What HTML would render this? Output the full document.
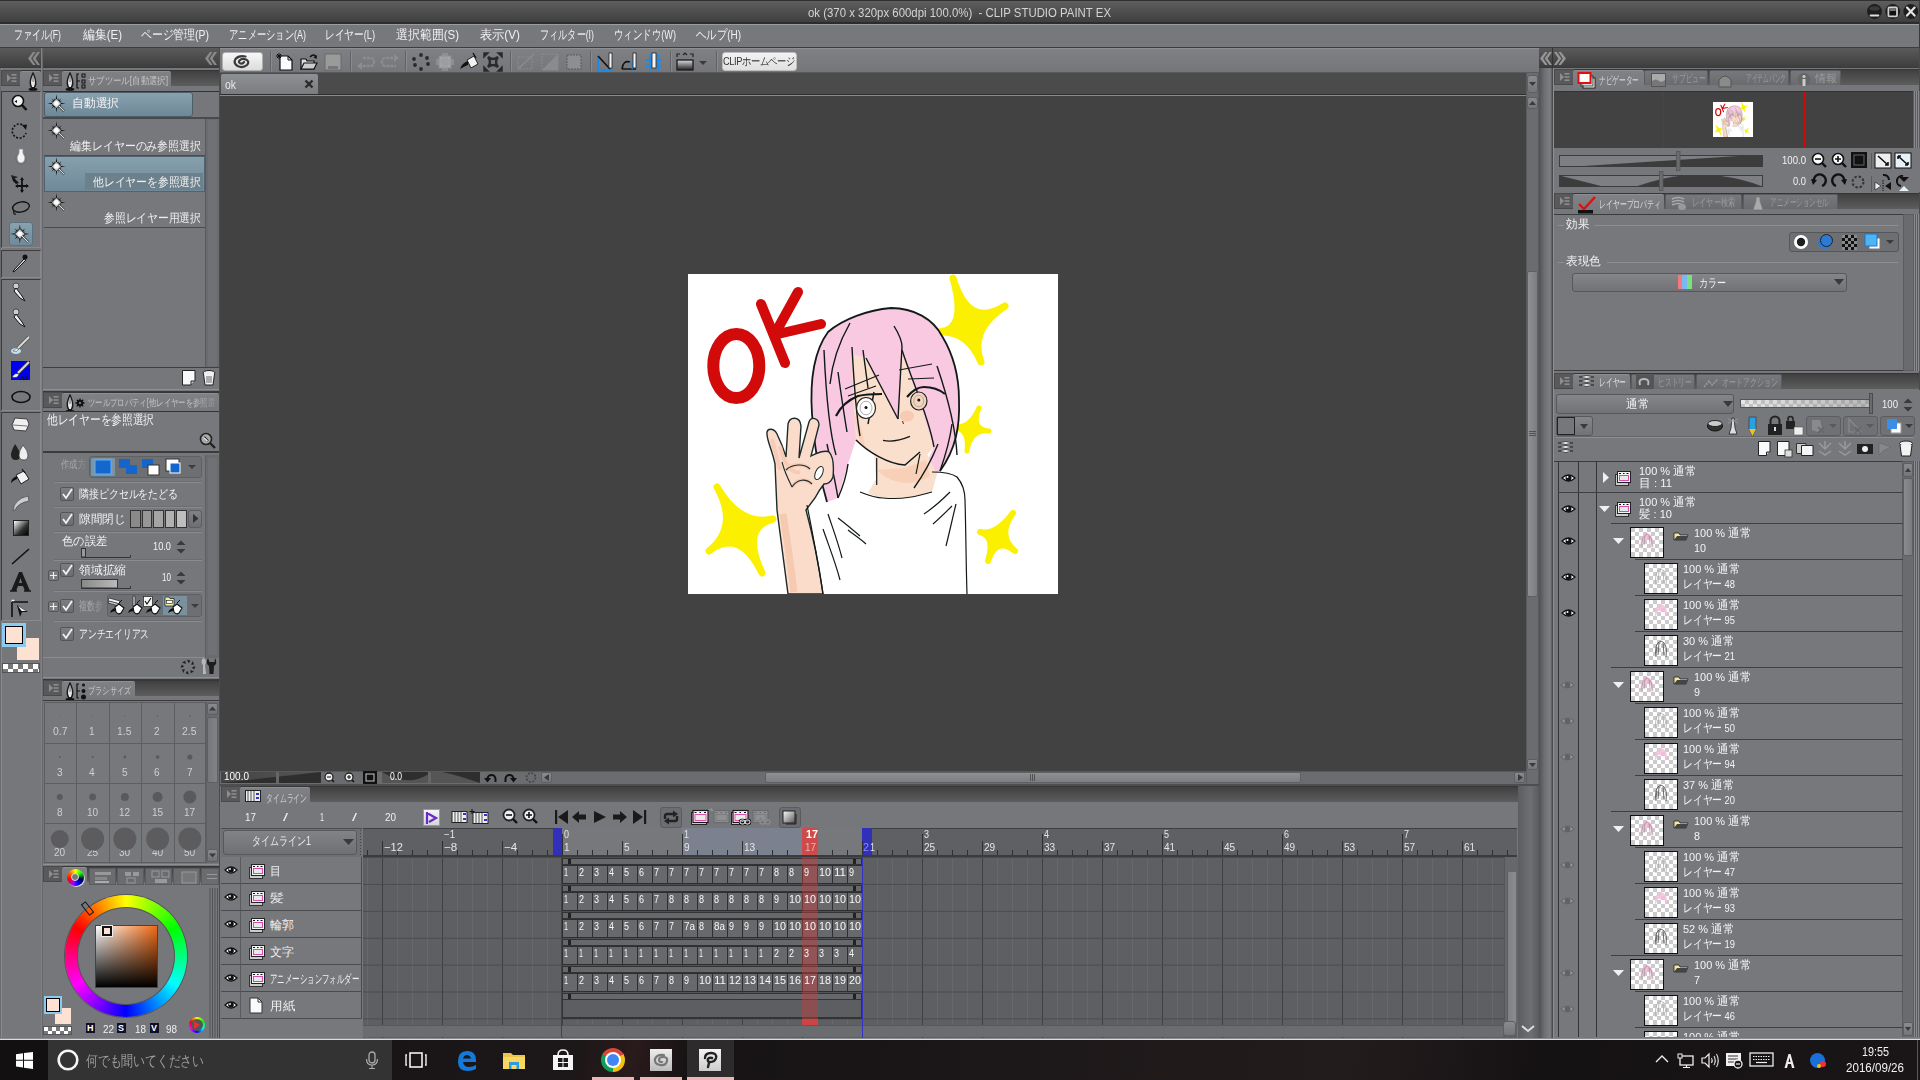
<!DOCTYPE html><html><head><meta charset="utf-8"><style>
html,body{margin:0;padding:0}
body{width:1920px;height:1080px;overflow:hidden;position:relative;background:#424242;font-family:"Liberation Sans",sans-serif}
.a{position:absolute;box-sizing:border-box}
.t{position:absolute;white-space:nowrap;line-height:1}
.f span{display:inline-block;transform-origin:0 0}
svg{position:absolute;overflow:visible}
</style></head><body>
<div class="a" style="left:0px;top:0px;width:1920px;height:24px;background:linear-gradient(#2f2f2f 0,#2f2f2f 1px,#5e5e5e 1px,#3f3f3f 22px,#2c2c2c 22px)"></div>
<div class="t f" style="left:808px;top:7px;width:303px;color:#d4d4d4;font-size:12px"><span>ok (370 x 320px 600dpi 100.0%)&nbsp; - CLIP STUDIO PAINT EX</span></div>
<svg style="left:1850px;top:0px;" width="70" height="24" viewBox="0 0 70 24"><circle cx="24.5" cy="11.5" r="7.4" fill="#1e1e1e"/><ellipse cx="24.5" cy="8.5" rx="5" ry="2.2" fill="#3a3a3a"/><rect x="19.7" y="14.6" width="9.6" height="1.8" rx="0.9" fill="#e0e0e0"/></svg>
<svg style="left:1850px;top:0px;" width="70" height="24" viewBox="0 0 70 24"><circle cx="42.700000000000045" cy="11.5" r="7.4" fill="#1e1e1e"/><rect x="38.40000000000005" y="7.5" width="8.6" height="8.8" rx="1" fill="#111" stroke="#cfcfcf" stroke-width="1.8"/><rect x="39.700000000000045" y="9" width="6" height="2" fill="#777"/></svg>
<svg style="left:1850px;top:0px;" width="70" height="24" viewBox="0 0 70 24"><circle cx="60.799999999999955" cy="11.5" r="7.4" fill="#1e1e1e"/><path d="M56.99999999999996 7.6 L64.59999999999995 15.6 M64.59999999999995 7.6 L56.99999999999996 15.6" stroke="#e4e4e4" stroke-width="2.2" stroke-linecap="round"/></svg>
<div class="a" style="left:1919px;top:0px;width:1px;height:47px;background:#3a3a3a"></div>
<div class="a" style="left:0px;top:24px;width:1919px;height:23px;background:linear-gradient(#9b9ca0 0,#9b9ca0 1px,#77787c 1px)"></div>
<div class="t f" style="left:14px;top:29px;width:47px;color:#f0f0f0;font-size:12.5px"><span>ファイル(F)</span></div>
<div class="t f" style="left:82.5px;top:29px;width:39px;color:#f0f0f0;font-size:12.5px"><span>編集(E)</span></div>
<div class="t f" style="left:141px;top:29px;width:68px;color:#f0f0f0;font-size:12.5px"><span>ページ管理(P)</span></div>
<div class="t f" style="left:229px;top:29px;width:77px;color:#f0f0f0;font-size:12.5px"><span>アニメーション(A)</span></div>
<div class="t f" style="left:325px;top:29px;width:50px;color:#f0f0f0;font-size:12.5px"><span>レイヤー(L)</span></div>
<div class="t f" style="left:396px;top:29px;width:63px;color:#f0f0f0;font-size:12.5px"><span>選択範囲(S)</span></div>
<div class="t f" style="left:480px;top:29px;width:40px;color:#f0f0f0;font-size:12.5px"><span>表示(V)</span></div>
<div class="t f" style="left:540px;top:29px;width:54px;color:#f0f0f0;font-size:12.5px"><span>フィルター(I)</span></div>
<div class="t f" style="left:614px;top:29px;width:62px;color:#f0f0f0;font-size:12.5px"><span>ウィンドウ(W)</span></div>
<div class="t f" style="left:696px;top:29px;width:45px;color:#f0f0f0;font-size:12.5px"><span>ヘルプ(H)</span></div>
<div class="a" style="left:0px;top:47px;width:1920px;height:1px;background:#3d3d3d"></div>
<div class="a" style="left:0px;top:48px;width:43px;height:992px;background:#76777b"></div>
<div class="a" style="left:0px;top:68px;width:1px;height:970px;background:#6a6b6f"></div>
<div class="a" style="left:1px;top:68px;width:1px;height:970px;background:#8a8b8f"></div>
<div class="a" style="left:0px;top:48px;width:41px;height:20px;background:linear-gradient(#5a5a5a,#3e3e3e);border-bottom:1px solid #3a3a3a"></div>
<svg style="left:28px;top:52px;" width="12" height="13" viewBox="0 0 12 13"><path d="M5 0 L0 6.5 L5 13 L7.6 13 L3.2 6.5 L7.6 0Z M9.4 0 L4.6 6.5 L9.4 13 L12 13 L7.6 6.5 L12 0Z" fill="#8a8a8a"/></svg>
<div class="a" style="left:41px;top:48px;width:2px;height:992px;background:linear-gradient(90deg,#8c8d90,#5b5c60)"></div>
<div class="a" style="left:1px;top:70px;width:40px;height:16px;background:linear-gradient(#404040,#5d5d5d);border-top:1px solid #363636"></div>
<div class="a" style="left:1px;top:86px;width:40px;height:5px;background:#76777b"></div>
<div class="a" style="left:1px;top:70px;width:20px;height:16px;background:#59595b;border:1px solid #4a4a4a"></div>
<svg style="left:1px;top:70px;" width="20" height="16" viewBox="0 0 20 16"><path d="M6 4 L10 8 L6 12Z" fill="#8d8d8d"/><rect x="10.5" y="4" width="5" height="1.6" fill="#8d8d8d"/><rect x="10.5" y="7.2" width="5" height="1.6" fill="#8d8d8d"/><rect x="10.5" y="10.4" width="5" height="1.6" fill="#8d8d8d"/></svg>
<div class="a" style="left:20px;top:71px;width:21px;height:20px;background:linear-gradient(#808185,#76777b);border-top:1px solid #8e8f93;border-radius:2px 2px 0 0"></div>
<svg style="left:28px;top:71px;" width="10" height="20" viewBox="0 0 10 20"><path d="M5 0.5 C7.2 5 8.8 9 8.4 13 C8.2 15 7.4 16.2 6.8 17 L3.2 17 C2.6 16.2 1.8 15 1.6 13 C1.2 9 2.8 5 5 0.5Z" fill="#1a1a1a"/><path d="M5 3.8 C6.4 7 7.2 10 6.9 12.8 C6.7 14.2 6.2 15.2 5.8 16 L4.2 16 C3.8 15.2 3.3 14.2 3.1 12.8 C2.8 10 3.6 7 5 3.8Z" fill="#e8e8e8"/><path d="M5 5 V11" stroke="#555" stroke-width=".9"/><ellipse cx="5" cy="18.3" rx="4.4" ry="1.5" fill="#111"/></svg>
<div class="a" style="left:1px;top:91px;width:40px;height:157px;border:1px solid #3d3d3d;border-right-color:#8a8a8e;border-bottom-color:#8a8a8e;background:#77787c"></div>
<div class="a" style="left:1px;top:250px;width:40px;height:28px;border:1px solid #3d3d3d;border-right-color:#8a8a8e;border-bottom-color:#8a8a8e;background:#77787c"></div>
<div class="a" style="left:1px;top:279px;width:40px;height:132px;border:1px solid #3d3d3d;border-right-color:#8a8a8e;border-bottom-color:#8a8a8e;background:#77787c"></div>
<div class="a" style="left:1px;top:412px;width:40px;height:209px;border:1px solid #3d3d3d;border-right-color:#8a8a8e;border-bottom-color:#8a8a8e;background:#77787c"></div>
<svg style="left:8px;top:93px;" width="26" height="20" viewBox="0 0 26 20"><circle cx="10" cy="8" r="5.5" fill="#f2f2f2" stroke="#111" stroke-width="1.6"/><path d="M6.5 8.5 L9 7 L9 10Z" fill="#111"/><path d="M14 12 L18.5 17" stroke="#111" stroke-width="2.6"/></svg>
<svg style="left:8px;top:121px;" width="26" height="20" viewBox="0 0 26 20"><path d="M17 6 A7 7 0 1 0 18 12" fill="none" stroke="#111" stroke-width="1.6" stroke-dasharray="2 1.6"/><path d="M14 4 L19 3.5 L18 9Z" fill="#111"/></svg>
<svg style="left:8px;top:147px;" width="26" height="20" viewBox="0 0 26 20"><circle cx="13" cy="12" r="6" fill="#6a6a6a" opacity=".5"/><path d="M11 2 H15 V6 L17 10 Q17 16 13 16 Q9 16 9 10 L11 6Z" fill="#f4f4f4" stroke="#888" stroke-width=".8"/></svg>
<svg style="left:8px;top:173px;" width="26" height="20" viewBox="0 0 26 20"><path d="M3 2 L11 10 L8 11 L5 8Z" fill="#111"/><path d="M3 2 L10 4 L6 6Z" fill="#222"/><path d="M14 6 V19 M8 13 H20" stroke="#111" stroke-width="1.8"/><path d="M14 4 L12 7 H16Z M14 20 L12 17 H16Z M21 13 L18 11 V15Z M7 13 L10 11 V15Z" fill="#111"/></svg>
<svg style="left:8px;top:198px;" width="26" height="20" viewBox="0 0 26 20"><ellipse cx="13" cy="9" rx="8.5" ry="5" transform="rotate(-12 13 9)" fill="none" stroke="#111" stroke-width="1.4"/><path d="M6 13 Q5 17 8 16" fill="none" stroke="#111" stroke-width="1.2"/></svg>
<div class="a" style="left:9px;top:222px;width:24px;height:24px;background:linear-gradient(#88a2b0,#6f8a99);border:1px solid #5c7280;border-radius:3px"></div>
<svg style="left:12px;top:226px;" width="18" height="18" viewBox="0 0 18 18"><g transform="scale(1.125)"><path d="M7.00 8.20 L15.60 7.00 L7.00 5.80Z M6.62 7.92 L11.99 9.07 L7.38 6.08Z M6.29 7.71 L11.67 11.67 L7.71 6.29Z M6.08 7.38 L9.07 11.99 L7.92 6.62Z M5.80 7.00 L7.00 15.60 L8.20 7.00Z M6.08 6.62 L4.93 11.99 L7.92 7.38Z M6.29 6.29 L2.33 11.67 L7.71 7.71Z M6.62 6.08 L2.01 9.07 L7.38 7.92Z M7.00 5.80 L-1.60 7.00 L7.00 8.20Z M7.38 6.08 L2.01 4.93 L6.62 7.92Z M7.71 6.29 L2.33 2.33 L6.29 7.71Z M7.92 6.62 L4.93 2.01 L6.08 7.38Z M8.20 7.00 L7.00 -1.60 L5.80 7.00Z M7.92 7.38 L9.07 2.01 L6.08 6.62Z M7.71 7.71 L11.67 2.33 L6.29 6.29Z M7.38 7.92 L11.99 4.93 L6.62 6.08Z " fill="#111"/><circle cx="7" cy="7" r="4.2" fill="#222" opacity=".5"/><path d="M7 2.8 L11.2 7 L7 11.2 L2.8 7Z" fill="#c8c8c8"/><circle cx="7" cy="7" r="2.2" fill="#fff"/><path d="M9 9 L14.5 14.5" stroke="#222" stroke-width="2"/><path d="M9 9 L14.5 14.5" stroke="#e8e8e8" stroke-width="1"/></g></svg>
<svg style="left:8px;top:253px;" width="26" height="20" viewBox="0 0 26 20"><circle cx="17" cy="4" r="2.5" fill="#111"/><path d="M16 6 L6 17 L5 19 L7 18 L18 7Z" fill="#ddd" stroke="#111" stroke-width="1"/></svg>
<svg style="left:8px;top:282px;" width="26" height="20" viewBox="0 0 26 20"><circle cx="8" cy="4" r="3" fill="#ccc" stroke="#333" stroke-width=".8"/><path d="M8 6 L14 14 L17 19 L12 16 L6 9Z" fill="#eee" stroke="#111" stroke-width="1"/></svg>
<svg style="left:8px;top:308px;" width="26" height="20" viewBox="0 0 26 20"><circle cx="8" cy="4" r="3" fill="#ccc" stroke="#333" stroke-width=".8"/><path d="M8 6 L14 14 L17 19 L12 16 L6 9Z" fill="#eee" stroke="#111" stroke-width="1"/></svg>
<svg style="left:8px;top:335px;" width="26" height="20" viewBox="0 0 26 20"><path d="M21 2 L10 13" stroke="#555" stroke-width="3.5"/><path d="M21 2 L10 13" stroke="#ddd" stroke-width="1.8"/><ellipse cx="8" cy="16" rx="5" ry="3" fill="#bfe0f4"/><path d="M5 16 Q8 12 11 14 Q9 18 5 16Z" fill="#eee" stroke="#555" stroke-width=".6"/></svg>
<div class="a" style="left:11px;top:361px;width:19px;height:19px;background:#0000ee"></div>
<svg style="left:8px;top:361px;" width="26" height="20" viewBox="0 0 26 20"><path d="M21 1 L10 12" stroke="#444" stroke-width="3.5"/><path d="M21 1 L10 12" stroke="#ddd" stroke-width="1.8"/><path d="M4 16 Q7 11 11 13 Q10 18 4 16Z" fill="#eee" stroke="#333" stroke-width=".7"/><path d="M12 17 q2 -3 4 0 q2 -3 4 0 M12 19 q2 -3 4 0 q2 -3 4 0" stroke="#111" fill="none" stroke-width="1"/></svg>
<svg style="left:8px;top:387px;" width="26" height="20" viewBox="0 0 26 20"><ellipse cx="13" cy="10" rx="9" ry="5.5" fill="none" stroke="#111" stroke-width="1.6"/></svg>
<svg style="left:8px;top:415px;" width="26" height="20" viewBox="0 0 26 20"><path d="M7 3 L19 4 L21 9 L18 16 L6 15 L4 10Z" fill="#f0f0f0" stroke="#333" stroke-width=".9"/><path d="M5 10 L19 11" stroke="#777" stroke-width="1"/></svg>
<svg style="left:8px;top:442px;" width="26" height="20" viewBox="0 0 26 20"><path d="M7 2 Q3 9 3 13 Q3 18 8 18 Q12 18 12 13 Q12 9 7 2Z" fill="#222"/><path d="M15 3 Q11 9 11 13 Q11 18 16 18 Q20 18 20 13 Q20 9 15 3Z" fill="#eee" stroke="#333" stroke-width=".7"/></svg>
<svg style="left:8px;top:467px;" width="26" height="20" viewBox="0 0 26 20"><path d="M8 8 L16 4 L21 12 L13 17Z" fill="#f2f2f2" stroke="#222" stroke-width="1"/><path d="M9 9 Q3 11 3 16 Q6 13 9 12" fill="#111"/><path d="M14 2 L17 6" stroke="#111" stroke-width="1.2"/></svg>
<svg style="left:8px;top:493px;" width="26" height="20" viewBox="0 0 26 20"><path d="M5 18 Q6 6 20 3 L21 8 Q10 10 7 17Z" fill="#ccc" stroke="#444" stroke-width=".7"/></svg>
<div class="a" style="left:13px;top:520px;width:16px;height:16px;background:linear-gradient(135deg,#fff,#333 60%,#000);border:1px solid #222"></div>
<svg style="left:8px;top:546px;" width="26" height="20" viewBox="0 0 26 20"><path d="M4 18 L21 3" stroke="#111" stroke-width="1.6"/></svg>
<svg style="left:9px;top:570px;" width="24" height="24" viewBox="0 0 24 24"><path d="M2 21 L10 2 H13 L21 21 H16 L14 16 H9 L7 21Z M10 13 H13 L11.5 8Z" fill="#1a1a1a"/><path d="M1 21 H8 M15 21 H22" stroke="#1a1a1a" stroke-width="1.5"/></svg>
<svg style="left:8px;top:598px;" width="26" height="20" viewBox="0 0 26 20"><circle cx="5" cy="3" r="1.5" fill="#fff"/><path d="M4 4 V19 M4 4 H20" stroke="#111" stroke-width="1.6"/><path d="M9 7 L20 14 L14 14 L12 19Z" fill="#111"/><path d="M10 8 L18 13 L13.5 13Z" fill="#eee"/></svg>
<div class="a" style="left:16px;top:637px;width:24px;height:24px;background:#fde1d2;border:1px solid #777"></div>
<div class="a" style="left:2px;top:623px;width:24px;height:24px;background:#fde1d2;border:3px solid #8ccbef;box-shadow:inset 0 0 0 1px #000"></div>
<div class="a" style="left:2px;top:663px;width:38px;height:10px;background-color:#fff;background-image:linear-gradient(45deg,#777 25%,transparent 25%,transparent 75%,#777 75%),linear-gradient(45deg,#777 25%,transparent 25%,transparent 75%,#777 75%);background-size:10px 10px;background-position:0 0,5px 5px;border:1px solid #555"></div>
<div class="a" style="left:43px;top:48px;width:177px;height:992px;background:#76777b"></div>
<div class="a" style="left:43px;top:48px;width:177px;height:20px;background:linear-gradient(#5a5a5a,#3e3e3e);border-bottom:1px solid #3a3a3a"></div>
<svg style="left:205px;top:52px;" width="12" height="13" viewBox="0 0 12 13"><path d="M5 0 L0 6.5 L5 13 L7.6 13 L3.2 6.5 L7.6 0Z M9.4 0 L4.6 6.5 L9.4 13 L12 13 L7.6 6.5 L12 0Z" fill="#8a8a8a"/></svg>
<div class="a" style="left:219px;top:48px;width:1px;height:992px;background:#4b4b4b"></div>
<div class="a" style="left:43px;top:70px;width:176px;height:16px;background:linear-gradient(#404040,#5d5d5d);border-top:1px solid #363636"></div>
<div class="a" style="left:43px;top:86px;width:176px;height:5px;background:#76777b"></div>
<div class="a" style="left:43px;top:70px;width:20px;height:16px;background:#59595b;border:1px solid #4a4a4a"></div>
<svg style="left:43px;top:70px;" width="20" height="16" viewBox="0 0 20 16"><path d="M6 4 L10 8 L6 12Z" fill="#8d8d8d"/><rect x="10.5" y="4" width="5" height="1.6" fill="#8d8d8d"/><rect x="10.5" y="7.2" width="5" height="1.6" fill="#8d8d8d"/><rect x="10.5" y="10.4" width="5" height="1.6" fill="#8d8d8d"/></svg>
<div class="a" style="left:62px;top:71px;width:109px;height:20px;background:linear-gradient(#808185,#76777b);border-top:1px solid #8e8f93;border-radius:2px 2px 0 0"></div>
<svg style="left:65px;top:71px;" width="10" height="20" viewBox="0 0 10 20"><path d="M5 0.5 C7.2 5 8.8 9 8.4 13 C8.2 15 7.4 16.2 6.8 17 L3.2 17 C2.6 16.2 1.8 15 1.6 13 C1.2 9 2.8 5 5 0.5Z" fill="#1a1a1a"/><path d="M5 3.8 C6.4 7 7.2 10 6.9 12.8 C6.7 14.2 6.2 15.2 5.8 16 L4.2 16 C3.8 15.2 3.3 14.2 3.1 12.8 C2.8 10 3.6 7 5 3.8Z" fill="#e8e8e8"/><path d="M5 5 V11" stroke="#555" stroke-width=".9"/><ellipse cx="5" cy="18.3" rx="4.4" ry="1.5" fill="#111"/></svg>
<svg style="left:75px;top:71px;" width="12" height="20" viewBox="0 0 12 20"><path d="M4 3 H2 V17 H4 M2 10 H5" stroke="#111" fill="none" stroke-width="1.2"/><rect x="7" y="3" width="3" height="3" fill="none" stroke="#111"/><rect x="7" y="9" width="3" height="3" fill="none" stroke="#111"/><rect x="7" y="14" width="3" height="3" fill="none" stroke="#111"/></svg>
<div class="t f" style="left:88px;top:76px;width:80px;color:#c6c6c6;font-size:10px"><span>サブツール[自動選択]</span></div>
<div class="a" style="left:43px;top:91px;width:176px;height:277px;border-top:1px solid #333;background:#76777b"></div>
<div class="a" style="left:44px;top:92px;width:149px;height:25px;background:linear-gradient(#88a1af,#6e8897);border:1px solid #4d5d68;border-radius:3px"></div>
<svg style="left:49px;top:96px;" width="17" height="17" viewBox="0 0 17 17"><g transform="scale(1.0625)"><path d="M7.00 8.20 L15.60 7.00 L7.00 5.80Z M6.62 7.92 L11.99 9.07 L7.38 6.08Z M6.29 7.71 L11.67 11.67 L7.71 6.29Z M6.08 7.38 L9.07 11.99 L7.92 6.62Z M5.80 7.00 L7.00 15.60 L8.20 7.00Z M6.08 6.62 L4.93 11.99 L7.92 7.38Z M6.29 6.29 L2.33 11.67 L7.71 7.71Z M6.62 6.08 L2.01 9.07 L7.38 7.92Z M7.00 5.80 L-1.60 7.00 L7.00 8.20Z M7.38 6.08 L2.01 4.93 L6.62 7.92Z M7.71 6.29 L2.33 2.33 L6.29 7.71Z M7.92 6.62 L4.93 2.01 L6.08 7.38Z M8.20 7.00 L7.00 -1.60 L5.80 7.00Z M7.92 7.38 L9.07 2.01 L6.08 6.62Z M7.71 7.71 L11.67 2.33 L6.29 6.29Z M7.38 7.92 L11.99 4.93 L6.62 6.08Z " fill="#111"/><circle cx="7" cy="7" r="4.2" fill="#222" opacity=".5"/><path d="M7 2.8 L11.2 7 L7 11.2 L2.8 7Z" fill="#c8c8c8"/><circle cx="7" cy="7" r="2.2" fill="#fff"/><path d="M9 9 L14.5 14.5" stroke="#222" stroke-width="2"/><path d="M9 9 L14.5 14.5" stroke="#e8e8e8" stroke-width="1"/></g></svg>
<div class="t f" style="left:72px;top:97px;width:47px;color:#f4f4f4;font-size:12px"><span>自動選択</span></div>
<div class="a" style="left:43px;top:117px;width:176px;height:2px;background:#4a4a4a"></div>
<div class="a" style="left:205px;top:119px;width:14px;height:249px;background:#6a6b6f;border-left:1px solid #58595c"></div>
<div class="a" style="left:208px;top:120px;width:9px;height:246px;background:#707175"></div>
<div class="a" style="left:44px;top:120px;width:161px;height:36px;background:#77787c;border-bottom:1px solid #4a4a4a"></div>
<svg style="left:49px;top:123px;" width="17" height="17" viewBox="0 0 17 17"><g transform="scale(1.0625)"><path d="M7.00 8.20 L15.60 7.00 L7.00 5.80Z M6.62 7.92 L11.99 9.07 L7.38 6.08Z M6.29 7.71 L11.67 11.67 L7.71 6.29Z M6.08 7.38 L9.07 11.99 L7.92 6.62Z M5.80 7.00 L7.00 15.60 L8.20 7.00Z M6.08 6.62 L4.93 11.99 L7.92 7.38Z M6.29 6.29 L2.33 11.67 L7.71 7.71Z M6.62 6.08 L2.01 9.07 L7.38 7.92Z M7.00 5.80 L-1.60 7.00 L7.00 8.20Z M7.38 6.08 L2.01 4.93 L6.62 7.92Z M7.71 6.29 L2.33 2.33 L6.29 7.71Z M7.92 6.62 L4.93 2.01 L6.08 7.38Z M8.20 7.00 L7.00 -1.60 L5.80 7.00Z M7.92 7.38 L9.07 2.01 L6.08 6.62Z M7.71 7.71 L11.67 2.33 L6.29 6.29Z M7.38 7.92 L11.99 4.93 L6.62 6.08Z " fill="#111"/><circle cx="7" cy="7" r="4.2" fill="#222" opacity=".5"/><path d="M7 2.8 L11.2 7 L7 11.2 L2.8 7Z" fill="#c8c8c8"/><circle cx="7" cy="7" r="2.2" fill="#fff"/><path d="M9 9 L14.5 14.5" stroke="#222" stroke-width="2"/><path d="M9 9 L14.5 14.5" stroke="#e8e8e8" stroke-width="1"/></g></svg>
<div class="t f" style="left:70px;top:140px;width:131px;color:#f0f0f0;font-size:12px"><span>編集レイヤーのみ参照選択</span></div>
<div class="a" style="left:44px;top:156px;width:161px;height:36px;background:linear-gradient(#86a0ae,#6f8998);border:1px solid #4f6370"></div>
<div class="a" style="left:85px;top:173px;width:118px;height:17px;background:#6d818d"></div>
<svg style="left:49px;top:159px;" width="17" height="17" viewBox="0 0 17 17"><g transform="scale(1.0625)"><path d="M7.00 8.20 L15.60 7.00 L7.00 5.80Z M6.62 7.92 L11.99 9.07 L7.38 6.08Z M6.29 7.71 L11.67 11.67 L7.71 6.29Z M6.08 7.38 L9.07 11.99 L7.92 6.62Z M5.80 7.00 L7.00 15.60 L8.20 7.00Z M6.08 6.62 L4.93 11.99 L7.92 7.38Z M6.29 6.29 L2.33 11.67 L7.71 7.71Z M6.62 6.08 L2.01 9.07 L7.38 7.92Z M7.00 5.80 L-1.60 7.00 L7.00 8.20Z M7.38 6.08 L2.01 4.93 L6.62 7.92Z M7.71 6.29 L2.33 2.33 L6.29 7.71Z M7.92 6.62 L4.93 2.01 L6.08 7.38Z M8.20 7.00 L7.00 -1.60 L5.80 7.00Z M7.92 7.38 L9.07 2.01 L6.08 6.62Z M7.71 7.71 L11.67 2.33 L6.29 6.29Z M7.38 7.92 L11.99 4.93 L6.62 6.08Z " fill="#111"/><circle cx="7" cy="7" r="4.2" fill="#222" opacity=".5"/><path d="M7 2.8 L11.2 7 L7 11.2 L2.8 7Z" fill="#c8c8c8"/><circle cx="7" cy="7" r="2.2" fill="#fff"/><path d="M9 9 L14.5 14.5" stroke="#222" stroke-width="2"/><path d="M9 9 L14.5 14.5" stroke="#e8e8e8" stroke-width="1"/></g></svg>
<div class="t f" style="left:93px;top:176px;width:108px;color:#f0f0f0;font-size:12px"><span>他レイヤーを参照選択</span></div>
<div class="a" style="left:44px;top:192px;width:161px;height:36px;background:#77787c;border-bottom:1px solid #4a4a4a"></div>
<svg style="left:49px;top:195px;" width="17" height="17" viewBox="0 0 17 17"><g transform="scale(1.0625)"><path d="M7.00 8.20 L15.60 7.00 L7.00 5.80Z M6.62 7.92 L11.99 9.07 L7.38 6.08Z M6.29 7.71 L11.67 11.67 L7.71 6.29Z M6.08 7.38 L9.07 11.99 L7.92 6.62Z M5.80 7.00 L7.00 15.60 L8.20 7.00Z M6.08 6.62 L4.93 11.99 L7.92 7.38Z M6.29 6.29 L2.33 11.67 L7.71 7.71Z M6.62 6.08 L2.01 9.07 L7.38 7.92Z M7.00 5.80 L-1.60 7.00 L7.00 8.20Z M7.38 6.08 L2.01 4.93 L6.62 7.92Z M7.71 6.29 L2.33 2.33 L6.29 7.71Z M7.92 6.62 L4.93 2.01 L6.08 7.38Z M8.20 7.00 L7.00 -1.60 L5.80 7.00Z M7.92 7.38 L9.07 2.01 L6.08 6.62Z M7.71 7.71 L11.67 2.33 L6.29 6.29Z M7.38 7.92 L11.99 4.93 L6.62 6.08Z " fill="#111"/><circle cx="7" cy="7" r="4.2" fill="#222" opacity=".5"/><path d="M7 2.8 L11.2 7 L7 11.2 L2.8 7Z" fill="#c8c8c8"/><circle cx="7" cy="7" r="2.2" fill="#fff"/><path d="M9 9 L14.5 14.5" stroke="#222" stroke-width="2"/><path d="M9 9 L14.5 14.5" stroke="#e8e8e8" stroke-width="1"/></g></svg>
<div class="t f" style="left:104px;top:212px;width:97px;color:#f0f0f0;font-size:12px"><span>参照レイヤー用選択</span></div>
<div class="a" style="left:43px;top:367px;width:176px;height:1px;background:#3f3f3f"></div>
<svg style="left:181px;top:369px;" width="16" height="18" viewBox="0 0 16 18"><path d="M1.5 1.5 H14 V12 L10 16 H1.5Z" fill="#f6f8fa" stroke="#222" stroke-width="1"/><path d="M14 12 H10 V16" fill="#ccc" stroke="#222" stroke-width="1"/></svg>
<svg style="left:201px;top:369px;" width="16" height="18" viewBox="0 0 16 18"><ellipse cx="8" cy="4" rx="6" ry="2.5" fill="#eee" stroke="#222"/><path d="M2.5 5 L4 16 H12 L13.5 5" fill="#f2f2f2" stroke="#222"/><path d="M6 7 V14 M8 7 V14 M10 7 V14" stroke="#666"/></svg>
<div class="a" style="left:43px;top:389px;width:176px;height:1px;background:#8e8f93"></div>
<div class="a" style="left:43px;top:391px;width:176px;height:1px;background:#3a3a3a"></div>
<div class="a" style="left:43px;top:392px;width:176px;height:16px;background:linear-gradient(#404040,#5d5d5d);border-top:1px solid #363636"></div>
<div class="a" style="left:43px;top:408px;width:176px;height:4px;background:#76777b"></div>
<div class="a" style="left:43px;top:392px;width:20px;height:16px;background:#59595b;border:1px solid #4a4a4a"></div>
<svg style="left:43px;top:392px;" width="20" height="16" viewBox="0 0 20 16"><path d="M6 4 L10 8 L6 12Z" fill="#8d8d8d"/><rect x="10.5" y="4" width="5" height="1.6" fill="#8d8d8d"/><rect x="10.5" y="7.2" width="5" height="1.6" fill="#8d8d8d"/><rect x="10.5" y="10.4" width="5" height="1.6" fill="#8d8d8d"/></svg>
<div class="a" style="left:62px;top:393px;width:157px;height:19px;background:linear-gradient(#808185,#76777b);border-top:1px solid #8e8f93;border-radius:2px 2px 0 0"></div>
<svg style="left:65px;top:393px;" width="10" height="20" viewBox="0 0 10 20"><path d="M5 0.5 C7.2 5 8.8 9 8.4 13 C8.2 15 7.4 16.2 6.8 17 L3.2 17 C2.6 16.2 1.8 15 1.6 13 C1.2 9 2.8 5 5 0.5Z" fill="#1a1a1a"/><path d="M5 3.8 C6.4 7 7.2 10 6.9 12.8 C6.7 14.2 6.2 15.2 5.8 16 L4.2 16 C3.8 15.2 3.3 14.2 3.1 12.8 C2.8 10 3.6 7 5 3.8Z" fill="#e8e8e8"/><path d="M5 5 V11" stroke="#555" stroke-width=".9"/><ellipse cx="5" cy="18.3" rx="4.4" ry="1.5" fill="#111"/></svg>
<svg style="left:75px;top:398px;" width="10" height="10" viewBox="0 0 10 10"><circle cx="5" cy="5" r="3.2" fill="#111"/><path d="M5 0.5 V9.5 M0.5 5 H9.5 M1.8 1.8 L8.2 8.2 M8.2 1.8 L1.8 8.2" stroke="#111" stroke-width="1.3"/><circle cx="5" cy="5" r="1.2" fill="#777"/></svg>
<div class="t f" style="left:88px;top:398px;width:127px;color:#c4c4c4;font-size:10px;-webkit-mask-image:linear-gradient(90deg,#000 80%,rgba(0,0,0,.3))"><span>ツールプロパティ[他レイヤーを参照選</span></div>
<div class="a" style="left:43px;top:411px;width:176px;height:42px;border-top:1px solid #333;border-bottom:2px solid #3b3b3b;background:#77787c"></div>
<div class="t f" style="left:47px;top:414px;width:107px;color:#f2f2f2;font-size:12.5px"><span>他レイヤーを参照選択</span></div>
<svg style="left:199px;top:432px;" width="18" height="17" viewBox="0 0 18 17"><circle cx="7" cy="7" r="5.5" fill="#aaa" stroke="#222" stroke-width="1.6"/><path d="M5 5 L9 9 M11 11 L16 16" stroke="#222" stroke-width="2.4"/><path d="M4.5 5.5 L8.5 9" stroke="#eee" stroke-width="1.4"/></svg>
<div class="a" style="left:43px;top:453px;width:176px;height:205px;background:#76777b;border-bottom:1px solid #8c8d91"></div>
<div class="a" style="left:205px;top:455px;width:14px;height:203px;background:#6a6b6f;border-left:1px solid #5e5f63"></div>
<div class="a" style="left:208px;top:458px;width:9px;height:197px;background:#707175"></div>
<div class="t f" style="left:61px;top:459px;width:25px;color:#a8a8a8;font-size:11px;-webkit-mask-image:linear-gradient(90deg,#000 60%,rgba(0,0,0,.3))"><span>作成方</span></div>
<div class="a" style="left:89px;top:456px;width:113px;height:22px;background:#6e6f73;border:1px solid #5f6064;border-radius:3px"></div>
<div class="a" style="left:90px;top:457px;width:26px;height:20px;background:#7e94a0;border:1px solid #5d7583;border-radius:2px"></div>
<svg style="left:90px;top:456px;" width="113" height="22" viewBox="0 0 113 22"><rect x="5" y="4" width="16" height="14" fill="#1566cf" stroke="#59b3ff" stroke-width="1"/><rect x="29" y="3" width="11" height="9" fill="#1466cc"/><rect x="36" y="9" width="11" height="9" fill="#1466cc"/><rect x="52" y="3" width="11" height="9" fill="#1466cc"/><rect x="58" y="9" width="11" height="10" fill="#fff" stroke="#333"/><rect x="76" y="3" width="13" height="12" fill="#fff" stroke="#333"/><rect x="80" y="7" width="10" height="10" fill="#1466cc" stroke="#fff"/><path d="M98 9 L106 9 L102 13Z" fill="#3d3d3d"/></svg>
<div class="a" style="left:54px;top:482px;width:148px;height:1px;background:#8a8b8f"></div>
<div class="a" style="left:54px;top:481px;width:148px;height:1px;background:#6c6d71"></div>
<div class="a" style="left:54px;top:507px;width:148px;height:1px;background:#8a8b8f"></div>
<div class="a" style="left:54px;top:506px;width:148px;height:1px;background:#6c6d71"></div>
<div class="a" style="left:54px;top:532px;width:148px;height:1px;background:#8a8b8f"></div>
<div class="a" style="left:54px;top:531px;width:148px;height:1px;background:#6c6d71"></div>
<div class="a" style="left:54px;top:560px;width:148px;height:1px;background:#8a8b8f"></div>
<div class="a" style="left:54px;top:559px;width:148px;height:1px;background:#6c6d71"></div>
<div class="a" style="left:54px;top:591px;width:148px;height:1px;background:#8a8b8f"></div>
<div class="a" style="left:54px;top:590px;width:148px;height:1px;background:#6c6d71"></div>
<div class="a" style="left:54px;top:621px;width:148px;height:1px;background:#8a8b8f"></div>
<div class="a" style="left:54px;top:620px;width:148px;height:1px;background:#6c6d71"></div>
<div class="a" style="left:60px;top:487px;width:14px;height:14px;background:linear-gradient(#7d7e82,#6a6b6f);border:1px solid #555;border-radius:2px"></div>
<svg style="left:60px;top:487px;" width="14" height="14" viewBox="0 0 14 14"><path d="M3 7 L6 11 L12 2" fill="none" stroke="#f2f2f2" stroke-width="1.8"/></svg>
<div class="t f" style="left:79px;top:488px;width:99px;color:#f2f2f2;font-size:12px"><span>隣接ピクセルをたどる</span></div>
<div class="a" style="left:60px;top:512px;width:14px;height:14px;background:linear-gradient(#7d7e82,#6a6b6f);border:1px solid #555;border-radius:2px"></div>
<svg style="left:60px;top:512px;" width="14" height="14" viewBox="0 0 14 14"><path d="M3 7 L6 11 L12 2" fill="none" stroke="#f2f2f2" stroke-width="1.8"/></svg>
<div class="t f" style="left:79px;top:513px;width:46px;color:#f2f2f2;font-size:12px"><span>隙間閉じ</span></div>
<div class="a" style="left:130.0px;top:510px;width:10.5px;height:18px;background:#8a8a8a;border:1px solid #333"></div>
<div class="a" style="left:141.6px;top:510px;width:10.5px;height:18px;background:#979797;border:1px solid #333"></div>
<div class="a" style="left:153.2px;top:510px;width:10.5px;height:18px;background:#a4a4a4;border:1px solid #333"></div>
<div class="a" style="left:164.8px;top:510px;width:10.5px;height:18px;background:#b1b1b1;border:1px solid #333"></div>
<div class="a" style="left:176.4px;top:510px;width:10.5px;height:18px;background:#bebebe;border:1px solid #333"></div>
<div class="a" style="left:188px;top:510px;width:14px;height:18px;background:linear-gradient(#818286,#6d6e72);border:1px solid #5c5d61;border-radius:3px"></div>
<svg style="left:193px;top:514px;" width="6" height="9" viewBox="0 0 6 9"><path d="M0 0 L5.5 4.5 L0 9Z" fill="#333"/></svg>
<div class="t f" style="left:62px;top:535px;width:45px;color:#f2f2f2;font-size:12px"><span>色の誤差</span></div>
<div class="t f" style="left:153px;top:541px;width:18px;color:#f4f4f4;font-size:10.5px"><span>10.0</span></div>
<svg style="left:176px;top:540px;" width="10" height="14" viewBox="0 0 10 14"><path d="M5 0.5 L9.5 5 L0.5 5Z M5 13.5 L9.5 9 L0.5 9Z" fill="#3a3a3a"/></svg>
<svg style="left:81px;top:548px;" width="50" height="10" viewBox="0 0 50 10"><path d="M0.5 9.5 H49.5 V7" fill="none" stroke="#333" stroke-width="1"/><rect x="0.5" y="0.5" width="4" height="8.5" fill="#999" stroke="#333"/></svg>
<div class="a" style="left:48px;top:570px;width:11px;height:11px;border:1px solid #555;border-radius:2px;background:#7a7b7f"></div>
<svg style="left:48px;top:570px;" width="11" height="11" viewBox="0 0 11 11"><path d="M5.5 2 V9 M2 5.5 H9" stroke="#eee" stroke-width="1.2"/></svg>
<div class="a" style="left:60px;top:563px;width:14px;height:14px;background:linear-gradient(#7d7e82,#6a6b6f);border:1px solid #555;border-radius:2px"></div>
<svg style="left:60px;top:563px;" width="14" height="14" viewBox="0 0 14 14"><path d="M3 7 L6 11 L12 2" fill="none" stroke="#f2f2f2" stroke-width="1.8"/></svg>
<div class="t f" style="left:79px;top:564px;width:47px;color:#f2f2f2;font-size:12px"><span>領域拡縮</span></div>
<div class="t f" style="left:162px;top:572px;width:9px;color:#f4f4f4;font-size:10.5px"><span>10</span></div>
<svg style="left:176px;top:571px;" width="10" height="14" viewBox="0 0 10 14"><path d="M5 0.5 L9.5 5 L0.5 5Z M5 13.5 L9.5 9 L0.5 9Z" fill="#3a3a3a"/></svg>
<svg style="left:81px;top:579px;" width="50" height="10" viewBox="0 0 50 10"><path d="M0.5 9.5 H49.5 V7" fill="none" stroke="#333" stroke-width="1"/><rect x="0.5" y="0.5" width="36" height="8.5" fill="url(#gsl)" stroke="#333"/><defs><linearGradient id="gsl"><stop offset="0" stop-color="#888"/><stop offset="1" stop-color="#bbb"/></linearGradient></defs></svg>
<div class="a" style="left:48px;top:601px;width:11px;height:11px;border:1px solid #555;border-radius:2px;background:#7a7b7f"></div>
<svg style="left:48px;top:601px;" width="11" height="11" viewBox="0 0 11 11"><path d="M5.5 2 V9 M2 5.5 H9" stroke="#eee" stroke-width="1.2"/></svg>
<div class="a" style="left:60px;top:599px;width:14px;height:14px;background:linear-gradient(#7d7e82,#6a6b6f);border:1px solid #555;border-radius:2px"></div>
<svg style="left:60px;top:599px;" width="14" height="14" viewBox="0 0 14 14"><path d="M3 7 L6 11 L12 2" fill="none" stroke="#f2f2f2" stroke-width="1.8"/></svg>
<div class="t f" style="left:79px;top:600px;width:24px;color:#a8a8a8;font-size:12px;-webkit-mask-image:linear-gradient(90deg,#000 50%,rgba(0,0,0,.3))"><span>複数参</span></div>
<div class="a" style="left:107px;top:594px;width:95px;height:23px;background:#6e6f73;border:1px solid #5f6064;border-radius:3px"></div>
<div class="a" style="left:162px;top:595px;width:26px;height:21px;background:#7b909c;border:1px solid #5d7583"></div>
<svg style="left:107px;top:594px;" width="95" height="23" viewBox="0 0 95 23"><g stroke="#222" stroke-width=".7"><path d="M2 4 L13 7 L12 10 L1 7Z" fill="#eee"/><path d="M2 7 L13 10 L12 12 L1 9Z" fill="#ccc"/><path d="M22 3 L32 11 M32 3 L22 11" stroke="#777"/><path d="M26 2 h2 v10 h-2z" fill="#ddd"/><rect x="36.5" y="2.5" width="9" height="10" fill="#f6f6f6"/><path d="M38 7 L40 10 L44 4" fill="none" stroke="#111" stroke-width="1.2"/><path d="M58 3 H62 L63 4.5 H67 V12 H58Z" fill="#f4eca0" stroke="#111"/><rect x="59.5" y="6.5" width="6" height="3" fill="#fff" stroke="#111" stroke-width=".6"/></g><g transform="translate(0,0)"><path d="M8 13 L12 10 L17 14 L14 19 Q11 21 9 18Z" fill="#fff" stroke="#111" stroke-width="1.1"/><path d="M8 14 Q4 15 3 19 Q6 17 9 17Z" fill="#111"/><path d="M12 9 L15 6" stroke="#111" stroke-width="1"/></g><g transform="translate(18,0)"><path d="M8 13 L12 10 L17 14 L14 19 Q11 21 9 18Z" fill="#fff" stroke="#111" stroke-width="1.1"/><path d="M8 14 Q4 15 3 19 Q6 17 9 17Z" fill="#111"/><path d="M12 9 L15 6" stroke="#111" stroke-width="1"/></g><g transform="translate(36,0)"><path d="M8 13 L12 10 L17 14 L14 19 Q11 21 9 18Z" fill="#fff" stroke="#111" stroke-width="1.1"/><path d="M8 14 Q4 15 3 19 Q6 17 9 17Z" fill="#111"/><path d="M12 9 L15 6" stroke="#111" stroke-width="1"/></g><g transform="translate(58,0)"><path d="M8 13 L12 10 L17 14 L14 19 Q11 21 9 18Z" fill="#fff" stroke="#111" stroke-width="1.1"/><path d="M8 14 Q4 15 3 19 Q6 17 9 17Z" fill="#111"/><path d="M12 9 L15 6" stroke="#111" stroke-width="1"/></g><path d="M84 10 L92 10 L88 14Z" fill="#3d3d3d"/></svg>
<div class="a" style="left:60px;top:627px;width:14px;height:14px;background:linear-gradient(#7d7e82,#6a6b6f);border:1px solid #555;border-radius:2px"></div>
<svg style="left:60px;top:627px;" width="14" height="14" viewBox="0 0 14 14"><path d="M3 7 L6 11 L12 2" fill="none" stroke="#f2f2f2" stroke-width="1.8"/></svg>
<div class="t f" style="left:79px;top:628px;width:70px;color:#f2f2f2;font-size:12px"><span>アンチエイリアス</span></div>
<svg style="left:179px;top:659px;" width="18" height="16" viewBox="0 0 18 16"><g fill="#222"><path d="M8 0.5 L11.5 1.8 L9.6 4.2Z" transform="rotate(0 9 8)"/><path d="M8 0.5 L11.5 1.8 L9.6 4.2Z" transform="rotate(45 9 8)"/><path d="M8 0.5 L11.5 1.8 L9.6 4.2Z" transform="rotate(90 9 8)"/><path d="M8 0.5 L11.5 1.8 L9.6 4.2Z" transform="rotate(135 9 8)"/><path d="M8 0.5 L11.5 1.8 L9.6 4.2Z" transform="rotate(180 9 8)"/><path d="M8 0.5 L11.5 1.8 L9.6 4.2Z" transform="rotate(225 9 8)"/><path d="M8 0.5 L11.5 1.8 L9.6 4.2Z" transform="rotate(270 9 8)"/><path d="M8 0.5 L11.5 1.8 L9.6 4.2Z" transform="rotate(315 9 8)"/></g></svg>
<svg style="left:200px;top:657px;" width="18" height="18" viewBox="0 0 18 18"><path d="M3 1 Q0 5 3 8 L3 17 H6 L5 8 Q7 5 5 2Z" fill="#b8b8b8"/><path d="M8 1 Q5 6 9 9 L9.5 17 H13.5 L14 9 Q18 6 15 1 L14.5 5 H9.5Z" fill="#1e1e1e"/></svg>
<div class="a" style="left:43px;top:677px;width:176px;height:1px;background:#8e8f93"></div>
<div class="a" style="left:43px;top:679px;width:176px;height:1px;background:#3a3a3a"></div>
<div class="a" style="left:43px;top:680px;width:176px;height:16px;background:linear-gradient(#404040,#5d5d5d);border-top:1px solid #363636"></div>
<div class="a" style="left:43px;top:696px;width:176px;height:4px;background:#76777b"></div>
<div class="a" style="left:43px;top:680px;width:20px;height:16px;background:#59595b;border:1px solid #4a4a4a"></div>
<svg style="left:43px;top:680px;" width="20" height="16" viewBox="0 0 20 16"><path d="M6 4 L10 8 L6 12Z" fill="#8d8d8d"/><rect x="10.5" y="4" width="5" height="1.6" fill="#8d8d8d"/><rect x="10.5" y="7.2" width="5" height="1.6" fill="#8d8d8d"/><rect x="10.5" y="10.4" width="5" height="1.6" fill="#8d8d8d"/></svg>
<div class="a" style="left:62px;top:681px;width:73px;height:19px;background:linear-gradient(#808185,#76777b);border-top:1px solid #8e8f93;border-radius:2px 2px 0 0"></div>
<svg style="left:65px;top:681px;" width="10" height="20" viewBox="0 0 10 20"><path d="M5 0.5 C7.2 5 8.8 9 8.4 13 C8.2 15 7.4 16.2 6.8 17 L3.2 17 C2.6 16.2 1.8 15 1.6 13 C1.2 9 2.8 5 5 0.5Z" fill="#1a1a1a"/><path d="M5 3.8 C6.4 7 7.2 10 6.9 12.8 C6.7 14.2 6.2 15.2 5.8 16 L4.2 16 C3.8 15.2 3.3 14.2 3.1 12.8 C2.8 10 3.6 7 5 3.8Z" fill="#e8e8e8"/><path d="M5 5 V11" stroke="#555" stroke-width=".9"/><ellipse cx="5" cy="18.3" rx="4.4" ry="1.5" fill="#111"/></svg>
<svg style="left:75px;top:681px;" width="12" height="20" viewBox="0 0 12 20"><path d="M4 3 H2 V17 H4 M2 10 H5" stroke="#111" fill="none" stroke-width="1.2"/><circle cx="8.5" cy="4" r="1.5" fill="#111"/><circle cx="8.5" cy="10" r="2" fill="#111"/><circle cx="8.5" cy="16" r="2.5" fill="#111"/></svg>
<div class="t f" style="left:88px;top:686px;width:43px;color:#c8c8c8;font-size:10px"><span>ブラシサイズ</span></div>
<div class="a" style="left:43px;top:700px;width:176px;height:1px;background:#3a3a3a"></div>
<div class="a" style="left:44px;top:702px;width:162px;height:161px;background:#77787c;border:1px solid #5d5e62"></div>
<div class="a" style="left:75.5px;top:702px;width:1px;height:161px;background:#5d5e62"></div>
<div class="a" style="left:108.8px;top:702px;width:1px;height:161px;background:#5d5e62"></div>
<div class="a" style="left:140.5px;top:702px;width:1px;height:161px;background:#5d5e62"></div>
<div class="a" style="left:173.7px;top:702px;width:1px;height:161px;background:#5d5e62"></div>
<div class="a" style="left:44px;top:742.5px;width:162px;height:1px;background:#5d5e62"></div>
<div class="a" style="left:44px;top:782.5px;width:162px;height:1px;background:#5d5e62"></div>
<div class="a" style="left:44px;top:822.5px;width:162px;height:1px;background:#5d5e62"></div>
<div class="t f" style="left:52.55px;top:726px;width:14.399999999999999px;color:#cfcfcf;font-size:11px"><span>0.7</span></div>
<svg style="left:44px;top:702px;" width="33" height="40" viewBox="0 0 33 40"><circle cx="15.75" cy="14" r="0.4" fill="#5a5a5c"/></svg>
<div class="t f" style="left:89.35000000000001px;top:726px;width:5.6px;color:#cfcfcf;font-size:11px"><span>1</span></div>
<svg style="left:75.5px;top:702px;" width="33" height="40" viewBox="0 0 33 40"><circle cx="16.650000000000006" cy="14" r="0.5" fill="#5a5a5c"/></svg>
<div class="t f" style="left:117.45px;top:726px;width:14.399999999999999px;color:#cfcfcf;font-size:11px"><span>1.5</span></div>
<svg style="left:108.8px;top:702px;" width="33" height="40" viewBox="0 0 33 40"><circle cx="15.850000000000009" cy="14" r="0.6" fill="#5a5a5c"/></svg>
<div class="t f" style="left:154.29999999999998px;top:726px;width:5.6px;color:#cfcfcf;font-size:11px"><span>2</span></div>
<svg style="left:140.5px;top:702px;" width="33" height="40" viewBox="0 0 33 40"><circle cx="16.599999999999994" cy="14" r="0.7" fill="#5a5a5c"/></svg>
<div class="t f" style="left:182.3px;top:726px;width:14.399999999999999px;color:#cfcfcf;font-size:11px"><span>2.5</span></div>
<svg style="left:173.7px;top:702px;" width="33" height="40" viewBox="0 0 33 40"><circle cx="15.800000000000011" cy="14" r="0.8" fill="#5a5a5c"/></svg>
<div class="t f" style="left:56.95px;top:766.5px;width:5.6px;color:#cfcfcf;font-size:11px"><span>3</span></div>
<svg style="left:44px;top:742.5px;" width="33" height="40" viewBox="0 0 33 40"><circle cx="15.75" cy="14.0" r="0.9" fill="#5a5a5c"/></svg>
<div class="t f" style="left:89.35000000000001px;top:766.5px;width:5.6px;color:#cfcfcf;font-size:11px"><span>4</span></div>
<svg style="left:75.5px;top:742.5px;" width="33" height="40" viewBox="0 0 33 40"><circle cx="16.650000000000006" cy="14.0" r="1.1" fill="#5a5a5c"/></svg>
<div class="t f" style="left:121.85000000000001px;top:766.5px;width:5.6px;color:#cfcfcf;font-size:11px"><span>5</span></div>
<svg style="left:108.8px;top:742.5px;" width="33" height="40" viewBox="0 0 33 40"><circle cx="15.850000000000009" cy="14.0" r="1.4" fill="#5a5a5c"/></svg>
<div class="t f" style="left:154.29999999999998px;top:766.5px;width:5.6px;color:#cfcfcf;font-size:11px"><span>6</span></div>
<svg style="left:140.5px;top:742.5px;" width="33" height="40" viewBox="0 0 33 40"><circle cx="16.599999999999994" cy="14.0" r="1.8" fill="#5a5a5c"/></svg>
<div class="t f" style="left:186.7px;top:766.5px;width:5.6px;color:#cfcfcf;font-size:11px"><span>7</span></div>
<svg style="left:173.7px;top:742.5px;" width="33" height="40" viewBox="0 0 33 40"><circle cx="15.800000000000011" cy="14.0" r="2.6" fill="#5a5a5c"/></svg>
<div class="t f" style="left:56.95px;top:806.5px;width:5.6px;color:#cfcfcf;font-size:11px"><span>8</span></div>
<svg style="left:44px;top:782.5px;" width="33" height="40" viewBox="0 0 33 40"><circle cx="15.75" cy="14.0" r="3" fill="#5a5a5c"/></svg>
<div class="t f" style="left:86.55000000000001px;top:806.5px;width:11.2px;color:#cfcfcf;font-size:11px"><span>10</span></div>
<svg style="left:75.5px;top:782.5px;" width="33" height="40" viewBox="0 0 33 40"><circle cx="16.650000000000006" cy="14.0" r="3.4" fill="#5a5a5c"/></svg>
<div class="t f" style="left:119.05000000000001px;top:806.5px;width:11.2px;color:#cfcfcf;font-size:11px"><span>12</span></div>
<svg style="left:108.8px;top:782.5px;" width="33" height="40" viewBox="0 0 33 40"><circle cx="15.850000000000009" cy="14.0" r="4" fill="#5a5a5c"/></svg>
<div class="t f" style="left:151.5px;top:806.5px;width:11.2px;color:#cfcfcf;font-size:11px"><span>15</span></div>
<svg style="left:140.5px;top:782.5px;" width="33" height="40" viewBox="0 0 33 40"><circle cx="16.599999999999994" cy="14.0" r="5" fill="#5a5a5c"/></svg>
<div class="t f" style="left:183.9px;top:806.5px;width:11.2px;color:#cfcfcf;font-size:11px"><span>17</span></div>
<svg style="left:173.7px;top:782.5px;" width="33" height="40" viewBox="0 0 33 40"><circle cx="15.800000000000011" cy="14.0" r="6.5" fill="#5a5a5c"/></svg>
<div class="t f" style="left:54.15px;top:846.5px;width:11.2px;color:#cfcfcf;font-size:11px"><span>20</span></div>
<svg style="left:44px;top:822.5px;" width="33" height="40" viewBox="0 0 33 40"><circle cx="15.75" cy="16.0" r="9" fill="#5c5c5e"/></svg>
<div class="t f" style="left:86.55000000000001px;top:846.5px;width:11.2px;color:#cfcfcf;font-size:11px"><span>25</span></div>
<svg style="left:75.5px;top:822.5px;" width="33" height="40" viewBox="0 0 33 40"><circle cx="16.650000000000006" cy="16.0" r="11.5" fill="#5c5c5e"/></svg>
<div class="t f" style="left:119.05000000000001px;top:846.5px;width:11.2px;color:#cfcfcf;font-size:11px"><span>30</span></div>
<svg style="left:108.8px;top:822.5px;" width="33" height="40" viewBox="0 0 33 40"><circle cx="15.850000000000009" cy="16.0" r="11.5" fill="#5c5c5e"/></svg>
<div class="t f" style="left:151.5px;top:846.5px;width:11.2px;color:#cfcfcf;font-size:11px"><span>40</span></div>
<svg style="left:140.5px;top:822.5px;" width="33" height="40" viewBox="0 0 33 40"><circle cx="16.599999999999994" cy="16.0" r="11.5" fill="#5c5c5e"/></svg>
<div class="t f" style="left:183.9px;top:846.5px;width:11.2px;color:#cfcfcf;font-size:11px"><span>50</span></div>
<svg style="left:173.7px;top:822.5px;" width="33" height="40" viewBox="0 0 33 40"><circle cx="15.800000000000011" cy="16.0" r="11.5" fill="#5c5c5e"/></svg>
<div class="a" style="left:206px;top:702px;width:13px;height:161px;background:#6a6b6f;border-left:1px solid #5e5f63"></div>
<div class="a" style="left:207px;top:703px;width:11px;height:12px;background:linear-gradient(#8a8b8f,#707175);border:1px solid #5e5f63;border-radius:2px"></div>
<svg style="left:209px;top:706px;" width="7" height="5" viewBox="0 0 7 5"><path d="M0 4.5 L3.5 0.5 L7 4.5Z" fill="#3a3a3a"/></svg>
<div class="a" style="left:207px;top:717px;width:11px;height:66px;background:linear-gradient(90deg,#76777b,#828387);border:1px solid #5e5f63;border-radius:2px"></div>
<div class="a" style="left:207px;top:849px;width:11px;height:13px;background:linear-gradient(#8a8b8f,#707175);border:1px solid #5e5f63;border-radius:2px"></div>
<svg style="left:209px;top:853px;" width="7" height="5" viewBox="0 0 7 5"><path d="M0 0.5 L3.5 4.5 L7 0.5Z" fill="#3a3a3a"/></svg>
<div class="a" style="left:43px;top:864px;width:176px;height:1px;background:#8e8f93"></div>
<div class="a" style="left:43px;top:866px;width:176px;height:1px;background:#3a3a3a"></div>
<div class="a" style="left:43px;top:866px;width:176px;height:16px;background:linear-gradient(#404040,#5d5d5d);border-top:1px solid #363636"></div>
<div class="a" style="left:43px;top:882px;width:176px;height:3px;background:#76777b"></div>
<div class="a" style="left:43px;top:866px;width:20px;height:16px;background:#59595b;border:1px solid #4a4a4a"></div>
<svg style="left:43px;top:866px;" width="20" height="16" viewBox="0 0 20 16"><path d="M6 4 L10 8 L6 12Z" fill="#8d8d8d"/><rect x="10.5" y="4" width="5" height="1.6" fill="#8d8d8d"/><rect x="10.5" y="7.2" width="5" height="1.6" fill="#8d8d8d"/><rect x="10.5" y="10.4" width="5" height="1.6" fill="#8d8d8d"/></svg>
<div class="a" style="left:62px;top:867px;width:25px;height:18px;background:linear-gradient(#808185,#76777b);border-top:1px solid #8e8f93;border-radius:2px 2px 0 0"></div>
<div class="a" style="left:67px;top:869px;width:17px;height:17px;border-radius:50%;background:conic-gradient(#ff0,#0f0,#004,#00f,#a0f,#f00,#f60,#ff0);box-shadow:1px 1px 0 #ddd"></div>
<div class="a" style="left:71px;top:873px;width:8px;height:8px;border-radius:50%;background:#777;border:1px solid #ddd"></div>
<div class="a" style="left:89px;top:868px;width:27px;height:17px;background:#6b6c70;border:1px solid #5a5b5f"></div>
<div class="a" style="left:117px;top:868px;width:27px;height:17px;background:#6b6c70;border:1px solid #5a5b5f"></div>
<div class="a" style="left:145px;top:868px;width:27px;height:17px;background:#6b6c70;border:1px solid #5a5b5f"></div>
<div class="a" style="left:173px;top:868px;width:27px;height:17px;background:#6b6c70;border:1px solid #5a5b5f"></div>
<div class="a" style="left:201px;top:868px;width:18px;height:17px;background:#6b6c70;border:1px solid #5a5b5f"></div>
<svg style="left:89px;top:868px;" width="130" height="17" viewBox="0 0 130 17"><g fill="#999"><rect x="6" y="4" width="16" height="3"/><rect x="6" y="9" width="12" height="3" fill="#888"/><rect x="6" y="13" width="14" height="2" fill="#aaa"/><rect x="36" y="4" width="6" height="4"/><rect x="44" y="4" width="6" height="4"/><rect x="38" y="10" width="8" height="5" fill="none" stroke="#999"/><rect x="63" y="3" width="7" height="6" fill="none" stroke="#999"/><rect x="73" y="3" width="7" height="6" fill="none" stroke="#999"/><rect x="66" y="11" width="12" height="4"/><rect x="93" y="4" width="14" height="11" fill="#777" stroke="#999"/><rect x="118" y="6" width="10" height="1" /><rect x="118" y="10" width="10" height="1"/></g></svg>
<div class="a" style="left:65px;top:895px;width:122px;height:122px;border-radius:50%;background:conic-gradient(#ff0 0deg,#0f0 60deg,#0ff 120deg,#00f 180deg,#f0f 240deg,#f00 300deg,#ff0 360deg);box-shadow:0 0 0 1px #555"></div>
<div class="a" style="left:78px;top:908px;width:96px;height:96px;border-radius:50%;background:#76777b;box-shadow:0 0 0 1px #555"></div>
<div class="a" style="left:95px;top:925px;width:63px;height:63px;background:linear-gradient(transparent,#000),linear-gradient(90deg,#fff,#f06a14);border:1px solid #444"></div>
<div class="a" style="left:102px;top:926px;width:10px;height:10px;border:2px solid #111;background:#fde1d2;box-shadow:0 0 0 1px #eee"></div>
<svg style="left:80px;top:900px;" width="20" height="20" viewBox="0 0 20 20"><rect x="5" y="2" width="5" height="13" transform="rotate(-38 7.5 8.5)" fill="none" stroke="#111" stroke-width="1"/></svg>
<svg style="left:209px;top:888px;" width="10" height="152" viewBox="0 0 10 152"><path d="M1 0 V150 M3.5 0 V150 M6 0 V150 M8.5 0 V150" stroke="#555" stroke-width="1"/></svg>
<div class="a" style="left:54px;top:1007px;width:18px;height:18px;background:#fde1d2;border:1px solid #777"></div>
<div class="a" style="left:44px;top:996px;width:18px;height:18px;background:#fde1d2;border:2px solid #8ccbef;box-shadow:inset 0 0 0 1px #000"></div>
<div class="a" style="left:43px;top:1026px;width:29px;height:9px;background-color:#fff;background-image:linear-gradient(45deg,#777 25%,transparent 25%,transparent 75%,#777 75%),linear-gradient(45deg,#777 25%,transparent 25%,transparent 75%,#777 75%);background-size:8px 8px;background-position:0 0,4px 4px;border:1px solid #555"></div>
<div class="a" style="left:86px;top:1023px;width:9px;height:10px;background:#0f0f2a"></div>
<div class="t" style="left:87px;top:1023.5px;color:#fff;font-size:9px;font-weight:bold">H</div>
<div class="a" style="left:117px;top:1023px;width:9px;height:10px;background:#0f0f2a"></div>
<div class="t" style="left:118px;top:1023.5px;color:#fff;font-size:9px;font-weight:bold">S</div>
<div class="a" style="left:150px;top:1023px;width:9px;height:10px;background:#0f0f2a"></div>
<div class="t" style="left:151px;top:1023.5px;color:#fff;font-size:9px;font-weight:bold">V</div>
<div class="t f" style="left:103px;top:1024px;width:11px;color:#f0f0f0;font-size:11px"><span>22</span></div>
<div class="t f" style="left:135px;top:1024px;width:11px;color:#f0f0f0;font-size:11px"><span>18</span></div>
<div class="t f" style="left:166px;top:1024px;width:11px;color:#f0f0f0;font-size:11px"><span>98</span></div>
<div class="a" style="left:189px;top:1017px;width:16px;height:16px;border-radius:50%;background:conic-gradient(#ff0,#0f0,#0ff,#00f,#f0f,#f00,#ff0)"></div>
<div class="a" style="left:191px;top:1019px;width:12px;height:12px;border-radius:50%;background:#555"></div>
<svg style="left:193px;top:1021px;" width="8" height="8" viewBox="0 0 8 8"><path d="M1 0 L7 4 L1 8Z" fill="#d33"/></svg>
<div class="a" style="left:0px;top:1038px;width:220px;height:2px;background:#6b6c70"></div>
<div class="a" style="left:220px;top:48px;width:1319px;height:25px;background:linear-gradient(#7f8084,#75767a);border-top:1px solid #8e8f93;border-bottom:1px solid #5a5b5f"></div>
<div class="a" style="left:222px;top:52px;width:41px;height:19px;background:linear-gradient(#f7f7f7,#dcdcdc);border:1px solid #b0b0b0;border-radius:3px"></div>
<svg style="left:230px;top:53px;" width="24" height="17" viewBox="0 0 24 17"><path d="M15.5 3.5 Q9 2 5.5 6 Q3 10 7.5 13 Q13 15.5 17 12 Q20 8.5 16 6.5 Q12 5 9.5 7.5 Q8 9.5 10.5 10.5 Q13 11 14 9" fill="none" stroke="#3a3a3a" stroke-width="2.2" stroke-linecap="round"/></svg>
<div class="a" style="left:270px;top:51px;width:1px;height:20px;background:#616266;box-shadow:1px 0 0 #8a8b8f"></div>
<div class="a" style="left:350px;top:51px;width:1px;height:20px;background:#616266;box-shadow:1px 0 0 #8a8b8f"></div>
<div class="a" style="left:405px;top:51px;width:1px;height:20px;background:#616266;box-shadow:1px 0 0 #8a8b8f"></div>
<div class="a" style="left:510px;top:51px;width:1px;height:20px;background:#616266;box-shadow:1px 0 0 #8a8b8f"></div>
<div class="a" style="left:590px;top:51px;width:1px;height:20px;background:#616266;box-shadow:1px 0 0 #8a8b8f"></div>
<div class="a" style="left:670px;top:51px;width:1px;height:20px;background:#616266;box-shadow:1px 0 0 #8a8b8f"></div>
<div class="a" style="left:716px;top:51px;width:1px;height:20px;background:#616266;box-shadow:1px 0 0 #8a8b8f"></div>
<svg style="left:276px;top:52px;" width="20" height="20" viewBox="0 0 20 20"><path d="M4 4 H12 L16 8 V18 H4Z" fill="#fafcfe" stroke="#111" stroke-width="1.2"/><path d="M12 4 V8 H16" fill="none" stroke="#111"/><path d="M3 1 V7 M0 4 H6 M1 2 L5 6 M5 2 L1 6" stroke="#111" stroke-width="1"/></svg>
<svg style="left:299px;top:52px;" width="20" height="20" viewBox="0 0 20 20"><path d="M2 7 H7 L8 9 H15 V17 H2Z" fill="#ddd" stroke="#111" stroke-width="1.2"/><path d="M2 17 L5 11 H18 L15 17Z" fill="#ccc" stroke="#111" stroke-width="1.2"/><path d="M11 5 Q15 1 17 5" fill="none" stroke="#111" stroke-width="1.6"/><path d="M18 3 L17.5 7 L14.5 5.5Z" fill="#111"/></svg>
<svg style="left:323px;top:52px;" width="20" height="20" viewBox="0 0 20 20"><rect x="2" y="2" width="16" height="16" fill="#9a9a9a" stroke="#6a6a6a"/><rect x="5" y="14" width="10" height="3" fill="#777"/></svg>
<svg style="left:355px;top:52px;" width="22" height="20" viewBox="0 0 22 20"><path d="M8 6 H15 Q19 6 19 10 Q19 14 15 14 H5" fill="none" stroke="#8c8d91" stroke-width="2.4" stroke-dasharray="3 1"/><path d="M2 14 L7 10 V18Z" fill="#8c8d91"/></svg>
<svg style="left:379px;top:52px;" width="22" height="20" viewBox="0 0 22 20"><path d="M14 6 H7 Q3 6 3 10 Q3 14 7 14 H17" fill="none" stroke="#8c8d91" stroke-width="2.4" stroke-dasharray="3 1"/><path d="M20 6 L15 2 V10Z" fill="#8c8d91"/></svg>
<svg style="left:411px;top:52px;" width="20" height="20" viewBox="0 0 20 20"><g fill="#2a2a2a"><circle cx="10" cy="3" r="1.9"/><circle cx="16" cy="6" r="1.9"/><circle cx="17" cy="12" r="1.9"/><circle cx="10" cy="17" r="1.9"/><circle cx="4" cy="13" r="1.9"/><circle cx="3" cy="7" r="1.9"/></g></svg>
<svg style="left:435px;top:52px;" width="20" height="20" viewBox="0 0 20 20"><rect x="4" y="4" width="12" height="12" fill="#a6a7ab" stroke="#8a8b8f"/><rect x="7" y="1" width="6" height="18" fill="#9a9b9f" opacity=".6"/><rect x="1" y="7" width="18" height="6" fill="#9a9b9f" opacity=".6"/></svg>
<svg style="left:459px;top:52px;" width="20" height="20" viewBox="0 0 20 20"><path d="M8 8 L15 4 L19 12 L12 16Z" fill="#f2f2f2" stroke="#222" stroke-width="1"/><path d="M9 9 Q3 11 1 17 Q6 14 9 13" fill="#111"/><path d="M14 1 L17 6" stroke="#111" stroke-width="1.4"/></svg>
<svg style="left:483px;top:52px;" width="20" height="20" viewBox="0 0 20 20"><path d="M5 5 Q10 9 15 5 Q11 10 15 15 Q10 11 5 15 Q9 10 5 5Z" fill="none" stroke="#2a2a2a" stroke-width="2.4"/><path d="M1 1 L5 1 L1 5Z M19 1 L15 1 L19 5Z M1 19 L5 19 L1 15Z M19 19 L15 19 L19 15Z" fill="#2a2a2a" stroke="#2a2a2a" stroke-width="1.5"/></svg>
<svg style="left:516px;top:52px;" width="20" height="20" viewBox="0 0 20 20"><rect x="2" y="5" width="14" height="12" fill="none" stroke="#8a8b8f" stroke-dasharray="2 1"/><path d="M2 17 L18 2" stroke="#8a8b8f" stroke-width="1.5"/></svg>
<svg style="left:540px;top:52px;" width="20" height="20" viewBox="0 0 20 20"><path d="M2 18 L18 2 V18Z" fill="#8a8b8f"/><rect x="2" y="2" width="16" height="16" fill="none" stroke="#8a8b8f" stroke-dasharray="2 1"/></svg>
<svg style="left:564px;top:52px;" width="20" height="20" viewBox="0 0 20 20"><rect x="3" y="3" width="14" height="14" fill="#8d8e92" stroke="#5a5b5f" stroke-dasharray="2 1"/></svg>
<svg style="left:596px;top:52px;" width="20" height="20" viewBox="0 0 20 20"><path d="M2 4 L2 18 L16 18" fill="none" stroke="#1e8ae6" stroke-width="1.8"/><path d="M2 4 L14 17" stroke="#111" stroke-width="1.6"/><rect x="13" y="1" width="3" height="15" fill="#f4f4f4" stroke="#222" stroke-width=".8"/></svg>
<svg style="left:620px;top:52px;" width="20" height="20" viewBox="0 0 20 20"><path d="M2 17 Q3 8 10 10" fill="none" stroke="#111" stroke-width="1.6"/><path d="M2 17 H16" stroke="#111" stroke-width="1.4"/><path d="M10 10 Q14 13 12 17" stroke="#1e8ae6" stroke-width="2" fill="none"/><rect x="13" y="1" width="3" height="15" fill="#f4f4f4" stroke="#222" stroke-width=".8"/></svg>
<svg style="left:644px;top:52px;" width="20" height="20" viewBox="0 0 20 20"><path d="M2 8 H18 M2 14 H18 M6 2 V19 M14 2 V19" stroke="#1e8ae6" stroke-width="1.8"/><rect x="8" y="1" width="4" height="15" fill="#f4f4f4" stroke="#222" stroke-width=".8"/></svg>
<svg style="left:675px;top:52px;" width="36" height="20" viewBox="0 0 36 20"><path d="M2 5 V2 H5 M15 2 H18 V5 M8 3 L10 1 L12 3" fill="none" stroke="#222" stroke-width="1.2"/><rect x="2" y="8" width="16" height="10" fill="url(#scrg)" stroke="#222" stroke-width="1.4"/><defs><linearGradient id="scrg" x1="0" y1="0" x2="0" y2="1"><stop offset="0" stop-color="#ddd"/><stop offset="1" stop-color="#222"/></linearGradient></defs><path d="M24 9 L32 9 L28 13Z" fill="#3a3a3a"/></svg>
<div class="a" style="left:722px;top:52px;width:75px;height:19px;background:linear-gradient(#f2f2f2,#e0e0e0);border:1px solid #bdbdbd;border-radius:3px"></div>
<div class="t f" style="left:723px;top:56px;width:72px;color:#333;font-size:11px;letter-spacing:-0.5px"><span>CLIPホームページ</span></div>
<div class="a" style="left:220px;top:73px;width:1306px;height:22px;background:#4b4b4b"></div>
<div class="a" style="left:221px;top:74px;width:97px;height:21px;background:linear-gradient(#8f9094,#7a7b7f);border-radius:2px 2px 0 0"></div>
<div class="t f" style="left:225px;top:79px;width:11px;color:#e8e8e8;font-size:12px"><span>ok</span></div>
<svg style="left:304px;top:79px;" width="10" height="10" viewBox="0 0 10 10"><path d="M1.5 1.5 L8.5 8.5 M8.5 1.5 L1.5 8.5" stroke="#2a2a2a" stroke-width="2.4"/></svg>
<div class="a" style="left:220px;top:94px;width:1306px;height:2px;background:linear-gradient(#2e2e2e 50%,#8a8a8a 50%)"></div>
<div class="a" style="left:220px;top:96px;width:1306px;height:675px;background:#424242"></div>
<div class="a" style="left:1526px;top:73px;width:13px;height:711px;background:#6b6c70;border-left:1px solid #5a5b5f;border-right:1px solid #5a5b5f"></div>
<div class="a" style="left:1527px;top:75px;width:11px;height:18px;background:linear-gradient(#8a8b8f,#747579);border:1px solid #5e5f63;border-radius:3px"></div>
<svg style="left:1529px;top:82px;" width="7" height="4" viewBox="0 0 7 4"><path d="M0 0 L7 0 L3.5 4Z" fill="#3a3a3a"/></svg>
<div class="a" style="left:1527px;top:97px;width:11px;height:12px;background:linear-gradient(#8a8b8f,#747579);border:1px solid #5e5f63;border-radius:3px"></div>
<svg style="left:1529px;top:101px;" width="7" height="4" viewBox="0 0 7 4"><path d="M0 4 L3.5 0 L7 4Z" fill="#3a3a3a"/></svg>
<div class="a" style="left:1527px;top:271px;width:11px;height:326px;background:linear-gradient(90deg,#8f9094,#7c7d81);border:1px solid #5f6064;border-radius:2px"></div>
<svg style="left:1529px;top:431px;" width="7" height="6" viewBox="0 0 7 6"><path d="M0 .5 H7 M0 2.5 H7 M0 4.5 H7" stroke="#444" stroke-width=".8"/></svg>
<div class="a" style="left:1527px;top:759px;width:11px;height:11px;background:linear-gradient(#8a8b8f,#747579);border:1px solid #5e5f63;border-radius:2px"></div>
<svg style="left:1529px;top:763px;" width="7" height="4" viewBox="0 0 7 4"><path d="M0 0 L7 0 L3.5 4Z" fill="#3a3a3a"/></svg>
<div class="a" style="left:220px;top:771px;width:1306px;height:13px;background:#6b6c70;border-top:1px solid #58595d"></div>
<div class="a" style="left:221px;top:772px;width:100px;height:11px;background:linear-gradient(90deg,#444,#555);"></div>
<svg style="left:221px;top:772px;" width="100" height="11" viewBox="0 0 100 11"><path d="M0 11 L100 0 V11Z" fill="#2e2e2e"/><rect x="55" y="0" width="3" height="11" fill="#666"/></svg>
<div class="t f" style="left:224px;top:772px;width:25px;color:#fff;font-size:10px"><span>100.0</span></div>
<svg style="left:322px;top:771px;" width="58" height="13" viewBox="0 0 58 13"><circle cx="7" cy="6" r="4" fill="#eee" stroke="#222" stroke-width="1.3"/><path d="M5 6 H9" stroke="#111"/><path d="M10 9 L12 11" stroke="#111" stroke-width="1.6"/><circle cx="27" cy="6" r="4" fill="#eee" stroke="#222" stroke-width="1.3"/><path d="M25 6 H29 M27 4 V8" stroke="#111"/><path d="M30 9 L32 11" stroke="#111" stroke-width="1.6"/><rect x="41" y="0" width="14" height="13" fill="#111"/><rect x="44" y="3" width="8" height="7" fill="none" stroke="#ccc"/></svg>
<div class="a" style="left:382px;top:772px;width:98px;height:11px;background:#555"></div>
<svg style="left:382px;top:772px;" width="98" height="11" viewBox="0 0 98 11"><path d="M0 0 Q25 15 45 3 L50 0 L60 0 Q75 3 98 11 V0Z" fill="#2e2e2e"/><rect x="46" y="0" width="3" height="11" fill="#666"/></svg>
<div class="t f" style="left:390px;top:772px;width:12px;color:#fff;font-size:10px"><span>0.0</span></div>
<svg style="left:484px;top:771px;" width="56" height="13" viewBox="0 0 56 13"><path d="M3.5 8 C3.5 2.5 11.5 2.5 11.5 8 V11" fill="none" stroke="#111" stroke-width="2"/><path d="M0 7 L7 7 L3.5 11.5Z" fill="#111"/><path d="M29.5 8 C29.5 2.5 21.5 2.5 21.5 8 V11" fill="none" stroke="#111" stroke-width="2"/><path d="M33 7 L26 7 L29.5 11.5Z" fill="#111"/><circle cx="47" cy="6.5" r="4.5" fill="none" stroke="#444" stroke-width="1.6" stroke-dasharray="2 1.5"/></svg>
<div class="a" style="left:541px;top:772px;width:985px;height:11px;background:#6b6c70"></div>
<div class="a" style="left:541px;top:772px;width:11px;height:11px;background:linear-gradient(#8a8b8f,#747579);border:1px solid #5e5f63;border-radius:2px"></div>
<svg style="left:544px;top:774px;" width="5" height="7" viewBox="0 0 5 7"><path d="M5 0 L0 3.5 L5 7Z" fill="#3a3a3a"/></svg>
<div class="a" style="left:765px;top:772px;width:536px;height:11px;background:linear-gradient(#8f9094,#7c7d81);border:1px solid #5f6064;border-radius:2px"></div>
<svg style="left:1030px;top:774px;" width="6" height="7" viewBox="0 0 6 7"><path d="M.5 0 V7 M2.5 0 V7 M4.5 0 V7" stroke="#444" stroke-width=".8"/></svg>
<div class="a" style="left:1514px;top:772px;width:11px;height:11px;background:linear-gradient(#8a8b8f,#747579);border:1px solid #5e5f63;border-radius:2px"></div>
<svg style="left:1518px;top:774px;" width="5" height="7" viewBox="0 0 5 7"><path d="M0 0 L5 3.5 L0 7Z" fill="#3a3a3a"/></svg>
<div class="a" style="left:220px;top:784px;width:1320px;height:2px;background:#4d4e52"></div>
<svg style="left:688px;top:274px;overflow:hidden" width="370" height="320" viewBox="0 0 370 320"><rect width="370" height="320" fill="#fff"/><path d="M265,4 Q280.2,55.2 317,32 Q280.5,56.1 293,88 Q279.9,56.3 252,58 Q279.6,55.5 265,4 Z" fill="#faf000" stroke="#faf000" stroke-width="7" stroke-linejoin="round"/><circle cx="279" cy="55" r="11" fill="#faf000"/><path d="M291,134 Q282.3,154.8 301,157 Q282.2,155.2 279,177 Q281.8,155.2 266,153 Q281.9,154.8 291,134 Z" fill="#faf000" stroke="#faf000" stroke-width="5" stroke-linejoin="round"/><circle cx="282" cy="155" r="6" fill="#faf000"/><path d="M29,213 Q52.1,252.5 85,245 Q52.5,253.4 74,299 Q51.9,253.7 21,277 Q51.5,252.8 29,213 Z" fill="#faf000" stroke="#faf000" stroke-width="7" stroke-linejoin="round"/><circle cx="52" cy="254" r="11" fill="#faf000"/><path d="M325,239 Q308.4,261.9 327,277 Q308.1,262.4 300,287 Q307.8,262.2 292,258 Q308.0,261.7 325,239 Z" fill="#faf000" stroke="#faf000" stroke-width="6" stroke-linejoin="round"/><circle cx="309" cy="263" r="7" fill="#faf000"/><ellipse cx="48.3" cy="92" rx="23" ry="32" fill="none" stroke="#d30a0a" stroke-width="12"/><path d="M73,30 L97,89 M110,18 L89,56 M90,60 L133,50" fill="none" stroke="#d30a0a" stroke-width="10" stroke-linecap="round" stroke-linejoin="round"/><path d="M140,58 C155,45 180,36 203,34 C226,34 245,45 254,62 C265,80 271,102 271,126 C272,152 268,175 252,197 L226,214 L246,173 L217,191 L168,166 L160,190 L150,224 L139,228 C132,205 126,170 124,140 C122,110 124,80 140,58 Z" fill="#f8c9e0"/><path d="M186,178 L217,191 L238,178 L249,200 L244,218 C230,222 212,226 195,224 C190,223 186,222 180,219 L188,205 Z" fill="#fbdfcd"/><path d="M189,196 C205,212 226,212 242,202 L238,186 L217,194 Z" fill="#f7ccb2" opacity=".8"/><path d="M164,80 L178,84 L210,145 L214,76 L246,173 C236,185 226,191 217,191 C200,188 182,178 168,166 C166,140 164,110 164,80 Z" fill="#fbdfcd"/><ellipse cx="219" cy="142" rx="7" ry="5.5" fill="#f4c0a8" opacity=".7"/><path d="M166,140 C168,160 172,170 178,176 L172,150Z" fill="#f6c8b0" opacity=".6"/><path d="M139,228 C132,205 126,170 124,140 C122,110 124,80 140,58 C155,45 180,36 203,34 C226,34 245,45 254,62 C265,80 271,102 271,126 C272,152 268,175 252,197" fill="none" stroke="#121a19" stroke-width="1.8"/><path d="M164,73 C166,110 168,140 172,162" fill="none" stroke="#121a19" stroke-width="1.4"/><path d="M175,76 L180,114" fill="none" stroke="#121a19" stroke-width="1.4"/><path d="M178,84 L210,145" fill="none" stroke="#121a19" stroke-width="1.4"/><path d="M206,52 C211,60 214,68 214,73 L210,145" fill="none" stroke="#121a19" stroke-width="1.4"/><path d="M214,76 C225,110 240,140 246,173" fill="none" stroke="#121a19" stroke-width="1.4"/><path d="M249,92 C262,130 268,160 269,181" fill="none" stroke="#121a19" stroke-width="1.4"/><path d="M150,98 C153,120 156,140 159,158" fill="none" stroke="#121a19" stroke-width="1.4"/><path d="M162,49 C150,70 144,90 142,110" fill="none" stroke="#121a19" stroke-width="1.4"/><path d="M136,76 C138,120 142,160 148,181" fill="none" stroke="#121a19" stroke-width="1.4"/><path d="M150,224 C146,200 142,185 139,170" fill="none" stroke="#121a19" stroke-width="1.4"/><path d="M226,214 C236,200 244,185 250,170" fill="none" stroke="#121a19" stroke-width="1.4"/><path d="M252,197 C258,180 262,165 264,150" fill="none" stroke="#121a19" stroke-width="1.4"/><path d="M160,190 C158,205 154,215 150,224" fill="none" stroke="#121a19" stroke-width="1.4"/><path d="M186,118 L180,150" fill="none" stroke="#121a19" stroke-width="1.4"/><path d="M87,190 C84,175 78,165 79,158 C80,154 86,154 89,160 C93,168 96,176 98,183 L100,150 C102,142 112,142 113,152 L111,184 L121,148 C123,142 131,144 131,151 L123,182 C130,178 138,176 141,178 C145,182 146,192 145,203 C143,208 140,210 136,210 C132,215 129,220 127,224 L118,236 C125,262 131,292 135,320 L100,320 C96,290 92,260 89,236 Z" fill="#fbdccb" stroke="#1b2b29" stroke-width="1.4"/><path d="M95,240 C99,265 103,292 106,318" stroke="#f5c4aa" stroke-width="7" fill="none" opacity=".8"/><path d="M92,172 C96,190 104,200 112,198 M98,196 C104,190 116,189 122,195 M104,213 C109,205 118,204 124,210 M84,165 C86,175 90,185 92,196" fill="none" stroke="#f3c2a8" stroke-width="4" opacity=".6"/><ellipse cx="131" cy="199" rx="3.5" ry="7" transform="rotate(25 131 199)" fill="#fff" stroke="#1b2b29" stroke-width="1"/><path d="M98,196 C104,190 116,189 122,195 M104,213 C109,205 118,204 124,210 M94,188 C96,196 100,205 104,213" fill="none" stroke="#1b2b29" stroke-width="1.1"/><path d="M157,115 L191,101 M211,96 L244,90 M160,122 L188,112 M220,105 L246,104" stroke="#121a19" stroke-width="1.2" fill="none"/><path d="M148,142 C152,134 160,126 170,122 C178,120 188,120 194,120" stroke="#121a19" stroke-width="2.2" fill="none"/><path d="M219,123 C224,117 230,113 236,113 C245,113 252,116 257,120" stroke="#121a19" stroke-width="2.2" fill="none"/><ellipse cx="178" cy="134" rx="9.5" ry="10.5" fill="#fff" stroke="#222" stroke-width="1.2"/><ellipse cx="178" cy="134" rx="6" ry="6.8" fill="none" stroke="#999" stroke-width=".8"/><circle cx="178" cy="133.5" r="1.5" fill="#111"/><ellipse cx="230.8" cy="127" rx="8.2" ry="9" fill="#f2d5bf" stroke="#222" stroke-width="1.2"/><ellipse cx="230.8" cy="127" rx="5" ry="5.8" fill="none" stroke="#b89a88" stroke-width=".8"/><circle cx="230.8" cy="126" r="1.5" fill="#111"/><path d="M195,166.3 Q206,169 222,162.4" stroke="#121a19" stroke-width="1.2" fill="none"/><path d="M214.5,147 L215.5,150" stroke="#333" stroke-width="1"/><path d="M168,166 C180,178 200,190 217,191 L232,178" stroke="#121a19" stroke-width="1.5" fill="none"/><path d="M244,198 C255,198 265,200 269,203 C275,210 277,218 277,226 C278,260 278,290 279,320" fill="none" stroke="#121a19" stroke-width="1.2"/><path d="M172,218 C182,222 190,224 195,224 C215,226 230,222 244,218" fill="none" stroke="#121a19" stroke-width="1.2"/><path d="M119,231 C125,262 131,292 135,320" fill="none" stroke="#121a19" stroke-width="1.2"/><path d="M188.7,184 L188.7,211" fill="none" stroke="#121a19" stroke-width="1.2"/><path d="M232,180 L228,200" fill="none" stroke="#121a19" stroke-width="1.2"/><path d="M140,240 C145,255 150,268 154,284" fill="none" stroke="#121a19" stroke-width="1.2"/><path d="M150,244 C158,250 165,256 172,262" fill="none" stroke="#121a19" stroke-width="1.2"/><path d="M236,240 C248,232 255,225 262,218" fill="none" stroke="#121a19" stroke-width="1.2"/><path d="M245,250 C252,244 258,238 264,232" fill="none" stroke="#121a19" stroke-width="1.2"/><path d="M258,272 C262,256 265,242 268,230" fill="none" stroke="#121a19" stroke-width="1.2"/><path d="M135,255 C142,275 148,290 152,306" fill="none" stroke="#121a19" stroke-width="1.2"/><path d="M160,256 C168,262 174,266 178,270" fill="none" stroke="#121a19" stroke-width="1.2"/></svg>
<div class="a" style="left:220px;top:786px;width:1319px;height:254px;background:#76777b"></div>
<div class="a" style="left:221px;top:786px;width:1297px;height:16px;background:linear-gradient(#404040,#5d5d5d);border-top:1px solid #363636"></div>
<div class="a" style="left:221px;top:786px;width:20px;height:16px;background:#59595b;border:1px solid #4a4a4a"></div>
<svg style="left:221px;top:786px;" width="20" height="16" viewBox="0 0 20 16"><path d="M6 4 L10 8 L6 12Z" fill="#8d8d8d"/><rect x="10.5" y="4" width="5" height="1.6" fill="#8d8d8d"/><rect x="10.5" y="7.2" width="5" height="1.6" fill="#8d8d8d"/><rect x="10.5" y="10.4" width="5" height="1.6" fill="#8d8d8d"/></svg>
<div class="a" style="left:240px;top:787px;width:70px;height:18px;background:linear-gradient(#808185,#76777b);border-top:1px solid #8e8f93;border-radius:2px 2px 0 0"></div>
<svg style="left:245px;top:790px;" width="17" height="13" viewBox="0 0 17 13"><rect x="0.5" y="0.5" width="15" height="11" fill="#eee" stroke="#222"/><path d="M3 1 V11 M6 1 V11 M9 1 V11" stroke="#555"/><rect x="11" y="3" width="3" height="2" fill="#33c"/><rect x="11" y="7" width="3" height="2" fill="#33c"/></svg>
<div class="t f" style="left:266px;top:793px;width:41px;color:#cfcfcf;font-size:10.5px"><span>タイムライン</span></div>
<div class="a" style="left:1518px;top:786px;width:21px;height:254px;background:linear-gradient(90deg,#5c5d61,#6e6f73 60%,#5a5b5f)"></div>
<svg style="left:1521px;top:1024px;" width="14" height="10" viewBox="0 0 14 10"><path d="M1 2 L7 7 L13 2" fill="none" stroke="#ddd" stroke-width="2"/></svg>
<div class="t f" style="left:245px;top:812px;width:11px;color:#f0f0f0;font-size:11px"><span>17</span></div>
<div class="t f" style="left:283px;top:812px;width:5px;color:#f0f0f0;font-size:11px"><span>/</span></div>
<div class="t f" style="left:320px;top:812px;width:4px;color:#f0f0f0;font-size:11px"><span>1</span></div>
<div class="t f" style="left:352px;top:812px;width:5px;color:#f0f0f0;font-size:11px"><span>/</span></div>
<div class="t f" style="left:385px;top:812px;width:11px;color:#f0f0f0;font-size:11px"><span>20</span></div>
<div class="a" style="left:423px;top:809px;width:17px;height:17px;background:linear-gradient(#f4f4f4,#d8d8d8);border:1px solid #999"></div>
<svg style="left:423px;top:809px;" width="17" height="17" viewBox="0 0 17 17"><path d="M4 3 V15 M4 4 L13 9 L6 13" fill="none" stroke="#6a2ac8" stroke-width="2.2"/></svg>
<svg style="left:451px;top:809px;" width="40" height="17" viewBox="0 0 40 17"><rect x="1" y="2.5" width="15" height="11" fill="#eee" stroke="#222"/><path d="M4 3 V13 M7 3 V13 M10 3 V13" stroke="#555"/><rect x="12" y="4" width="3" height="2" fill="#33c"/><rect x="12" y="9" width="3" height="2" fill="#33c"/><rect x="22" y="3.5" width="15" height="11" fill="#eee" stroke="#222"/><path d="M25 4 V14 M28 4 V14 M31 4 V14" stroke="#555"/><rect x="33" y="5" width="3" height="2" fill="#33c"/><rect x="33" y="10" width="3" height="2" fill="#33c"/><path d="M21 0 V5 M18.5 2.5 H23.5" stroke="#111"/></svg>
<svg style="left:502px;top:808px;" width="40" height="19" viewBox="0 0 40 19"><circle cx="7" cy="7" r="5.5" fill="#f0f0f0" stroke="#222" stroke-width="1.8"/><path d="M4 7 H10" stroke="#111" stroke-width="1.6"/><path d="M11 11 L15 15" stroke="#111" stroke-width="2.4"/><circle cx="27" cy="7" r="5.5" fill="#f0f0f0" stroke="#222" stroke-width="1.8"/><path d="M24 7 H30 M27 4 V10" stroke="#111" stroke-width="1.6"/><path d="M31 11 L35 15" stroke="#111" stroke-width="2.4"/></svg>
<svg style="left:554px;top:808px;" width="95" height="19" viewBox="0 0 95 19"><g fill="#1a1a1a"><rect x="1" y="2" width="2.2" height="14"/><path d="M14 2 L4 9 L14 16Z"/><path d="M18 9 L25 3 V6.5 H32 V11.5 H25 V15Z"/><path d="M40 3 L52 9 L40 15Z"/><path d="M73 9 L66 3 V6.5 H59 V11.5 H66 V15Z"/><path d="M79 2 L89 9 L79 16Z"/><rect x="90" y="2" width="2.2" height="14"/></g></svg>
<div class="a" style="left:660px;top:807px;width:22px;height:21px;background:#6c6d71;border:1px solid #5a5b5f;border-radius:3px"></div>
<svg style="left:662px;top:809px;" width="18" height="17" viewBox="0 0 18 17"><path d="M3 10 V7 Q3 5 5 5 H12" fill="none" stroke="#222" stroke-width="2.4"/><path d="M11 1.5 L16 5 L11 8.5Z" fill="#222"/><path d="M15 7 V10 Q15 12 13 12 H6" fill="none" stroke="#222" stroke-width="2.4"/><path d="M7 8.5 L2 12 L7 15.5Z" fill="#222"/></svg>
<svg style="left:690px;top:808px;" width="82" height="19" viewBox="0 0 82 19"><rect x="1.5" y="4.5" width="15" height="12" fill="#ddd" stroke="#222"/><rect x="3" y="2.5" width="15" height="12" fill="#f4f4f4" stroke="#1a1a1a" stroke-width="1.2"/><path d="M4.5 4.5 h2 M9.5 4.5 h1.5 M14 4.5 h2" stroke="#111" stroke-width="1.2"/><rect x="5" y="6.5" width="11" height="6" fill="#e8ece8" stroke="#e050b0" stroke-width="1"/><rect x="24" y="2.5" width="15" height="12" fill="#8f9094" stroke="#6a6b6f" stroke-width="1.2"/><path d="M25.5 4.5 h2 M30.5 4.5 h1.5 M35 4.5 h2" stroke="#666" stroke-width="1.2"/><rect x="26" y="6.5" width="11" height="6" fill="#8f9094" stroke="#7a7b7f" stroke-width="1"/><path d="M21 0 L22 3 M18.5 1.5 L24 2.5" stroke="#999" stroke-width=".8"/><rect x="41.5" y="4.5" width="15" height="12" fill="#ddd" stroke="#222"/><rect x="43" y="2.5" width="15" height="12" fill="#f4f4f4" stroke="#1a1a1a" stroke-width="1.2"/><path d="M44.5 4.5 h2 M49.5 4.5 h1.5 M54 4.5 h2" stroke="#111" stroke-width="1.2"/><rect x="45" y="6.5" width="11" height="6" fill="#e8ece8" stroke="#e050b0" stroke-width="1"/><rect x="50" y="12" width="5" height="4" rx="2" fill="none" stroke="#111" stroke-width="2.4"/><rect x="55" y="12" width="5" height="4" rx="2" fill="none" stroke="#111" stroke-width="2.4"/><rect x="50" y="12" width="5" height="4" rx="2" fill="none" stroke="#fff" stroke-width="1"/><rect x="55" y="12" width="5" height="4" rx="2" fill="none" stroke="#fff" stroke-width="1"/><rect x="63" y="2.5" width="15" height="12" fill="#8f9094" stroke="#6a6b6f" stroke-width="1.2"/><path d="M64.5 4.5 h2 M69.5 4.5 h1.5 M74 4.5 h2" stroke="#666" stroke-width="1.2"/><rect x="65" y="6.5" width="11" height="6" fill="#8f9094" stroke="#7a7b7f" stroke-width="1"/><path d="M70 10 L76 18" stroke="#777" stroke-width="1.4"/><rect x="70" y="12" width="5" height="4" rx="2" fill="none" stroke="#8a8b8f" stroke-width="1.4"/><rect x="75" y="12" width="5" height="4" rx="2" fill="none" stroke="#8a8b8f" stroke-width="1.4"/></svg>
<div class="a" style="left:779px;top:807px;width:22px;height:21px;background:#6c6d71;border:1px solid #5a5b5f;border-radius:3px"></div>
<svg style="left:781px;top:809px;" width="18" height="17" viewBox="0 0 18 17"><rect x="2" y="2" width="12" height="12" fill="url(#gbx)" stroke="#222"/><defs><linearGradient id="gbx" x1="0" y1="0" x2="1" y2="1"><stop offset="0" stop-color="#fff"/><stop offset="1" stop-color="#555"/></linearGradient></defs><path d="M15 5 V15 H5" fill="none" stroke="#222"/></svg>
<div class="a" style="left:221px;top:828px;width:141px;height:29px;background:#6f7074;border-top:1px solid #4b4c50"></div>
<div class="a" style="left:223px;top:830px;width:134px;height:25px;background:linear-gradient(#828387,#6f7074);border:1px solid #58595d;border-radius:3px"></div>
<div class="t f" style="left:252px;top:835px;width:59px;color:#eaeaea;font-size:12px"><span>タイムライン1</span></div>
<svg style="left:343px;top:839px;" width="11" height="6" viewBox="0 0 11 6"><path d="M0 0 L11 0 L5.5 6Z" fill="#3a3a3a"/></svg>
<svg style="left:359px;top:830px;" width="3" height="27" viewBox="0 0 3 27"><path d="M1.5 0 V27" stroke="#444" stroke-dasharray="1 2"/></svg>
<div class="a" style="left:363px;top:828px;width:1154px;height:28px;background:#5f6064;border-top:1px solid #3e3f43"></div>
<div class="a" style="left:562px;top:828px;width:300px;height:28px;background:#77787c"></div>
<div class="a" style="left:682px;top:828px;width:120px;height:28px;background:#7b818e"></div>
<div class="a" style="left:553px;top:828px;width:9px;height:28px;background:#3030b8"></div>
<div class="a" style="left:862px;top:828px;width:10px;height:28px;background:#3030b8"></div>
<svg style="left:363px;top:828px;" width="1154" height="28" viewBox="0 0 1154 28"><rect x="4" y="22" width="1" height="5" fill="#2e2e2e"/><rect x="19" y="13" width="1" height="14" fill="#2e2e2e"/><rect x="34" y="22" width="1" height="5" fill="#2e2e2e"/><rect x="49" y="22" width="1" height="5" fill="#2e2e2e"/><rect x="64" y="22" width="1" height="5" fill="#2e2e2e"/><rect x="79" y="13" width="1" height="14" fill="#2e2e2e"/><rect x="94" y="22" width="1" height="5" fill="#2e2e2e"/><rect x="109" y="22" width="1" height="5" fill="#2e2e2e"/><rect x="124" y="22" width="1" height="5" fill="#2e2e2e"/><rect x="139" y="13" width="1" height="14" fill="#2e2e2e"/><rect x="154" y="22" width="1" height="5" fill="#2e2e2e"/><rect x="169" y="22" width="1" height="5" fill="#2e2e2e"/><rect x="184" y="22" width="1" height="5" fill="#2e2e2e"/><rect x="199" y="6" width="1" height="21" fill="#2e2e2e"/><rect x="214" y="22" width="1" height="5" fill="#2e2e2e"/><rect x="229" y="22" width="1" height="5" fill="#2e2e2e"/><rect x="244" y="22" width="1" height="5" fill="#2e2e2e"/><rect x="259" y="13" width="1" height="14" fill="#2e2e2e"/><rect x="274" y="22" width="1" height="5" fill="#2e2e2e"/><rect x="289" y="22" width="1" height="5" fill="#2e2e2e"/><rect x="304" y="22" width="1" height="5" fill="#2e2e2e"/><rect x="319" y="6" width="1" height="21" fill="#2e2e2e"/><rect x="334" y="22" width="1" height="5" fill="#2e2e2e"/><rect x="349" y="22" width="1" height="5" fill="#2e2e2e"/><rect x="364" y="22" width="1" height="5" fill="#2e2e2e"/><rect x="379" y="13" width="1" height="14" fill="#2e2e2e"/><rect x="394" y="22" width="1" height="5" fill="#2e2e2e"/><rect x="409" y="22" width="1" height="5" fill="#2e2e2e"/><rect x="424" y="22" width="1" height="5" fill="#2e2e2e"/><rect x="439" y="6" width="1" height="21" fill="#2e2e2e"/><rect x="454" y="22" width="1" height="5" fill="#2e2e2e"/><rect x="469" y="22" width="1" height="5" fill="#2e2e2e"/><rect x="484" y="22" width="1" height="5" fill="#2e2e2e"/><rect x="499" y="13" width="1" height="14" fill="#2e2e2e"/><rect x="514" y="22" width="1" height="5" fill="#2e2e2e"/><rect x="529" y="22" width="1" height="5" fill="#2e2e2e"/><rect x="544" y="22" width="1" height="5" fill="#2e2e2e"/><rect x="559" y="6" width="1" height="21" fill="#2e2e2e"/><rect x="574" y="22" width="1" height="5" fill="#2e2e2e"/><rect x="589" y="22" width="1" height="5" fill="#2e2e2e"/><rect x="604" y="22" width="1" height="5" fill="#2e2e2e"/><rect x="619" y="13" width="1" height="14" fill="#2e2e2e"/><rect x="634" y="22" width="1" height="5" fill="#2e2e2e"/><rect x="649" y="22" width="1" height="5" fill="#2e2e2e"/><rect x="664" y="22" width="1" height="5" fill="#2e2e2e"/><rect x="679" y="6" width="1" height="21" fill="#2e2e2e"/><rect x="694" y="22" width="1" height="5" fill="#2e2e2e"/><rect x="709" y="22" width="1" height="5" fill="#2e2e2e"/><rect x="724" y="22" width="1" height="5" fill="#2e2e2e"/><rect x="739" y="13" width="1" height="14" fill="#2e2e2e"/><rect x="754" y="22" width="1" height="5" fill="#2e2e2e"/><rect x="769" y="22" width="1" height="5" fill="#2e2e2e"/><rect x="784" y="22" width="1" height="5" fill="#2e2e2e"/><rect x="799" y="6" width="1" height="21" fill="#2e2e2e"/><rect x="814" y="22" width="1" height="5" fill="#2e2e2e"/><rect x="829" y="22" width="1" height="5" fill="#2e2e2e"/><rect x="844" y="22" width="1" height="5" fill="#2e2e2e"/><rect x="859" y="13" width="1" height="14" fill="#2e2e2e"/><rect x="874" y="22" width="1" height="5" fill="#2e2e2e"/><rect x="889" y="22" width="1" height="5" fill="#2e2e2e"/><rect x="904" y="22" width="1" height="5" fill="#2e2e2e"/><rect x="919" y="6" width="1" height="21" fill="#2e2e2e"/><rect x="934" y="22" width="1" height="5" fill="#2e2e2e"/><rect x="949" y="22" width="1" height="5" fill="#2e2e2e"/><rect x="964" y="22" width="1" height="5" fill="#2e2e2e"/><rect x="979" y="13" width="1" height="14" fill="#2e2e2e"/><rect x="994" y="22" width="1" height="5" fill="#2e2e2e"/><rect x="1009" y="22" width="1" height="5" fill="#2e2e2e"/><rect x="1024" y="22" width="1" height="5" fill="#2e2e2e"/><rect x="1039" y="6" width="1" height="21" fill="#2e2e2e"/><rect x="1054" y="22" width="1" height="5" fill="#2e2e2e"/><rect x="1069" y="22" width="1" height="5" fill="#2e2e2e"/><rect x="1084" y="22" width="1" height="5" fill="#2e2e2e"/><rect x="1099" y="13" width="1" height="14" fill="#2e2e2e"/><rect x="1114" y="22" width="1" height="5" fill="#2e2e2e"/><rect x="1129" y="22" width="1" height="5" fill="#2e2e2e"/><rect x="1144" y="22" width="1" height="5" fill="#2e2e2e"/></svg>
<div class="t f" style="left:384px;top:842px;width:18.799999999999997px;color:#e6e6e6;font-size:11px"><span>&minus;12</span></div>
<div class="t f" style="left:444px;top:842px;width:13.2px;color:#e6e6e6;font-size:11px"><span>&minus;8</span></div>
<div class="t f" style="left:504px;top:842px;width:13.2px;color:#e6e6e6;font-size:11px"><span>&minus;4</span></div>
<div class="t f" style="left:564px;top:842px;width:5.6px;color:#e6e6e6;font-size:11px"><span>1</span></div>
<div class="t f" style="left:624px;top:842px;width:5.6px;color:#e6e6e6;font-size:11px"><span>5</span></div>
<div class="t f" style="left:684px;top:842px;width:5.6px;color:#e6e6e6;font-size:11px"><span>9</span></div>
<div class="t f" style="left:744px;top:842px;width:11.2px;color:#e6e6e6;font-size:11px"><span>13</span></div>
<div class="t f" style="left:863px;top:842px;width:6px;color:#8b8bf0;font-size:11px"><span>2</span></div>
<div class="t f" style="left:870px;top:842px;width:5px;color:#e0e0e0;font-size:11px"><span>1</span></div>
<div class="t f" style="left:924px;top:842px;width:11.2px;color:#e6e6e6;font-size:11px"><span>25</span></div>
<div class="t f" style="left:984px;top:842px;width:11.2px;color:#e6e6e6;font-size:11px"><span>29</span></div>
<div class="t f" style="left:1044px;top:842px;width:11.2px;color:#e6e6e6;font-size:11px"><span>33</span></div>
<div class="t f" style="left:1104px;top:842px;width:11.2px;color:#e6e6e6;font-size:11px"><span>37</span></div>
<div class="t f" style="left:1164px;top:842px;width:11.2px;color:#e6e6e6;font-size:11px"><span>41</span></div>
<div class="t f" style="left:1224px;top:842px;width:11.2px;color:#e6e6e6;font-size:11px"><span>45</span></div>
<div class="t f" style="left:1284px;top:842px;width:11.2px;color:#e6e6e6;font-size:11px"><span>49</span></div>
<div class="t f" style="left:1344px;top:842px;width:11.2px;color:#e6e6e6;font-size:11px"><span>53</span></div>
<div class="t f" style="left:1404px;top:842px;width:11.2px;color:#e6e6e6;font-size:11px"><span>57</span></div>
<div class="t f" style="left:1464px;top:842px;width:11.2px;color:#e6e6e6;font-size:11px"><span>61</span></div>
<div class="t f" style="left:444px;top:830px;width:11px;color:#e6e6e6;font-size:10px"><span>&minus;1</span></div>
<div class="t f" style="left:564px;top:830px;width:5px;color:#e6e6e6;font-size:10px"><span>0</span></div>
<div class="t f" style="left:684px;top:830px;width:5px;color:#e6e6e6;font-size:10px"><span>1</span></div>
<div class="t f" style="left:924px;top:830px;width:5px;color:#e6e6e6;font-size:10px"><span>3</span></div>
<div class="t f" style="left:1044px;top:830px;width:5px;color:#e6e6e6;font-size:10px"><span>4</span></div>
<div class="t f" style="left:1164px;top:830px;width:5px;color:#e6e6e6;font-size:10px"><span>5</span></div>
<div class="t f" style="left:1284px;top:830px;width:5px;color:#e6e6e6;font-size:10px"><span>6</span></div>
<div class="t f" style="left:1404px;top:830px;width:5px;color:#e6e6e6;font-size:10px"><span>7</span></div>
<div class="a" style="left:802px;top:828px;width:16px;height:28px;background:#cf4a4a"></div>
<div class="t f" style="left:806px;top:829px;width:12px;color:#fff;font-size:11px;font-weight:bold"><span>17</span></div>
<div class="t f" style="left:805px;top:842px;width:11px;color:#f3b0b0;font-size:11px"><span>17</span></div>
<div class="a" style="left:363px;top:855px;width:1154px;height:2px;background:#3a3b3f"></div>
<div class="a" style="left:363px;top:857px;width:1154px;height:182px;background:#5e5f63"></div>
<svg style="left:363px;top:857px;" width="1154" height="182" viewBox="0 0 1154 182"><rect x="4" y="0" width="1" height="182" fill="#67686c"/><rect x="19" y="0" width="1" height="182" fill="#3f4044"/><rect x="34" y="0" width="1" height="182" fill="#67686c"/><rect x="49" y="0" width="1" height="182" fill="#67686c"/><rect x="64" y="0" width="1" height="182" fill="#67686c"/><rect x="79" y="0" width="1" height="182" fill="#3f4044"/><rect x="94" y="0" width="1" height="182" fill="#67686c"/><rect x="109" y="0" width="1" height="182" fill="#67686c"/><rect x="124" y="0" width="1" height="182" fill="#67686c"/><rect x="139" y="0" width="1" height="182" fill="#3f4044"/><rect x="154" y="0" width="1" height="182" fill="#67686c"/><rect x="169" y="0" width="1" height="182" fill="#67686c"/><rect x="184" y="0" width="1" height="182" fill="#67686c"/><rect x="199" y="0" width="1" height="182" fill="#3f4044"/><rect x="214" y="0" width="1" height="182" fill="#67686c"/><rect x="229" y="0" width="1" height="182" fill="#67686c"/><rect x="244" y="0" width="1" height="182" fill="#67686c"/><rect x="259" y="0" width="1" height="182" fill="#3f4044"/><rect x="274" y="0" width="1" height="182" fill="#67686c"/><rect x="289" y="0" width="1" height="182" fill="#67686c"/><rect x="304" y="0" width="1" height="182" fill="#67686c"/><rect x="319" y="0" width="1" height="182" fill="#3f4044"/><rect x="334" y="0" width="1" height="182" fill="#67686c"/><rect x="349" y="0" width="1" height="182" fill="#67686c"/><rect x="364" y="0" width="1" height="182" fill="#67686c"/><rect x="379" y="0" width="1" height="182" fill="#3f4044"/><rect x="394" y="0" width="1" height="182" fill="#67686c"/><rect x="409" y="0" width="1" height="182" fill="#67686c"/><rect x="424" y="0" width="1" height="182" fill="#67686c"/><rect x="439" y="0" width="1" height="182" fill="#3f4044"/><rect x="454" y="0" width="1" height="182" fill="#67686c"/><rect x="469" y="0" width="1" height="182" fill="#67686c"/><rect x="484" y="0" width="1" height="182" fill="#67686c"/><rect x="499" y="0" width="1" height="182" fill="#3f4044"/><rect x="514" y="0" width="1" height="182" fill="#67686c"/><rect x="529" y="0" width="1" height="182" fill="#67686c"/><rect x="544" y="0" width="1" height="182" fill="#67686c"/><rect x="559" y="0" width="1" height="182" fill="#3f4044"/><rect x="574" y="0" width="1" height="182" fill="#67686c"/><rect x="589" y="0" width="1" height="182" fill="#67686c"/><rect x="604" y="0" width="1" height="182" fill="#67686c"/><rect x="619" y="0" width="1" height="182" fill="#3f4044"/><rect x="634" y="0" width="1" height="182" fill="#67686c"/><rect x="649" y="0" width="1" height="182" fill="#67686c"/><rect x="664" y="0" width="1" height="182" fill="#67686c"/><rect x="679" y="0" width="1" height="182" fill="#3f4044"/><rect x="694" y="0" width="1" height="182" fill="#67686c"/><rect x="709" y="0" width="1" height="182" fill="#67686c"/><rect x="724" y="0" width="1" height="182" fill="#67686c"/><rect x="739" y="0" width="1" height="182" fill="#3f4044"/><rect x="754" y="0" width="1" height="182" fill="#67686c"/><rect x="769" y="0" width="1" height="182" fill="#67686c"/><rect x="784" y="0" width="1" height="182" fill="#67686c"/><rect x="799" y="0" width="1" height="182" fill="#3f4044"/><rect x="814" y="0" width="1" height="182" fill="#67686c"/><rect x="829" y="0" width="1" height="182" fill="#67686c"/><rect x="844" y="0" width="1" height="182" fill="#67686c"/><rect x="859" y="0" width="1" height="182" fill="#3f4044"/><rect x="874" y="0" width="1" height="182" fill="#67686c"/><rect x="889" y="0" width="1" height="182" fill="#67686c"/><rect x="904" y="0" width="1" height="182" fill="#67686c"/><rect x="919" y="0" width="1" height="182" fill="#3f4044"/><rect x="934" y="0" width="1" height="182" fill="#67686c"/><rect x="949" y="0" width="1" height="182" fill="#67686c"/><rect x="964" y="0" width="1" height="182" fill="#67686c"/><rect x="979" y="0" width="1" height="182" fill="#3f4044"/><rect x="994" y="0" width="1" height="182" fill="#67686c"/><rect x="1009" y="0" width="1" height="182" fill="#67686c"/><rect x="1024" y="0" width="1" height="182" fill="#67686c"/><rect x="1039" y="0" width="1" height="182" fill="#3f4044"/><rect x="1054" y="0" width="1" height="182" fill="#67686c"/><rect x="1069" y="0" width="1" height="182" fill="#67686c"/><rect x="1084" y="0" width="1" height="182" fill="#67686c"/><rect x="1099" y="0" width="1" height="182" fill="#3f4044"/><rect x="1114" y="0" width="1" height="182" fill="#67686c"/><rect x="1129" y="0" width="1" height="182" fill="#67686c"/><rect x="1144" y="0" width="1" height="182" fill="#67686c"/><rect x="0" y="0.0" width="1154" height="1" fill="#4b4c50"/><rect x="0" y="26.9" width="1154" height="1" fill="#4b4c50"/><rect x="0" y="53.8" width="1154" height="1" fill="#4b4c50"/><rect x="0" y="80.7" width="1154" height="1" fill="#4b4c50"/><rect x="0" y="107.6" width="1154" height="1" fill="#4b4c50"/><rect x="0" y="134.5" width="1154" height="1" fill="#4b4c50"/><rect x="0" y="161.4" width="1154" height="1" fill="#4b4c50"/></svg>
<div class="a" style="left:1504px;top:857px;width:14px;height:168px;background:#66676b;border-left:1px solid #55565a"></div>
<div class="a" style="left:1507px;top:872px;width:9px;height:152px;background:linear-gradient(90deg,#808185,#8b8c90);border-left:1px solid #5e5f63"></div>
<div class="a" style="left:1503px;top:1021px;width:13px;height:15px;background:linear-gradient(#8a8b8f,#747579);border:1px solid #5e5f63;border-radius:3px"></div>
<div class="a" style="left:363px;top:1025px;width:1140px;height:12px;background:#6b6c70;border-top:1px solid #58595d"></div>
<div class="a" style="left:221px;top:857px;width:20px;height:27px;background:#77787c;border-right:1px solid #5a5b5f;border-bottom:1px solid #4a4b4f"></div>
<svg style="left:224px;top:865px;" width="14" height="10" viewBox="0 0 14 10"><path d="M1 5 Q7 -1 13 5 Q7 11 1 5Z" fill="#fff" stroke="#111" stroke-width="1.2"/><circle cx="7" cy="5" r="2.8" fill="#111"/><circle cx="6" cy="4" r="0.9" fill="#fff"/></svg>
<div class="a" style="left:241px;top:857px;width:121px;height:27px;background:#77787c;border-bottom:1px solid #4a4b4f;border-right:1px solid #4a4b4f"></div>
<svg style="left:248px;top:863px;" width="18" height="16" viewBox="0 0 18 16"><rect x="1.5" y="4.5" width="13" height="11" fill="#ccc" stroke="#333"/><rect x="3.5" y="1.5" width="13" height="11" fill="#f4f4f4" stroke="#222"/><path d="M5 3.5 h2 M9 3.5 h1.5 M12.5 3.5 h2" stroke="#111"/><rect x="5.5" y="5.5" width="9" height="5" fill="#e6eae6" stroke="#d94ab0"/></svg>
<div class="t f" style="left:270px;top:865px;width:11px;color:#f0f0f0;font-size:12px"><span>目</span></div>
<div class="a" style="left:562px;top:858px;width:300px;height:7px;background:#67686c;border:1px solid #333"></div>
<div class="a" style="left:568px;top:859px;width:3px;height:5px;background:#222"></div>
<div class="a" style="left:853px;top:859px;width:3px;height:5px;background:#222"></div>
<div class="a" style="left:562px;top:865px;width:300px;height:19px;background:#5d5e62;border-left:1px solid #333;border-right:1px solid #333;border-bottom:2px solid #333"></div>
<div class="a" style="left:562px;top:865px;width:15px;height:19px;background:#68696d;border-left:1px solid #2e2e2e;border-top:1px solid #2e2e2e;border-bottom:1px solid #2e2e2e"></div>
<div class="a" style="left:577px;top:865px;width:15px;height:19px;background:#68696d;border-left:1px solid #2e2e2e;border-top:1px solid #2e2e2e;border-bottom:1px solid #2e2e2e"></div>
<div class="a" style="left:592px;top:865px;width:15px;height:19px;background:#68696d;border-left:1px solid #2e2e2e;border-top:1px solid #2e2e2e;border-bottom:1px solid #2e2e2e"></div>
<div class="a" style="left:607px;top:865px;width:15px;height:19px;background:#68696d;border-left:1px solid #2e2e2e;border-top:1px solid #2e2e2e;border-bottom:1px solid #2e2e2e"></div>
<div class="a" style="left:622px;top:865px;width:15px;height:19px;background:#68696d;border-left:1px solid #2e2e2e;border-top:1px solid #2e2e2e;border-bottom:1px solid #2e2e2e"></div>
<div class="a" style="left:637px;top:865px;width:15px;height:19px;background:#68696d;border-left:1px solid #2e2e2e;border-top:1px solid #2e2e2e;border-bottom:1px solid #2e2e2e"></div>
<div class="a" style="left:652px;top:865px;width:15px;height:19px;background:#68696d;border-left:1px solid #2e2e2e;border-top:1px solid #2e2e2e;border-bottom:1px solid #2e2e2e"></div>
<div class="a" style="left:667px;top:865px;width:15px;height:19px;background:#68696d;border-left:1px solid #2e2e2e;border-top:1px solid #2e2e2e;border-bottom:1px solid #2e2e2e"></div>
<div class="a" style="left:682px;top:865px;width:15px;height:19px;background:#68696d;border-left:1px solid #2e2e2e;border-top:1px solid #2e2e2e;border-bottom:1px solid #2e2e2e"></div>
<div class="a" style="left:697px;top:865px;width:15px;height:19px;background:#68696d;border-left:1px solid #2e2e2e;border-top:1px solid #2e2e2e;border-bottom:1px solid #2e2e2e"></div>
<div class="a" style="left:712px;top:865px;width:15px;height:19px;background:#68696d;border-left:1px solid #2e2e2e;border-top:1px solid #2e2e2e;border-bottom:1px solid #2e2e2e"></div>
<div class="a" style="left:727px;top:865px;width:15px;height:19px;background:#68696d;border-left:1px solid #2e2e2e;border-top:1px solid #2e2e2e;border-bottom:1px solid #2e2e2e"></div>
<div class="a" style="left:742px;top:865px;width:15px;height:19px;background:#68696d;border-left:1px solid #2e2e2e;border-top:1px solid #2e2e2e;border-bottom:1px solid #2e2e2e"></div>
<div class="a" style="left:757px;top:865px;width:15px;height:19px;background:#68696d;border-left:1px solid #2e2e2e;border-top:1px solid #2e2e2e;border-bottom:1px solid #2e2e2e"></div>
<div class="a" style="left:772px;top:865px;width:15px;height:19px;background:#68696d;border-left:1px solid #2e2e2e;border-top:1px solid #2e2e2e;border-bottom:1px solid #2e2e2e"></div>
<div class="a" style="left:787px;top:865px;width:15px;height:19px;background:#68696d;border-left:1px solid #2e2e2e;border-top:1px solid #2e2e2e;border-bottom:1px solid #2e2e2e"></div>
<div class="a" style="left:802px;top:865px;width:15px;height:19px;background:#68696d;border-left:1px solid #2e2e2e;border-top:1px solid #2e2e2e;border-bottom:1px solid #2e2e2e"></div>
<div class="a" style="left:817px;top:865px;width:15px;height:19px;background:#68696d;border-left:1px solid #2e2e2e;border-top:1px solid #2e2e2e;border-bottom:1px solid #2e2e2e"></div>
<div class="a" style="left:832px;top:865px;width:15px;height:19px;background:#68696d;border-left:1px solid #2e2e2e;border-top:1px solid #2e2e2e;border-bottom:1px solid #2e2e2e"></div>
<div class="a" style="left:847px;top:865px;width:15px;height:19px;background:#68696d;border-left:1px solid #2e2e2e;border-top:1px solid #2e2e2e;border-bottom:1px solid #2e2e2e"></div>
<div class="a" style="left:221px;top:884px;width:20px;height:27px;background:#77787c;border-right:1px solid #5a5b5f;border-bottom:1px solid #4a4b4f"></div>
<svg style="left:224px;top:892px;" width="14" height="10" viewBox="0 0 14 10"><path d="M1 5 Q7 -1 13 5 Q7 11 1 5Z" fill="#fff" stroke="#111" stroke-width="1.2"/><circle cx="7" cy="5" r="2.8" fill="#111"/><circle cx="6" cy="4" r="0.9" fill="#fff"/></svg>
<div class="a" style="left:241px;top:884px;width:121px;height:27px;background:#77787c;border-bottom:1px solid #4a4b4f;border-right:1px solid #4a4b4f"></div>
<svg style="left:248px;top:890px;" width="18" height="16" viewBox="0 0 18 16"><rect x="1.5" y="4.5" width="13" height="11" fill="#ccc" stroke="#333"/><rect x="3.5" y="1.5" width="13" height="11" fill="#f4f4f4" stroke="#222"/><path d="M5 3.5 h2 M9 3.5 h1.5 M12.5 3.5 h2" stroke="#111"/><rect x="5.5" y="5.5" width="9" height="5" fill="#e6eae6" stroke="#d94ab0"/></svg>
<div class="t f" style="left:270px;top:892px;width:14px;color:#f0f0f0;font-size:12px"><span>髪</span></div>
<div class="a" style="left:562px;top:885px;width:300px;height:7px;background:#67686c;border:1px solid #333"></div>
<div class="a" style="left:568px;top:886px;width:3px;height:5px;background:#222"></div>
<div class="a" style="left:853px;top:886px;width:3px;height:5px;background:#222"></div>
<div class="a" style="left:562px;top:892px;width:300px;height:19px;background:#5d5e62;border-left:1px solid #333;border-right:1px solid #333;border-bottom:2px solid #333"></div>
<div class="a" style="left:562px;top:892px;width:15px;height:19px;background:#68696d;border-left:1px solid #2e2e2e;border-top:1px solid #2e2e2e;border-bottom:1px solid #2e2e2e"></div>
<div class="a" style="left:577px;top:892px;width:15px;height:19px;background:#68696d;border-left:1px solid #2e2e2e;border-top:1px solid #2e2e2e;border-bottom:1px solid #2e2e2e"></div>
<div class="a" style="left:592px;top:892px;width:15px;height:19px;background:#68696d;border-left:1px solid #2e2e2e;border-top:1px solid #2e2e2e;border-bottom:1px solid #2e2e2e"></div>
<div class="a" style="left:607px;top:892px;width:15px;height:19px;background:#68696d;border-left:1px solid #2e2e2e;border-top:1px solid #2e2e2e;border-bottom:1px solid #2e2e2e"></div>
<div class="a" style="left:622px;top:892px;width:15px;height:19px;background:#68696d;border-left:1px solid #2e2e2e;border-top:1px solid #2e2e2e;border-bottom:1px solid #2e2e2e"></div>
<div class="a" style="left:637px;top:892px;width:15px;height:19px;background:#68696d;border-left:1px solid #2e2e2e;border-top:1px solid #2e2e2e;border-bottom:1px solid #2e2e2e"></div>
<div class="a" style="left:652px;top:892px;width:15px;height:19px;background:#68696d;border-left:1px solid #2e2e2e;border-top:1px solid #2e2e2e;border-bottom:1px solid #2e2e2e"></div>
<div class="a" style="left:667px;top:892px;width:15px;height:19px;background:#68696d;border-left:1px solid #2e2e2e;border-top:1px solid #2e2e2e;border-bottom:1px solid #2e2e2e"></div>
<div class="a" style="left:682px;top:892px;width:15px;height:19px;background:#68696d;border-left:1px solid #2e2e2e;border-top:1px solid #2e2e2e;border-bottom:1px solid #2e2e2e"></div>
<div class="a" style="left:697px;top:892px;width:15px;height:19px;background:#68696d;border-left:1px solid #2e2e2e;border-top:1px solid #2e2e2e;border-bottom:1px solid #2e2e2e"></div>
<div class="a" style="left:712px;top:892px;width:15px;height:19px;background:#68696d;border-left:1px solid #2e2e2e;border-top:1px solid #2e2e2e;border-bottom:1px solid #2e2e2e"></div>
<div class="a" style="left:727px;top:892px;width:15px;height:19px;background:#68696d;border-left:1px solid #2e2e2e;border-top:1px solid #2e2e2e;border-bottom:1px solid #2e2e2e"></div>
<div class="a" style="left:742px;top:892px;width:15px;height:19px;background:#68696d;border-left:1px solid #2e2e2e;border-top:1px solid #2e2e2e;border-bottom:1px solid #2e2e2e"></div>
<div class="a" style="left:757px;top:892px;width:15px;height:19px;background:#68696d;border-left:1px solid #2e2e2e;border-top:1px solid #2e2e2e;border-bottom:1px solid #2e2e2e"></div>
<div class="a" style="left:772px;top:892px;width:15px;height:19px;background:#68696d;border-left:1px solid #2e2e2e;border-top:1px solid #2e2e2e;border-bottom:1px solid #2e2e2e"></div>
<div class="a" style="left:787px;top:892px;width:15px;height:19px;background:#68696d;border-left:1px solid #2e2e2e;border-top:1px solid #2e2e2e;border-bottom:1px solid #2e2e2e"></div>
<div class="a" style="left:802px;top:892px;width:15px;height:19px;background:#68696d;border-left:1px solid #2e2e2e;border-top:1px solid #2e2e2e;border-bottom:1px solid #2e2e2e"></div>
<div class="a" style="left:817px;top:892px;width:15px;height:19px;background:#68696d;border-left:1px solid #2e2e2e;border-top:1px solid #2e2e2e;border-bottom:1px solid #2e2e2e"></div>
<div class="a" style="left:832px;top:892px;width:15px;height:19px;background:#68696d;border-left:1px solid #2e2e2e;border-top:1px solid #2e2e2e;border-bottom:1px solid #2e2e2e"></div>
<div class="a" style="left:847px;top:892px;width:15px;height:19px;background:#68696d;border-left:1px solid #2e2e2e;border-top:1px solid #2e2e2e;border-bottom:1px solid #2e2e2e"></div>
<div class="a" style="left:221px;top:911px;width:20px;height:27px;background:#77787c;border-right:1px solid #5a5b5f;border-bottom:1px solid #4a4b4f"></div>
<svg style="left:224px;top:919px;" width="14" height="10" viewBox="0 0 14 10"><path d="M1 5 Q7 -1 13 5 Q7 11 1 5Z" fill="#fff" stroke="#111" stroke-width="1.2"/><circle cx="7" cy="5" r="2.8" fill="#111"/><circle cx="6" cy="4" r="0.9" fill="#fff"/></svg>
<div class="a" style="left:241px;top:911px;width:121px;height:27px;background:#77787c;border-bottom:1px solid #4a4b4f;border-right:1px solid #4a4b4f"></div>
<svg style="left:248px;top:917px;" width="18" height="16" viewBox="0 0 18 16"><rect x="1.5" y="4.5" width="13" height="11" fill="#ccc" stroke="#333"/><rect x="3.5" y="1.5" width="13" height="11" fill="#f4f4f4" stroke="#222"/><path d="M5 3.5 h2 M9 3.5 h1.5 M12.5 3.5 h2" stroke="#111"/><rect x="5.5" y="5.5" width="9" height="5" fill="#e6eae6" stroke="#d94ab0"/></svg>
<div class="t f" style="left:270px;top:919px;width:24px;color:#f0f0f0;font-size:12px"><span>輪郭</span></div>
<div class="a" style="left:562px;top:912px;width:300px;height:7px;background:#67686c;border:1px solid #333"></div>
<div class="a" style="left:568px;top:913px;width:3px;height:5px;background:#222"></div>
<div class="a" style="left:853px;top:913px;width:3px;height:5px;background:#222"></div>
<div class="a" style="left:562px;top:919px;width:300px;height:19px;background:#5d5e62;border-left:1px solid #333;border-right:1px solid #333;border-bottom:2px solid #333"></div>
<div class="a" style="left:562px;top:919px;width:15px;height:19px;background:#68696d;border-left:1px solid #2e2e2e;border-top:1px solid #2e2e2e;border-bottom:1px solid #2e2e2e"></div>
<div class="a" style="left:577px;top:919px;width:15px;height:19px;background:#68696d;border-left:1px solid #2e2e2e;border-top:1px solid #2e2e2e;border-bottom:1px solid #2e2e2e"></div>
<div class="a" style="left:592px;top:919px;width:15px;height:19px;background:#68696d;border-left:1px solid #2e2e2e;border-top:1px solid #2e2e2e;border-bottom:1px solid #2e2e2e"></div>
<div class="a" style="left:607px;top:919px;width:15px;height:19px;background:#68696d;border-left:1px solid #2e2e2e;border-top:1px solid #2e2e2e;border-bottom:1px solid #2e2e2e"></div>
<div class="a" style="left:622px;top:919px;width:15px;height:19px;background:#68696d;border-left:1px solid #2e2e2e;border-top:1px solid #2e2e2e;border-bottom:1px solid #2e2e2e"></div>
<div class="a" style="left:637px;top:919px;width:15px;height:19px;background:#68696d;border-left:1px solid #2e2e2e;border-top:1px solid #2e2e2e;border-bottom:1px solid #2e2e2e"></div>
<div class="a" style="left:652px;top:919px;width:15px;height:19px;background:#68696d;border-left:1px solid #2e2e2e;border-top:1px solid #2e2e2e;border-bottom:1px solid #2e2e2e"></div>
<div class="a" style="left:667px;top:919px;width:15px;height:19px;background:#68696d;border-left:1px solid #2e2e2e;border-top:1px solid #2e2e2e;border-bottom:1px solid #2e2e2e"></div>
<div class="a" style="left:682px;top:919px;width:15px;height:19px;background:#68696d;border-left:1px solid #2e2e2e;border-top:1px solid #2e2e2e;border-bottom:1px solid #2e2e2e"></div>
<div class="a" style="left:697px;top:919px;width:15px;height:19px;background:#68696d;border-left:1px solid #2e2e2e;border-top:1px solid #2e2e2e;border-bottom:1px solid #2e2e2e"></div>
<div class="a" style="left:712px;top:919px;width:15px;height:19px;background:#68696d;border-left:1px solid #2e2e2e;border-top:1px solid #2e2e2e;border-bottom:1px solid #2e2e2e"></div>
<div class="a" style="left:727px;top:919px;width:15px;height:19px;background:#68696d;border-left:1px solid #2e2e2e;border-top:1px solid #2e2e2e;border-bottom:1px solid #2e2e2e"></div>
<div class="a" style="left:742px;top:919px;width:15px;height:19px;background:#68696d;border-left:1px solid #2e2e2e;border-top:1px solid #2e2e2e;border-bottom:1px solid #2e2e2e"></div>
<div class="a" style="left:757px;top:919px;width:15px;height:19px;background:#68696d;border-left:1px solid #2e2e2e;border-top:1px solid #2e2e2e;border-bottom:1px solid #2e2e2e"></div>
<div class="a" style="left:772px;top:919px;width:15px;height:19px;background:#68696d;border-left:1px solid #2e2e2e;border-top:1px solid #2e2e2e;border-bottom:1px solid #2e2e2e"></div>
<div class="a" style="left:787px;top:919px;width:15px;height:19px;background:#68696d;border-left:1px solid #2e2e2e;border-top:1px solid #2e2e2e;border-bottom:1px solid #2e2e2e"></div>
<div class="a" style="left:802px;top:919px;width:15px;height:19px;background:#68696d;border-left:1px solid #2e2e2e;border-top:1px solid #2e2e2e;border-bottom:1px solid #2e2e2e"></div>
<div class="a" style="left:817px;top:919px;width:15px;height:19px;background:#68696d;border-left:1px solid #2e2e2e;border-top:1px solid #2e2e2e;border-bottom:1px solid #2e2e2e"></div>
<div class="a" style="left:832px;top:919px;width:15px;height:19px;background:#68696d;border-left:1px solid #2e2e2e;border-top:1px solid #2e2e2e;border-bottom:1px solid #2e2e2e"></div>
<div class="a" style="left:847px;top:919px;width:15px;height:19px;background:#68696d;border-left:1px solid #2e2e2e;border-top:1px solid #2e2e2e;border-bottom:1px solid #2e2e2e"></div>
<div class="a" style="left:221px;top:938px;width:20px;height:27px;background:#77787c;border-right:1px solid #5a5b5f;border-bottom:1px solid #4a4b4f"></div>
<svg style="left:224px;top:946px;" width="14" height="10" viewBox="0 0 14 10"><path d="M1 5 Q7 -1 13 5 Q7 11 1 5Z" fill="#fff" stroke="#111" stroke-width="1.2"/><circle cx="7" cy="5" r="2.8" fill="#111"/><circle cx="6" cy="4" r="0.9" fill="#fff"/></svg>
<div class="a" style="left:241px;top:938px;width:121px;height:27px;background:#77787c;border-bottom:1px solid #4a4b4f;border-right:1px solid #4a4b4f"></div>
<svg style="left:248px;top:944px;" width="18" height="16" viewBox="0 0 18 16"><rect x="1.5" y="4.5" width="13" height="11" fill="#ccc" stroke="#333"/><rect x="3.5" y="1.5" width="13" height="11" fill="#f4f4f4" stroke="#222"/><path d="M5 3.5 h2 M9 3.5 h1.5 M12.5 3.5 h2" stroke="#111"/><rect x="5.5" y="5.5" width="9" height="5" fill="#e6eae6" stroke="#d94ab0"/></svg>
<div class="t f" style="left:270px;top:946px;width:24px;color:#f0f0f0;font-size:12px"><span>文字</span></div>
<div class="a" style="left:562px;top:939px;width:300px;height:7px;background:#67686c;border:1px solid #333"></div>
<div class="a" style="left:568px;top:940px;width:3px;height:5px;background:#222"></div>
<div class="a" style="left:853px;top:940px;width:3px;height:5px;background:#222"></div>
<div class="a" style="left:562px;top:946px;width:300px;height:19px;background:#5d5e62;border-left:1px solid #333;border-right:1px solid #333;border-bottom:2px solid #333"></div>
<div class="a" style="left:562px;top:946px;width:15px;height:19px;background:#68696d;border-left:1px solid #2e2e2e;border-top:1px solid #2e2e2e;border-bottom:1px solid #2e2e2e"></div>
<div class="a" style="left:577px;top:946px;width:15px;height:19px;background:#68696d;border-left:1px solid #2e2e2e;border-top:1px solid #2e2e2e;border-bottom:1px solid #2e2e2e"></div>
<div class="a" style="left:592px;top:946px;width:15px;height:19px;background:#68696d;border-left:1px solid #2e2e2e;border-top:1px solid #2e2e2e;border-bottom:1px solid #2e2e2e"></div>
<div class="a" style="left:607px;top:946px;width:15px;height:19px;background:#68696d;border-left:1px solid #2e2e2e;border-top:1px solid #2e2e2e;border-bottom:1px solid #2e2e2e"></div>
<div class="a" style="left:622px;top:946px;width:15px;height:19px;background:#68696d;border-left:1px solid #2e2e2e;border-top:1px solid #2e2e2e;border-bottom:1px solid #2e2e2e"></div>
<div class="a" style="left:637px;top:946px;width:15px;height:19px;background:#68696d;border-left:1px solid #2e2e2e;border-top:1px solid #2e2e2e;border-bottom:1px solid #2e2e2e"></div>
<div class="a" style="left:652px;top:946px;width:15px;height:19px;background:#68696d;border-left:1px solid #2e2e2e;border-top:1px solid #2e2e2e;border-bottom:1px solid #2e2e2e"></div>
<div class="a" style="left:667px;top:946px;width:15px;height:19px;background:#68696d;border-left:1px solid #2e2e2e;border-top:1px solid #2e2e2e;border-bottom:1px solid #2e2e2e"></div>
<div class="a" style="left:682px;top:946px;width:15px;height:19px;background:#68696d;border-left:1px solid #2e2e2e;border-top:1px solid #2e2e2e;border-bottom:1px solid #2e2e2e"></div>
<div class="a" style="left:697px;top:946px;width:15px;height:19px;background:#68696d;border-left:1px solid #2e2e2e;border-top:1px solid #2e2e2e;border-bottom:1px solid #2e2e2e"></div>
<div class="a" style="left:712px;top:946px;width:15px;height:19px;background:#68696d;border-left:1px solid #2e2e2e;border-top:1px solid #2e2e2e;border-bottom:1px solid #2e2e2e"></div>
<div class="a" style="left:727px;top:946px;width:15px;height:19px;background:#68696d;border-left:1px solid #2e2e2e;border-top:1px solid #2e2e2e;border-bottom:1px solid #2e2e2e"></div>
<div class="a" style="left:742px;top:946px;width:15px;height:19px;background:#68696d;border-left:1px solid #2e2e2e;border-top:1px solid #2e2e2e;border-bottom:1px solid #2e2e2e"></div>
<div class="a" style="left:757px;top:946px;width:15px;height:19px;background:#68696d;border-left:1px solid #2e2e2e;border-top:1px solid #2e2e2e;border-bottom:1px solid #2e2e2e"></div>
<div class="a" style="left:772px;top:946px;width:15px;height:19px;background:#68696d;border-left:1px solid #2e2e2e;border-top:1px solid #2e2e2e;border-bottom:1px solid #2e2e2e"></div>
<div class="a" style="left:787px;top:946px;width:15px;height:19px;background:#68696d;border-left:1px solid #2e2e2e;border-top:1px solid #2e2e2e;border-bottom:1px solid #2e2e2e"></div>
<div class="a" style="left:802px;top:946px;width:15px;height:19px;background:#68696d;border-left:1px solid #2e2e2e;border-top:1px solid #2e2e2e;border-bottom:1px solid #2e2e2e"></div>
<div class="a" style="left:817px;top:946px;width:15px;height:19px;background:#68696d;border-left:1px solid #2e2e2e;border-top:1px solid #2e2e2e;border-bottom:1px solid #2e2e2e"></div>
<div class="a" style="left:832px;top:946px;width:15px;height:19px;background:#68696d;border-left:1px solid #2e2e2e;border-top:1px solid #2e2e2e;border-bottom:1px solid #2e2e2e"></div>
<div class="a" style="left:847px;top:946px;width:15px;height:19px;background:#68696d;border-left:1px solid #2e2e2e;border-top:1px solid #2e2e2e;border-bottom:1px solid #2e2e2e"></div>
<div class="a" style="left:221px;top:965px;width:20px;height:27px;background:#77787c;border-right:1px solid #5a5b5f;border-bottom:1px solid #4a4b4f"></div>
<svg style="left:224px;top:973px;" width="14" height="10" viewBox="0 0 14 10"><path d="M1 5 Q7 -1 13 5 Q7 11 1 5Z" fill="#fff" stroke="#111" stroke-width="1.2"/><circle cx="7" cy="5" r="2.8" fill="#111"/><circle cx="6" cy="4" r="0.9" fill="#fff"/></svg>
<div class="a" style="left:241px;top:965px;width:121px;height:27px;background:#77787c;border-bottom:1px solid #4a4b4f;border-right:1px solid #4a4b4f"></div>
<svg style="left:248px;top:971px;" width="18" height="16" viewBox="0 0 18 16"><rect x="1.5" y="4.5" width="13" height="11" fill="#ccc" stroke="#333"/><rect x="3.5" y="1.5" width="13" height="11" fill="#f4f4f4" stroke="#222"/><path d="M5 3.5 h2 M9 3.5 h1.5 M12.5 3.5 h2" stroke="#111"/><rect x="5.5" y="5.5" width="9" height="5" fill="#e6eae6" stroke="#d94ab0"/></svg>
<div class="t f" style="left:270px;top:973px;width:89px;color:#f0f0f0;font-size:12px"><span>アニメーションフォルダー</span></div>
<div class="a" style="left:562px;top:966px;width:300px;height:7px;background:#67686c;border:1px solid #333"></div>
<div class="a" style="left:568px;top:967px;width:3px;height:5px;background:#222"></div>
<div class="a" style="left:853px;top:967px;width:3px;height:5px;background:#222"></div>
<div class="a" style="left:562px;top:973px;width:300px;height:19px;background:#5d5e62;border-left:1px solid #333;border-right:1px solid #333;border-bottom:2px solid #333"></div>
<div class="a" style="left:562px;top:973px;width:15px;height:19px;background:#68696d;border-left:1px solid #2e2e2e;border-top:1px solid #2e2e2e;border-bottom:1px solid #2e2e2e"></div>
<div class="a" style="left:577px;top:973px;width:15px;height:19px;background:#68696d;border-left:1px solid #2e2e2e;border-top:1px solid #2e2e2e;border-bottom:1px solid #2e2e2e"></div>
<div class="a" style="left:592px;top:973px;width:15px;height:19px;background:#68696d;border-left:1px solid #2e2e2e;border-top:1px solid #2e2e2e;border-bottom:1px solid #2e2e2e"></div>
<div class="a" style="left:607px;top:973px;width:15px;height:19px;background:#68696d;border-left:1px solid #2e2e2e;border-top:1px solid #2e2e2e;border-bottom:1px solid #2e2e2e"></div>
<div class="a" style="left:622px;top:973px;width:15px;height:19px;background:#68696d;border-left:1px solid #2e2e2e;border-top:1px solid #2e2e2e;border-bottom:1px solid #2e2e2e"></div>
<div class="a" style="left:637px;top:973px;width:15px;height:19px;background:#68696d;border-left:1px solid #2e2e2e;border-top:1px solid #2e2e2e;border-bottom:1px solid #2e2e2e"></div>
<div class="a" style="left:652px;top:973px;width:15px;height:19px;background:#68696d;border-left:1px solid #2e2e2e;border-top:1px solid #2e2e2e;border-bottom:1px solid #2e2e2e"></div>
<div class="a" style="left:667px;top:973px;width:15px;height:19px;background:#68696d;border-left:1px solid #2e2e2e;border-top:1px solid #2e2e2e;border-bottom:1px solid #2e2e2e"></div>
<div class="a" style="left:682px;top:973px;width:15px;height:19px;background:#68696d;border-left:1px solid #2e2e2e;border-top:1px solid #2e2e2e;border-bottom:1px solid #2e2e2e"></div>
<div class="a" style="left:697px;top:973px;width:15px;height:19px;background:#68696d;border-left:1px solid #2e2e2e;border-top:1px solid #2e2e2e;border-bottom:1px solid #2e2e2e"></div>
<div class="a" style="left:712px;top:973px;width:15px;height:19px;background:#68696d;border-left:1px solid #2e2e2e;border-top:1px solid #2e2e2e;border-bottom:1px solid #2e2e2e"></div>
<div class="a" style="left:727px;top:973px;width:15px;height:19px;background:#68696d;border-left:1px solid #2e2e2e;border-top:1px solid #2e2e2e;border-bottom:1px solid #2e2e2e"></div>
<div class="a" style="left:742px;top:973px;width:15px;height:19px;background:#68696d;border-left:1px solid #2e2e2e;border-top:1px solid #2e2e2e;border-bottom:1px solid #2e2e2e"></div>
<div class="a" style="left:757px;top:973px;width:15px;height:19px;background:#68696d;border-left:1px solid #2e2e2e;border-top:1px solid #2e2e2e;border-bottom:1px solid #2e2e2e"></div>
<div class="a" style="left:772px;top:973px;width:15px;height:19px;background:#68696d;border-left:1px solid #2e2e2e;border-top:1px solid #2e2e2e;border-bottom:1px solid #2e2e2e"></div>
<div class="a" style="left:787px;top:973px;width:15px;height:19px;background:#68696d;border-left:1px solid #2e2e2e;border-top:1px solid #2e2e2e;border-bottom:1px solid #2e2e2e"></div>
<div class="a" style="left:802px;top:973px;width:15px;height:19px;background:#68696d;border-left:1px solid #2e2e2e;border-top:1px solid #2e2e2e;border-bottom:1px solid #2e2e2e"></div>
<div class="a" style="left:817px;top:973px;width:15px;height:19px;background:#68696d;border-left:1px solid #2e2e2e;border-top:1px solid #2e2e2e;border-bottom:1px solid #2e2e2e"></div>
<div class="a" style="left:832px;top:973px;width:15px;height:19px;background:#68696d;border-left:1px solid #2e2e2e;border-top:1px solid #2e2e2e;border-bottom:1px solid #2e2e2e"></div>
<div class="a" style="left:847px;top:973px;width:15px;height:19px;background:#68696d;border-left:1px solid #2e2e2e;border-top:1px solid #2e2e2e;border-bottom:1px solid #2e2e2e"></div>
<div class="a" style="left:221px;top:992px;width:20px;height:27px;background:#77787c;border-right:1px solid #5a5b5f;border-bottom:1px solid #4a4b4f"></div>
<svg style="left:224px;top:1000px;" width="14" height="10" viewBox="0 0 14 10"><path d="M1 5 Q7 -1 13 5 Q7 11 1 5Z" fill="#fff" stroke="#111" stroke-width="1.2"/><circle cx="7" cy="5" r="2.8" fill="#111"/><circle cx="6" cy="4" r="0.9" fill="#fff"/></svg>
<div class="a" style="left:241px;top:992px;width:121px;height:27px;background:#77787c;border-bottom:1px solid #4a4b4f;border-right:1px solid #4a4b4f"></div>
<svg style="left:249px;top:997px;" width="14" height="17" viewBox="0 0 14 17"><path d="M1 1 H9 L13 5 V16 H1Z" fill="#fbfbfb" stroke="#333"/><path d="M9 1 V5 H13" fill="none" stroke="#333"/></svg>
<div class="t f" style="left:270px;top:1000px;width:25px;color:#f0f0f0;font-size:12px"><span>用紙</span></div>
<div class="a" style="left:562px;top:993px;width:300px;height:7px;background:#67686c;border:1px solid #333"></div>
<div class="a" style="left:568px;top:994px;width:3px;height:5px;background:#222"></div>
<div class="a" style="left:853px;top:994px;width:3px;height:5px;background:#222"></div>
<div class="a" style="left:562px;top:1000px;width:300px;height:19px;background:#5d5e62;border-left:1px solid #333;border-right:1px solid #333;border-bottom:2px solid #333"></div>
<div class="a" style="left:802px;top:857px;width:16px;height:162px;background:rgba(200,60,60,.45)"></div>
<div class="t f" style="left:564px;top:867px;width:4px;color:#f8f8f8;font-size:11px"><span>1</span></div>
<div class="t f" style="left:579px;top:867px;width:5px;color:#f8f8f8;font-size:11px"><span>2</span></div>
<div class="t f" style="left:594px;top:867px;width:5px;color:#f8f8f8;font-size:11px"><span>3</span></div>
<div class="t f" style="left:609px;top:867px;width:5px;color:#f8f8f8;font-size:11px"><span>4</span></div>
<div class="t f" style="left:624px;top:867px;width:5px;color:#f8f8f8;font-size:11px"><span>5</span></div>
<div class="t f" style="left:639px;top:867px;width:5px;color:#f8f8f8;font-size:11px"><span>6</span></div>
<div class="t f" style="left:654px;top:867px;width:5px;color:#f8f8f8;font-size:11px"><span>7</span></div>
<div class="t f" style="left:669px;top:867px;width:5px;color:#f8f8f8;font-size:11px"><span>7</span></div>
<div class="t f" style="left:684px;top:867px;width:5px;color:#f8f8f8;font-size:11px"><span>7</span></div>
<div class="t f" style="left:699px;top:867px;width:5px;color:#f8f8f8;font-size:11px"><span>7</span></div>
<div class="t f" style="left:714px;top:867px;width:5px;color:#f8f8f8;font-size:11px"><span>7</span></div>
<div class="t f" style="left:729px;top:867px;width:5px;color:#f8f8f8;font-size:11px"><span>7</span></div>
<div class="t f" style="left:744px;top:867px;width:5px;color:#f8f8f8;font-size:11px"><span>7</span></div>
<div class="t f" style="left:759px;top:867px;width:5px;color:#f8f8f8;font-size:11px"><span>7</span></div>
<div class="t f" style="left:774px;top:867px;width:5px;color:#f8f8f8;font-size:11px"><span>8</span></div>
<div class="t f" style="left:789px;top:867px;width:5px;color:#f8f8f8;font-size:11px"><span>8</span></div>
<div class="t f" style="left:804px;top:867px;width:5px;color:#f8f8f8;font-size:11px"><span>9</span></div>
<div class="t f" style="left:819px;top:867px;width:12px;color:#f8f8f8;font-size:11px"><span>10</span></div>
<div class="t f" style="left:834px;top:867px;width:12px;color:#f8f8f8;font-size:11px"><span>11</span></div>
<div class="t f" style="left:849px;top:867px;width:5px;color:#f8f8f8;font-size:11px"><span>9</span></div>
<div class="t f" style="left:564px;top:894px;width:4px;color:#f8f8f8;font-size:11px"><span>1</span></div>
<div class="t f" style="left:579px;top:894px;width:5px;color:#f8f8f8;font-size:11px"><span>2</span></div>
<div class="t f" style="left:594px;top:894px;width:5px;color:#f8f8f8;font-size:11px"><span>3</span></div>
<div class="t f" style="left:609px;top:894px;width:5px;color:#f8f8f8;font-size:11px"><span>4</span></div>
<div class="t f" style="left:624px;top:894px;width:5px;color:#f8f8f8;font-size:11px"><span>5</span></div>
<div class="t f" style="left:639px;top:894px;width:5px;color:#f8f8f8;font-size:11px"><span>6</span></div>
<div class="t f" style="left:654px;top:894px;width:5px;color:#f8f8f8;font-size:11px"><span>7</span></div>
<div class="t f" style="left:669px;top:894px;width:5px;color:#f8f8f8;font-size:11px"><span>8</span></div>
<div class="t f" style="left:684px;top:894px;width:5px;color:#f8f8f8;font-size:11px"><span>8</span></div>
<div class="t f" style="left:699px;top:894px;width:5px;color:#f8f8f8;font-size:11px"><span>8</span></div>
<div class="t f" style="left:714px;top:894px;width:5px;color:#f8f8f8;font-size:11px"><span>8</span></div>
<div class="t f" style="left:729px;top:894px;width:5px;color:#f8f8f8;font-size:11px"><span>8</span></div>
<div class="t f" style="left:744px;top:894px;width:5px;color:#f8f8f8;font-size:11px"><span>8</span></div>
<div class="t f" style="left:759px;top:894px;width:5px;color:#f8f8f8;font-size:11px"><span>8</span></div>
<div class="t f" style="left:774px;top:894px;width:5px;color:#f8f8f8;font-size:11px"><span>9</span></div>
<div class="t f" style="left:789px;top:894px;width:12px;color:#f8f8f8;font-size:11px"><span>10</span></div>
<div class="t f" style="left:804px;top:894px;width:12px;color:#f8f8f8;font-size:11px"><span>10</span></div>
<div class="t f" style="left:819px;top:894px;width:12px;color:#f8f8f8;font-size:11px"><span>10</span></div>
<div class="t f" style="left:834px;top:894px;width:12px;color:#f8f8f8;font-size:11px"><span>10</span></div>
<div class="t f" style="left:849px;top:894px;width:12px;color:#f8f8f8;font-size:11px"><span>10</span></div>
<div class="t f" style="left:564px;top:921px;width:4px;color:#f8f8f8;font-size:11px"><span>1</span></div>
<div class="t f" style="left:579px;top:921px;width:5px;color:#f8f8f8;font-size:11px"><span>2</span></div>
<div class="t f" style="left:594px;top:921px;width:5px;color:#f8f8f8;font-size:11px"><span>3</span></div>
<div class="t f" style="left:609px;top:921px;width:5px;color:#f8f8f8;font-size:11px"><span>4</span></div>
<div class="t f" style="left:624px;top:921px;width:5px;color:#f8f8f8;font-size:11px"><span>5</span></div>
<div class="t f" style="left:639px;top:921px;width:5px;color:#f8f8f8;font-size:11px"><span>6</span></div>
<div class="t f" style="left:654px;top:921px;width:5px;color:#f8f8f8;font-size:11px"><span>7</span></div>
<div class="t f" style="left:669px;top:921px;width:5px;color:#f8f8f8;font-size:11px"><span>7</span></div>
<div class="t f" style="left:684px;top:921px;width:11px;color:#f8f8f8;font-size:11px"><span>7a</span></div>
<div class="t f" style="left:699px;top:921px;width:5px;color:#f8f8f8;font-size:11px"><span>8</span></div>
<div class="t f" style="left:714px;top:921px;width:11px;color:#f8f8f8;font-size:11px"><span>8a</span></div>
<div class="t f" style="left:729px;top:921px;width:5px;color:#f8f8f8;font-size:11px"><span>9</span></div>
<div class="t f" style="left:744px;top:921px;width:5px;color:#f8f8f8;font-size:11px"><span>9</span></div>
<div class="t f" style="left:759px;top:921px;width:5px;color:#f8f8f8;font-size:11px"><span>9</span></div>
<div class="t f" style="left:774px;top:921px;width:12px;color:#f8f8f8;font-size:11px"><span>10</span></div>
<div class="t f" style="left:789px;top:921px;width:12px;color:#f8f8f8;font-size:11px"><span>10</span></div>
<div class="t f" style="left:804px;top:921px;width:12px;color:#f8f8f8;font-size:11px"><span>10</span></div>
<div class="t f" style="left:819px;top:921px;width:12px;color:#f8f8f8;font-size:11px"><span>10</span></div>
<div class="t f" style="left:834px;top:921px;width:12px;color:#f8f8f8;font-size:11px"><span>10</span></div>
<div class="t f" style="left:849px;top:921px;width:12px;color:#f8f8f8;font-size:11px"><span>10</span></div>
<div class="t f" style="left:564px;top:948px;width:4px;color:#f8f8f8;font-size:11px"><span>1</span></div>
<div class="t f" style="left:579px;top:948px;width:4px;color:#f8f8f8;font-size:11px"><span>1</span></div>
<div class="t f" style="left:594px;top:948px;width:4px;color:#f8f8f8;font-size:11px"><span>1</span></div>
<div class="t f" style="left:609px;top:948px;width:4px;color:#f8f8f8;font-size:11px"><span>1</span></div>
<div class="t f" style="left:624px;top:948px;width:4px;color:#f8f8f8;font-size:11px"><span>1</span></div>
<div class="t f" style="left:639px;top:948px;width:4px;color:#f8f8f8;font-size:11px"><span>1</span></div>
<div class="t f" style="left:654px;top:948px;width:4px;color:#f8f8f8;font-size:11px"><span>1</span></div>
<div class="t f" style="left:669px;top:948px;width:4px;color:#f8f8f8;font-size:11px"><span>1</span></div>
<div class="t f" style="left:684px;top:948px;width:4px;color:#f8f8f8;font-size:11px"><span>1</span></div>
<div class="t f" style="left:699px;top:948px;width:4px;color:#f8f8f8;font-size:11px"><span>1</span></div>
<div class="t f" style="left:714px;top:948px;width:4px;color:#f8f8f8;font-size:11px"><span>1</span></div>
<div class="t f" style="left:729px;top:948px;width:4px;color:#f8f8f8;font-size:11px"><span>1</span></div>
<div class="t f" style="left:744px;top:948px;width:4px;color:#f8f8f8;font-size:11px"><span>1</span></div>
<div class="t f" style="left:759px;top:948px;width:4px;color:#f8f8f8;font-size:11px"><span>1</span></div>
<div class="t f" style="left:774px;top:948px;width:5px;color:#f8f8f8;font-size:11px"><span>2</span></div>
<div class="t f" style="left:789px;top:948px;width:5px;color:#f8f8f8;font-size:11px"><span>2</span></div>
<div class="t f" style="left:804px;top:948px;width:5px;color:#f8f8f8;font-size:11px"><span>3</span></div>
<div class="t f" style="left:819px;top:948px;width:5px;color:#f8f8f8;font-size:11px"><span>3</span></div>
<div class="t f" style="left:834px;top:948px;width:5px;color:#f8f8f8;font-size:11px"><span>3</span></div>
<div class="t f" style="left:849px;top:948px;width:5px;color:#f8f8f8;font-size:11px"><span>4</span></div>
<div class="t f" style="left:564px;top:975px;width:4px;color:#f8f8f8;font-size:11px"><span>1</span></div>
<div class="t f" style="left:579px;top:975px;width:5px;color:#f8f8f8;font-size:11px"><span>2</span></div>
<div class="t f" style="left:594px;top:975px;width:5px;color:#f8f8f8;font-size:11px"><span>3</span></div>
<div class="t f" style="left:609px;top:975px;width:5px;color:#f8f8f8;font-size:11px"><span>4</span></div>
<div class="t f" style="left:624px;top:975px;width:5px;color:#f8f8f8;font-size:11px"><span>5</span></div>
<div class="t f" style="left:639px;top:975px;width:5px;color:#f8f8f8;font-size:11px"><span>6</span></div>
<div class="t f" style="left:654px;top:975px;width:5px;color:#f8f8f8;font-size:11px"><span>7</span></div>
<div class="t f" style="left:669px;top:975px;width:5px;color:#f8f8f8;font-size:11px"><span>8</span></div>
<div class="t f" style="left:684px;top:975px;width:5px;color:#f8f8f8;font-size:11px"><span>9</span></div>
<div class="t f" style="left:699px;top:975px;width:12px;color:#f8f8f8;font-size:11px"><span>10</span></div>
<div class="t f" style="left:714px;top:975px;width:12px;color:#f8f8f8;font-size:11px"><span>11</span></div>
<div class="t f" style="left:729px;top:975px;width:12px;color:#f8f8f8;font-size:11px"><span>12</span></div>
<div class="t f" style="left:744px;top:975px;width:12px;color:#f8f8f8;font-size:11px"><span>13</span></div>
<div class="t f" style="left:759px;top:975px;width:12px;color:#f8f8f8;font-size:11px"><span>14</span></div>
<div class="t f" style="left:774px;top:975px;width:12px;color:#f8f8f8;font-size:11px"><span>15</span></div>
<div class="t f" style="left:789px;top:975px;width:12px;color:#f8f8f8;font-size:11px"><span>16</span></div>
<div class="t f" style="left:804px;top:975px;width:12px;color:#f8f8f8;font-size:11px"><span>17</span></div>
<div class="t f" style="left:819px;top:975px;width:12px;color:#f8f8f8;font-size:11px"><span>18</span></div>
<div class="t f" style="left:834px;top:975px;width:12px;color:#f8f8f8;font-size:11px"><span>19</span></div>
<div class="t f" style="left:849px;top:975px;width:12px;color:#f8f8f8;font-size:11px"><span>20</span></div>
<div class="a" style="left:802px;top:1019px;width:16px;height:6px;background:#c44"></div>
<div class="a" style="left:561px;top:857px;width:1px;height:180px;background:#3232c8"></div>
<div class="a" style="left:862px;top:857px;width:1px;height:180px;background:#3232c8"></div>
<div class="a" style="left:221px;top:1019px;width:141px;height:19px;background:#77787c"></div>
<div class="a" style="left:1539px;top:48px;width:14px;height:992px;background:linear-gradient(90deg,#505154,#6e6f73 40%,#7e7f83 80%,#5a5b5f 92%,#3c3d40)"></div>
<div class="a" style="left:1539px;top:48px;width:381px;height:20px;background:linear-gradient(#5a5a5a,#3e3e3e);border-bottom:1px solid #3a3a3a"></div>
<svg style="left:1540px;top:52px;" width="12" height="13" viewBox="0 0 12 13"><path d="M5 0 L0 6.5 L5 13 L7.6 13 L3.2 6.5 L7.6 0Z M9.4 0 L4.6 6.5 L9.4 13 L12 13 L7.6 6.5 L12 0Z" fill="#959595"/></svg>
<svg style="left:1554px;top:52px;" width="12" height="13" viewBox="0 0 12 13"><path d="M7 0 L12 6.5 L7 13 L4.4 13 L8.8 6.5 L4.4 0Z M2.6 0 L7.4 6.5 L2.6 13 L0 13 L4.4 6.5 L0 0Z" fill="#959595"/></svg>
<div class="a" style="left:1552px;top:48px;width:1px;height:20px;background:#333"></div>
<div class="a" style="left:1553px;top:68px;width:367px;height:972px;background:#76777b;border-left:1px solid #8e8f93"></div>
<div class="a" style="left:1919px;top:48px;width:1px;height:992px;background:#4a4a4a"></div>
<div class="a" style="left:1554px;top:69px;width:365px;height:16px;background:linear-gradient(#404040,#5d5d5d);border-top:1px solid #363636"></div>
<div class="a" style="left:1554px;top:85px;width:365px;height:6px;background:#76777b"></div>
<div class="a" style="left:1554px;top:69px;width:20px;height:16px;background:#59595b;border:1px solid #4a4a4a"></div>
<svg style="left:1554px;top:69px;" width="20" height="16" viewBox="0 0 20 16"><path d="M6 4 L10 8 L6 12Z" fill="#8d8d8d"/><rect x="10.5" y="4" width="5" height="1.6" fill="#8d8d8d"/><rect x="10.5" y="7.2" width="5" height="1.6" fill="#8d8d8d"/><rect x="10.5" y="10.4" width="5" height="1.6" fill="#8d8d8d"/></svg>
<div class="a" style="left:1573px;top:70px;width:71px;height:21px;background:linear-gradient(#808185,#76777b);border-top:1px solid #8e8f93;border-radius:2px 2px 0 0"></div>
<svg style="left:1577px;top:71px;" width="20" height="20" viewBox="0 0 20 20"><rect x="6" y="7" width="12" height="10" fill="#fff" stroke="#222"/><rect x="4" y="5" width="12" height="10" fill="#ccc" stroke="#222" opacity=".8"/><rect x="1.5" y="2" width="12" height="10" fill="#fff" stroke="#e01010" stroke-width="2"/></svg>
<div class="t f" style="left:1599px;top:75px;width:40px;color:#d8d8d8;font-size:10.5px"><span>ナビゲーター</span></div>
<div class="a" style="left:1644px;top:70px;width:64px;height:15px;background:linear-gradient(#77787c,#6a6b6f);border:1px solid #5b5c60;border-bottom:none;border-radius:2px 2px 0 0"></div>
<svg style="left:1651px;top:73px" width="15" height="14"><rect x="0.5" y="0.5" width="14" height="13" fill="#aaa" stroke="#555"/><path d="M1 8 Q5 5 8 8 Q11 10 14 7 V13 H1Z" fill="#777"/></svg>
<div class="t f" style="left:1672px;top:73px;width:34px;color:#9a9b9e;font-size:10.5px"><span>サブビュー</span></div>
<div class="a" style="left:1709px;top:70px;width:80px;height:15px;background:linear-gradient(#77787c,#6a6b6f);border:1px solid #5b5c60;border-bottom:none;border-radius:2px 2px 0 0"></div>
<svg style="left:1717px;top:72px" width="16" height="16"><path d="M2 15 V8 Q8 0 14 8 V15Z" fill="#8a8a8a" stroke="#555"/></svg>
<div class="t f" style="left:1746px;top:73px;width:40px;color:#9a9b9e;font-size:10.5px"><span>アイテムバンク</span></div>
<div class="a" style="left:1790px;top:70px;width:51px;height:15px;background:linear-gradient(#77787c,#6a6b6f);border:1px solid #5b5c60;border-bottom:none;border-radius:2px 2px 0 0"></div>
<svg style="left:1797px;top:72px" width="14" height="15"><circle cx="7" cy="7.5" r="6.5" fill="#666"/><circle cx="7" cy="4.5" r="1.6" fill="#ccc"/><rect x="5.5" y="7" width="3" height="7" fill="#ccc"/></svg>
<div class="t f" style="left:1815px;top:73px;width:22px;color:#9a9b9e;font-size:10.5px"><span>情報</span></div>
<div class="a" style="left:1554px;top:91px;width:360px;height:57px;background:#424242;border-top:1px solid #333"></div>
<div class="a" style="left:1663px;top:92px;width:1px;height:56px;background:#d40a0a"></div>
<div class="a" style="left:1804px;top:92px;width:1px;height:56px;background:#d40a0a"></div>
<svg style="left:1713px;top:102px;overflow:hidden" width="40" height="35" viewBox="0 0 40 35"><rect width="40" height="35" fill="#fff"/><g transform="scale(0.1081,0.1094)"><path d="M265,4 Q280.2,55.2 317,32 Q280.5,56.1 293,88 Q279.9,56.3 252,58 Q279.6,55.5 265,4 Z" fill="#faf000" stroke="#faf000" stroke-width="7" stroke-linejoin="round"/><circle cx="279" cy="55" r="11" fill="#faf000"/><path d="M291,134 Q282.3,154.8 301,157 Q282.2,155.2 279,177 Q281.8,155.2 266,153 Q281.9,154.8 291,134 Z" fill="#faf000" stroke="#faf000" stroke-width="5" stroke-linejoin="round"/><circle cx="282" cy="155" r="6" fill="#faf000"/><path d="M29,213 Q52.1,252.5 85,245 Q52.5,253.4 74,299 Q51.9,253.7 21,277 Q51.5,252.8 29,213 Z" fill="#faf000" stroke="#faf000" stroke-width="7" stroke-linejoin="round"/><circle cx="52" cy="254" r="11" fill="#faf000"/><path d="M325,239 Q308.4,261.9 327,277 Q308.1,262.4 300,287 Q307.8,262.2 292,258 Q308.0,261.7 325,239 Z" fill="#faf000" stroke="#faf000" stroke-width="6" stroke-linejoin="round"/><circle cx="309" cy="263" r="7" fill="#faf000"/><ellipse cx="48.3" cy="92" rx="23" ry="32" fill="none" stroke="#d30a0a" stroke-width="12"/><path d="M73,30 L97,89 M110,18 L89,56 M90,60 L133,50" fill="none" stroke="#d30a0a" stroke-width="10" stroke-linecap="round" stroke-linejoin="round"/><path d="M140,58 C155,45 180,36 203,34 C226,34 245,45 254,62 C265,80 271,102 271,126 C272,152 268,175 252,197 L226,214 L246,173 L217,191 L168,166 L160,190 L150,224 L139,228 C132,205 126,170 124,140 C122,110 124,80 140,58 Z" fill="#f8c9e0"/><path d="M186,178 L217,191 L238,178 L249,200 L244,218 C230,222 212,226 195,224 C190,223 186,222 180,219 L188,205 Z" fill="#fbdfcd"/><path d="M189,196 C205,212 226,212 242,202 L238,186 L217,194 Z" fill="#f7ccb2" opacity=".8"/><path d="M164,80 L178,84 L210,145 L214,76 L246,173 C236,185 226,191 217,191 C200,188 182,178 168,166 C166,140 164,110 164,80 Z" fill="#fbdfcd"/><ellipse cx="219" cy="142" rx="7" ry="5.5" fill="#f4c0a8" opacity=".7"/><path d="M166,140 C168,160 172,170 178,176 L172,150Z" fill="#f6c8b0" opacity=".6"/><path d="M139,228 C132,205 126,170 124,140 C122,110 124,80 140,58 C155,45 180,36 203,34 C226,34 245,45 254,62 C265,80 271,102 271,126 C272,152 268,175 252,197" fill="none" stroke="#121a19" stroke-width="1.8"/><path d="M164,73 C166,110 168,140 172,162" fill="none" stroke="#121a19" stroke-width="1.4"/><path d="M175,76 L180,114" fill="none" stroke="#121a19" stroke-width="1.4"/><path d="M178,84 L210,145" fill="none" stroke="#121a19" stroke-width="1.4"/><path d="M206,52 C211,60 214,68 214,73 L210,145" fill="none" stroke="#121a19" stroke-width="1.4"/><path d="M214,76 C225,110 240,140 246,173" fill="none" stroke="#121a19" stroke-width="1.4"/><path d="M249,92 C262,130 268,160 269,181" fill="none" stroke="#121a19" stroke-width="1.4"/><path d="M150,98 C153,120 156,140 159,158" fill="none" stroke="#121a19" stroke-width="1.4"/><path d="M162,49 C150,70 144,90 142,110" fill="none" stroke="#121a19" stroke-width="1.4"/><path d="M136,76 C138,120 142,160 148,181" fill="none" stroke="#121a19" stroke-width="1.4"/><path d="M150,224 C146,200 142,185 139,170" fill="none" stroke="#121a19" stroke-width="1.4"/><path d="M226,214 C236,200 244,185 250,170" fill="none" stroke="#121a19" stroke-width="1.4"/><path d="M252,197 C258,180 262,165 264,150" fill="none" stroke="#121a19" stroke-width="1.4"/><path d="M160,190 C158,205 154,215 150,224" fill="none" stroke="#121a19" stroke-width="1.4"/><path d="M186,118 L180,150" fill="none" stroke="#121a19" stroke-width="1.4"/><path d="M87,190 C84,175 78,165 79,158 C80,154 86,154 89,160 C93,168 96,176 98,183 L100,150 C102,142 112,142 113,152 L111,184 L121,148 C123,142 131,144 131,151 L123,182 C130,178 138,176 141,178 C145,182 146,192 145,203 C143,208 140,210 136,210 C132,215 129,220 127,224 L118,236 C125,262 131,292 135,320 L100,320 C96,290 92,260 89,236 Z" fill="#fbdccb" stroke="#1b2b29" stroke-width="1.4"/><path d="M95,240 C99,265 103,292 106,318" stroke="#f5c4aa" stroke-width="7" fill="none" opacity=".8"/><path d="M92,172 C96,190 104,200 112,198 M98,196 C104,190 116,189 122,195 M104,213 C109,205 118,204 124,210 M84,165 C86,175 90,185 92,196" fill="none" stroke="#f3c2a8" stroke-width="4" opacity=".6"/><ellipse cx="131" cy="199" rx="3.5" ry="7" transform="rotate(25 131 199)" fill="#fff" stroke="#1b2b29" stroke-width="1"/><path d="M98,196 C104,190 116,189 122,195 M104,213 C109,205 118,204 124,210 M94,188 C96,196 100,205 104,213" fill="none" stroke="#1b2b29" stroke-width="1.1"/><path d="M157,115 L191,101 M211,96 L244,90 M160,122 L188,112 M220,105 L246,104" stroke="#121a19" stroke-width="1.2" fill="none"/><path d="M148,142 C152,134 160,126 170,122 C178,120 188,120 194,120" stroke="#121a19" stroke-width="2.2" fill="none"/><path d="M219,123 C224,117 230,113 236,113 C245,113 252,116 257,120" stroke="#121a19" stroke-width="2.2" fill="none"/><ellipse cx="178" cy="134" rx="9.5" ry="10.5" fill="#fff" stroke="#222" stroke-width="1.2"/><ellipse cx="178" cy="134" rx="6" ry="6.8" fill="none" stroke="#999" stroke-width=".8"/><circle cx="178" cy="133.5" r="1.5" fill="#111"/><ellipse cx="230.8" cy="127" rx="8.2" ry="9" fill="#f2d5bf" stroke="#222" stroke-width="1.2"/><ellipse cx="230.8" cy="127" rx="5" ry="5.8" fill="none" stroke="#b89a88" stroke-width=".8"/><circle cx="230.8" cy="126" r="1.5" fill="#111"/><path d="M195,166.3 Q206,169 222,162.4" stroke="#121a19" stroke-width="1.2" fill="none"/><path d="M214.5,147 L215.5,150" stroke="#333" stroke-width="1"/><path d="M168,166 C180,178 200,190 217,191 L232,178" stroke="#121a19" stroke-width="1.5" fill="none"/><path d="M244,198 C255,198 265,200 269,203 C275,210 277,218 277,226 C278,260 278,290 279,320" fill="none" stroke="#121a19" stroke-width="1.2"/><path d="M172,218 C182,222 190,224 195,224 C215,226 230,222 244,218" fill="none" stroke="#121a19" stroke-width="1.2"/><path d="M119,231 C125,262 131,292 135,320" fill="none" stroke="#121a19" stroke-width="1.2"/><path d="M188.7,184 L188.7,211" fill="none" stroke="#121a19" stroke-width="1.2"/><path d="M232,180 L228,200" fill="none" stroke="#121a19" stroke-width="1.2"/><path d="M140,240 C145,255 150,268 154,284" fill="none" stroke="#121a19" stroke-width="1.2"/><path d="M150,244 C158,250 165,256 172,262" fill="none" stroke="#121a19" stroke-width="1.2"/><path d="M236,240 C248,232 255,225 262,218" fill="none" stroke="#121a19" stroke-width="1.2"/><path d="M245,250 C252,244 258,238 264,232" fill="none" stroke="#121a19" stroke-width="1.2"/><path d="M258,272 C262,256 265,242 268,230" fill="none" stroke="#121a19" stroke-width="1.2"/><path d="M135,255 C142,275 148,290 152,306" fill="none" stroke="#121a19" stroke-width="1.2"/><path d="M160,256 C168,262 174,266 178,270" fill="none" stroke="#121a19" stroke-width="1.2"/></g></svg>
<div class="a" style="left:1913px;top:91px;width:7px;height:57px;background:repeating-linear-gradient(90deg,#5a5b5f 0,#5a5b5f 1px,#8a8b8f 1px,#8a8b8f 2px)"></div>
<div class="a" style="left:1554px;top:148px;width:366px;height:44px;background:#76777b"></div>
<svg style="left:1559px;top:151px;" width="205" height="40" viewBox="0 0 205 40"><rect x="0.5" y="4.5" width="203" height="11" fill="#7e7f83" stroke="#3c3c3c"/><path d="M17 15.5 L187 4.5 L203.5 4.5 L203.5 15.5Z" fill="#3c3c3d"/><rect x="117.5" y="0.5" width="3.5" height="19" fill="#6a6b6f" stroke="#555" stroke-width=".8"/><rect x="0.5" y="24.5" width="203" height="11" fill="#7e7f83" stroke="#3c3c3c"/><path d="M0.5 24.5 L44 35.5 L77 35.5 Q105 26 124 24.5 L159 24.5 Q185 28 203.5 35.5 L0.5 35.5Z" fill="#3c3c3d"/><rect x="100.5" y="20.5" width="3.5" height="19" fill="#6a6b6f" stroke="#555" stroke-width=".8"/></svg>
<div class="t f" style="left:1782px;top:155px;width:24px;color:#f2f2f2;font-size:11px"><span>100.0</span></div>
<div class="t f" style="left:1793px;top:176px;width:13px;color:#f2f2f2;font-size:11px"><span>0.0</span></div>
<svg style="left:1811px;top:152px;" width="104" height="40" viewBox="0 0 104 40"><circle cx="7" cy="7" r="5.5" fill="#fff" stroke="#111" stroke-width="1.6"/><path d="M4 7 H10" stroke="#111" stroke-width="1.6"/><path d="M11 11 L15 15" stroke="#111" stroke-width="2.4"/><circle cx="27" cy="7" r="5.5" fill="#fff" stroke="#111" stroke-width="1.6"/><path d="M24 7 H30 M27 4 V10" stroke="#111" stroke-width="1.6"/><path d="M31 11 L35 15" stroke="#111" stroke-width="2.4"/><rect x="40" y="0" width="16" height="16" fill="#111"/><rect x="43" y="3" width="10" height="10" fill="none" stroke="#666"/><rect x="44.5" y="4.5" width="7" height="7" fill="#111"/><rect x="60" y="1" width="1" height="16" fill="#5a5b5f"/><rect x="64" y="1" width="16" height="15" fill="#eee" stroke="#111"/><path d="M67 4 L77 13 M74 13 H77 V10" stroke="#111" stroke-width="1.6" fill="none"/><rect x="84" y="1" width="16" height="15" fill="#e6f2f8" stroke="#111"/><path d="M87 4 L97 13 M87 4 H90 M87 4 V7 M97 13 H94 M97 13 V10" stroke="#111" stroke-width="1.6" fill="none"/><path d="M3 30 A6 6 0 1 1 11 34" fill="none" stroke="#111" stroke-width="2.4"/><path d="M0 27 L6 28 L2 33Z" fill="#111"/><path d="M33 30 A6 6 0 1 0 25 34" fill="none" stroke="#111" stroke-width="2.4"/><path d="M36 27 L30 28 L34 33Z" fill="#111"/><circle cx="47" cy="30" r="5.5" fill="none" stroke="#333" stroke-width="2" stroke-dasharray="2.5 1.8"/><rect x="60" y="24" width="1" height="16" fill="#5a5b5f"/><path d="M72 23 A5 5 0 0 1 78 28" fill="none" stroke="#111" stroke-width="2"/><path d="M64 30 L70 34 L64 38Z" fill="#e6f2f8" stroke="#111" stroke-width=".6"/><path d="M80 30 L74 34 L80 38Z" fill="#111"/><path d="M72 28 V39" stroke="#111" stroke-dasharray="1.5 1"/><path d="M90 34 A5 5 0 0 1 92 24" fill="none" stroke="#111" stroke-width="2"/><path d="M88 25 L98 25 L93 30Z" fill="#111"/><path d="M88 39 L98 39 L93 34Z" fill="#e6f2f8"/></svg>
<div class="a" style="left:1554px;top:193px;width:365px;height:16px;background:linear-gradient(#404040,#5d5d5d);border-top:1px solid #363636"></div>
<div class="a" style="left:1554px;top:209px;width:365px;height:5px;background:#76777b"></div>
<div class="a" style="left:1554px;top:193px;width:20px;height:16px;background:#59595b;border:1px solid #4a4a4a"></div>
<svg style="left:1554px;top:193px;" width="20" height="16" viewBox="0 0 20 16"><path d="M6 4 L10 8 L6 12Z" fill="#8d8d8d"/><rect x="10.5" y="4" width="5" height="1.6" fill="#8d8d8d"/><rect x="10.5" y="7.2" width="5" height="1.6" fill="#8d8d8d"/><rect x="10.5" y="10.4" width="5" height="1.6" fill="#8d8d8d"/></svg>
<div class="a" style="left:1573px;top:194px;width:91px;height:20px;background:linear-gradient(#808185,#76777b);border-top:1px solid #8e8f93;border-radius:2px 2px 0 0"></div>
<svg style="left:1577px;top:195px;" width="20" height="19" viewBox="0 0 20 19"><path d="M2 9 L7 14 L18 2" fill="none" stroke="#e01010" stroke-width="2.4"/><rect x="1" y="15" width="15" height="3.5" fill="#111"/></svg>
<div class="t f" style="left:1599px;top:199px;width:62px;color:#dcdcdc;font-size:10.5px"><span>レイヤープロパティ</span></div>
<div class="a" style="left:1665px;top:194px;width:77px;height:15px;background:linear-gradient(#77787c,#6a6b6f);border:1px solid #5b5c60;border-bottom:none;border-radius:2px 2px 0 0"></div>
<svg style="left:1670px;top:196px" width="18" height="15"><path d="M2 3 Q8 0 14 3 M2 6 Q8 3 14 6 M2 9 Q8 6 14 9" stroke="#aaa" fill="none" stroke-width="1.5"/><ellipse cx="12" cy="11" rx="4" ry="3" fill="#999"/></svg>
<div class="t f" style="left:1692px;top:197px;width:43px;color:#9a9b9e;font-size:10.5px"><span>レイヤー検索</span></div>
<div class="a" style="left:1743px;top:194px;width:95px;height:15px;background:linear-gradient(#77787c,#6a6b6f);border:1px solid #5b5c60;border-bottom:none;border-radius:2px 2px 0 0"></div>
<svg style="left:1752px;top:196px" width="12" height="15"><path d="M4 1 H8 V5 L11 14 H1 L4 5Z" fill="#aaa" stroke="#777" stroke-width=".8"/></svg>
<div class="t f" style="left:1770px;top:197px;width:59px;color:#9a9b9e;font-size:10.5px"><span>アニメーションセル</span></div>
<div class="a" style="left:1554px;top:214px;width:350px;height:157px;background:#77787c;border-top:1px solid #3c3c3c;border-bottom:1px solid #3c3c3c"></div>
<div class="a" style="left:1903px;top:214px;width:11px;height:157px;background:#6a6b6f;border:1px solid #5b5c60"></div>
<div class="a" style="left:1913px;top:214px;width:7px;height:157px;background:repeating-linear-gradient(90deg,#5a5b5f 0,#5a5b5f 1px,#8a8b8f 1px,#8a8b8f 2px)"></div>
<div class="t f" style="left:1566px;top:218px;width:23px;color:#f0f0f0;font-size:12px"><span>効果</span></div>
<div class="a" style="left:1558px;top:225px;width:6px;height:1px;background:#8e8f93"></div>
<div class="a" style="left:1594px;top:225px;width:304px;height:1px;background:#8e8f93"></div>
<div class="a" style="left:1789px;top:232px;width:110px;height:20px;background:#6e6f73;border:1px solid #55565a;border-radius:3px"></div>
<svg style="left:1789px;top:232px;" width="110" height="20" viewBox="0 0 110 20"><circle cx="12" cy="10" r="7" fill="#fff"/><circle cx="12" cy="10" r="4.2" fill="#1e1e1e"/><circle cx="36" cy="10" r="7" fill="#2b7bd6"/><circle cx="37.5" cy="8.5" r="6" fill="none" stroke="#222" stroke-width="1"/><rect x="53" y="3" width="15" height="15" fill="#111"/><path d="M53 3 h3v3h-3z M59 3 h3v3h-3z M65 3h3v3h-3z M56 6h3v3h-3z M62 6h3v3h-3z M53 9h3v3h-3z M59 9h3v3h-3z M65 9h3v3h-3z M56 12h3v3h-3z M62 12h3v3h-3z M53 15h3v3h-3z M59 15h3v3h-3z M65 15h3v3h-3z" fill="#8a8a8a"/><rect x="80" y="6" width="11" height="11" fill="#fff" stroke="#777"/><rect x="76" y="2" width="12" height="12" fill="#4fb4f4" stroke="#1d76c8"/><path d="M97 8 L105 8 L101 12Z" fill="#3a3a3a"/></svg>
<div class="t f" style="left:1566px;top:255px;width:35px;color:#f0f0f0;font-size:12px"><span>表現色</span></div>
<div class="a" style="left:1558px;top:262px;width:6px;height:1px;background:#8e8f93"></div>
<div class="a" style="left:1607px;top:262px;width:291px;height:1px;background:#8e8f93"></div>
<div class="a" style="left:1572px;top:273px;width:275px;height:19px;background:linear-gradient(#85868a,#717276);border:1px solid #57585c;border-radius:3px"></div>
<div class="a" style="left:1678px;top:275px;width:4px;height:14px;background:#f47a7a"></div>
<div class="a" style="left:1682px;top:275px;width:5px;height:14px;background:#7ab8f4"></div>
<div class="a" style="left:1687px;top:275px;width:5px;height:14px;background:#7ce07c"></div>
<div class="t f" style="left:1699px;top:277px;width:27px;color:#f2f2f2;font-size:12px"><span>カラー</span></div>
<svg style="left:1834px;top:279px;" width="10" height="6" viewBox="0 0 10 6"><path d="M0 0 L10 0 L5.0 6Z" fill="#3a3a3a"/></svg>
<div class="a" style="left:1554px;top:373px;width:365px;height:16px;background:linear-gradient(#404040,#5d5d5d);border-top:1px solid #363636"></div>
<div class="a" style="left:1554px;top:389px;width:365px;height:1px;background:#76777b"></div>
<div class="a" style="left:1554px;top:373px;width:20px;height:16px;background:#59595b;border:1px solid #4a4a4a"></div>
<svg style="left:1554px;top:373px;" width="20" height="16" viewBox="0 0 20 16"><path d="M6 4 L10 8 L6 12Z" fill="#8d8d8d"/><rect x="10.5" y="4" width="5" height="1.6" fill="#8d8d8d"/><rect x="10.5" y="7.2" width="5" height="1.6" fill="#8d8d8d"/><rect x="10.5" y="10.4" width="5" height="1.6" fill="#8d8d8d"/></svg>
<div class="a" style="left:1573px;top:374px;width:57px;height:16px;background:linear-gradient(#808185,#76777b);border-top:1px solid #8e8f93;border-radius:2px 2px 0 0"></div>
<svg style="left:1577px;top:374px;" width="20" height="17" viewBox="0 0 20 17"><path d="M2 3 Q10 0 17 3 Q10 6 2 3Z M2 7 Q10 4 17 7 Q10 10 2 7Z M2 11 Q10 8 17 11 Q10 14 2 11Z" fill="#eee" stroke="#222" stroke-width=".8"/></svg>
<div class="t f" style="left:1599px;top:377px;width:27px;color:#e0e0e0;font-size:10.5px"><span>レイヤー</span></div>
<div class="a" style="left:1631px;top:374px;width:64px;height:15px;background:linear-gradient(#77787c,#6a6b6f);border:1px solid #5b5c60;border-bottom:none;border-radius:2px 2px 0 0"></div>
<svg style="left:1636px;top:375px" width="18" height="14"><rect width="18" height="14" fill="#555"/><path d="M4 10 Q2 4 8 4 Q14 4 12 10" fill="none" stroke="#bbb" stroke-width="2"/></svg>
<div class="t f" style="left:1658px;top:377px;width:34px;color:#9a9b9e;font-size:10.5px"><span>ヒストリー</span></div>
<div class="a" style="left:1696px;top:374px;width:86px;height:15px;background:linear-gradient(#77787c,#6a6b6f);border:1px solid #5b5c60;border-bottom:none;border-radius:2px 2px 0 0"></div>
<svg style="left:1703px;top:378px" width="16" height="10"><path d="M1 9 L6 3 L9 7 L15 1" stroke="#999" fill="none" stroke-width="1.6" stroke-dasharray="2 1"/></svg>
<div class="t f" style="left:1722px;top:377px;width:56px;color:#9a9b9e;font-size:10.5px"><span>オートアクション</span></div>
<div class="a" style="left:1554px;top:390px;width:366px;height:72px;background:#77787c"></div>
<div class="a" style="left:1556px;top:394px;width:178px;height:20px;background:linear-gradient(#85868a,#717276);border:1px solid #57585c;border-radius:3px"></div>
<div class="t f" style="left:1626px;top:398px;width:23px;color:#f2f2f2;font-size:12px"><span>通常</span></div>
<svg style="left:1723px;top:401px;" width="10" height="6" viewBox="0 0 10 6"><path d="M0 0 L10 0 L5.0 6Z" fill="#3a3a3a"/></svg>
<div class="a" style="left:1740px;top:399px;width:131px;height:9px;background-color:#ddd;background-image:linear-gradient(90deg,rgba(255,255,255,.3),rgba(160,160,160,.6)),linear-gradient(45deg,#aaa 25%,transparent 25%,transparent 75%,#aaa 75%),linear-gradient(45deg,#aaa 25%,transparent 25%,transparent 75%,#aaa 75%);background-size:100% 100%,8px 8px,8px 8px;background-position:0 0,0 0,4px 4px;border:1px solid #555"></div>
<div class="a" style="left:1869px;top:393px;width:4px;height:21px;background:#6a6b6f;border:1px solid #4a4b4f"></div>
<div class="t f" style="left:1882px;top:399px;width:16px;color:#f2f2f2;font-size:11px"><span>100</span></div>
<svg style="left:1903px;top:398px;" width="10" height="14" viewBox="0 0 10 14"><path d="M5 0.5 L9.5 5 L0.5 5Z M5 13.5 L9.5 9 L0.5 9Z" fill="#3a3a3a"/></svg>
<div class="a" style="left:1556px;top:416px;width:37px;height:20px;background:linear-gradient(#85868a,#717276);border:1px solid #57585c;border-radius:3px"></div>
<div class="a" style="left:1557px;top:417px;width:18px;height:18px;background:#76777b;border:1px solid #222"></div>
<svg style="left:1580px;top:424px;" width="8" height="5" viewBox="0 0 8 5"><path d="M0 0 L8 0 L4.0 5Z" fill="#3a3a3a"/></svg>
<svg style="left:1706px;top:415px;" width="100" height="22" viewBox="0 0 100 22"><ellipse cx="9" cy="11" rx="7.5" ry="5" fill="#333" stroke="#111"/><ellipse cx="9" cy="8.5" rx="7" ry="3" fill="#ccc" stroke="#111" stroke-width=".8"/><path d="M26 3 L28 3 L29 13 L31 19 H23 L25 13Z" fill="#ddd" stroke="#222" stroke-width=".8"/><path d="M22 4 L32 8 M32 4 L22 8" stroke="#aaa" stroke-width=".6"/><path d="M43 2 H50 V14 L46.5 21 L43 14Z" fill="#2aa0e0" stroke="#135" stroke-width=".6"/><path d="M43 14 L50 14 L46.5 21Z" fill="#f0c020"/><rect x="62" y="9" width="14" height="11" fill="#222"/><path d="M64.5 9 V6 A4.5 4.5 0 0 1 73.5 6 V9" fill="none" stroke="#222" stroke-width="2"/><rect x="68" y="12" width="2" height="4" fill="#ddd"/><rect x="80" y="6" width="9" height="8" fill="#222"/><path d="M82 6 V4 A2.5 2.5 0 0 1 87 4 V6" fill="none" stroke="#222" stroke-width="1.5"/><rect x="88" y="12" width="9" height="8" fill="#eee" stroke="#555" stroke-width=".6"/></svg>
<div class="a" style="left:1806px;top:416px;width:35px;height:20px;background:#707175;border:1px solid #5c5d61;border-radius:3px"></div>
<div class="a" style="left:1843px;top:416px;width:35px;height:20px;background:#707175;border:1px solid #5c5d61;border-radius:3px"></div>
<div class="a" style="left:1880px;top:416px;width:35px;height:20px;background:#707175;border:1px solid #5c5d61;border-radius:3px"></div>
<svg style="left:1806px;top:416px;" width="115" height="20" viewBox="0 0 115 20"><path d="M6 4 L14 4 L16 12 L12 16 L6 14Z" fill="#8a8a8e"/><path d="M12 11 L18 17 M18 11 L12 17" stroke="#666" stroke-width="1.6"/><path d="M23 8 L31 8 L27 12Z" fill="#5a5a5e"/><path d="M43 3 L43 16 L55 16Z" fill="none" stroke="#8a8a8e" stroke-width="1.2"/><path d="M49 11 L55 17 M55 11 L49 17" stroke="#666" stroke-width="1.6"/><path d="M60 8 L68 8 L64 12Z" fill="#5a5a5e"/><rect x="85" y="7" width="10" height="10" fill="#fff" stroke="#999"/><rect x="81" y="3" width="10" height="10" fill="#3a8ee8"/><path d="M99 8 L107 8 L103 12Z" fill="#3a3a3a"/></svg>
<div class="a" style="left:1556px;top:437px;width:358px;height:1px;background:#8e8f93"></div>
<div class="a" style="left:1556px;top:436px;width:358px;height:1px;background:#65666a"></div>
<svg style="left:1556px;top:439px;" width="20" height="19" viewBox="0 0 20 19"><path d="M2 4 Q10 1 17 4 Q10 7 2 4Z M2 8 Q10 5 17 8 Q10 11 2 8Z M2 12 Q10 9 17 12 Q10 15 2 12Z" fill="#eee" stroke="#222" stroke-width=".8"/></svg>
<svg style="left:1757px;top:439px;" width="158" height="20" viewBox="0 0 158 20"><path d="M1.5 2.5 H13 V13 L9.5 16.5 H1.5Z" fill="#fafafa" stroke="#222"/><path d="M13 13 H9.5 V16.5" fill="#ccc" stroke="#222"/><path d="M20.5 2.5 H32 V16.5 H20.5Z" fill="#fafafa" stroke="#222"/><rect x="28" y="11" width="7" height="7" fill="#ddd" stroke="#333" stroke-width=".8"/><path d="M39.5 4.5 H49 V14.5 H39.5Z" fill="#ccc" stroke="#333"/><path d="M44.5 6.5 H56 V16.5 H44.5Z" fill="#f5f5f5" stroke="#222"/><path d="M62 4 L68 10 L74 4 M68 2 V10 M62 12 L68 16 L74 12" fill="none" stroke="#999" stroke-width="1.5"/><path d="M82 4 L88 10 L94 4 M88 2 V10 M82 12 L88 16 L94 12" fill="none" stroke="#999" stroke-width="1.5"/><rect x="100" y="5" width="16" height="10" fill="#222"/><circle cx="108" cy="10" r="3" fill="#eee"/><path d="M122 16 L122 4 L134 8 L126 12Z" fill="#888" stroke="#666" stroke-width=".6"/><ellipse cx="149" cy="4.5" rx="6.5" ry="2.5" fill="#eee" stroke="#222"/><path d="M143 6 L144.5 17 H153.5 L155 6" fill="#f2f2f2" stroke="#222"/></svg>
<div class="a" style="left:1554px;top:461px;width:366px;height:579px;background:#77787c;border-top:1px solid #3c3c3c"></div>
<div class="a" style="left:1558px;top:461px;width:1px;height:579px;background:#333538"></div>
<div class="a" style="left:1578px;top:461px;width:1px;height:579px;background:#333538"></div>
<div class="a" style="left:1596px;top:461px;width:1px;height:579px;background:#333538"></div>
<div class="a" style="left:1902px;top:461px;width:12px;height:577px;background:#6a6b6f;border:1px solid #5b5c60"></div>
<div class="a" style="left:1903px;top:463px;width:10px;height:14px;background:linear-gradient(#8a8b8f,#747579);border:1px solid #5e5f63;border-radius:2px"></div>
<svg style="left:1905px;top:468px;" width="6" height="4" viewBox="0 0 6 4"><path d="M0 4 L3 0 L6 4Z" fill="#3a3a3a"/></svg>
<div class="a" style="left:1903px;top:478px;width:10px;height:78px;background:linear-gradient(90deg,#8a8b8f,#7a7b7f);border:1px solid #5e5f63;border-radius:2px"></div>
<div class="a" style="left:1903px;top:1022px;width:10px;height:14px;background:linear-gradient(#8a8b8f,#747579);border:1px solid #5e5f63;border-radius:2px"></div>
<svg style="left:1905px;top:1027px;" width="6" height="4" viewBox="0 0 6 4"><path d="M0 0 L3 4 L6 0Z" fill="#3a3a3a"/></svg>
<div class="a" style="left:1913px;top:461px;width:7px;height:579px;background:repeating-linear-gradient(90deg,#5a5b5f 0,#5a5b5f 1px,#8a8b8f 1px,#8a8b8f 2px)"></div>
<div class="a" style="left:1558px;top:492px;width:345px;height:1px;background:#3e3f43"></div>
<svg style="left:1561px;top:473px;" width="15" height="10" viewBox="0 0 15 10"><path d="M1 5 Q7.5 -1 14 5 Q7.5 11 1 5Z" fill="#fff" stroke="#111" stroke-width="1.2"/><circle cx="7.5" cy="5" r="3" fill="#111"/><circle cx="6.5" cy="4" r="1" fill="#fff"/></svg>
<svg style="left:1602px;top:472px;" width="8" height="11" viewBox="0 0 8 11"><path d="M1 0 L7 5.5 L1 11Z" fill="#f0f0f0"/></svg>
<svg style="left:1614px;top:470px;" width="18" height="16" viewBox="0 0 18 16"><rect x="1.5" y="4.5" width="13" height="11" fill="#ccc" stroke="#333"/><rect x="3.5" y="1.5" width="13" height="11" fill="#f4f4f4" stroke="#222"/><path d="M5 3.5 h2 M9 3.5 h1.5 M12.5 3.5 h2" stroke="#111"/><rect x="5.5" y="5.5" width="9" height="5" fill="#e6eae6" stroke="#d94ab0"/></svg>
<div class="t f" style="left:1639px;top:466px;width:57px;color:#f4f4f4;font-size:11.5px"><span>100 % 通常</span></div>
<div class="t f" style="left:1639px;top:478px;width:33px;color:#f4f4f4;font-size:11.5px"><span>目 : 11</span></div>
<svg style="left:1561px;top:504px;" width="15" height="10" viewBox="0 0 15 10"><path d="M1 5 Q7.5 -1 14 5 Q7.5 11 1 5Z" fill="#fff" stroke="#111" stroke-width="1.2"/><circle cx="7.5" cy="5" r="3" fill="#111"/><circle cx="6.5" cy="4" r="1" fill="#fff"/></svg>
<svg style="left:1599px;top:506px;" width="11" height="7" viewBox="0 0 11 7"><path d="M0 0 L11 0 L5.5 6Z" fill="#f0f0f0"/></svg>
<svg style="left:1614px;top:501px;" width="18" height="16" viewBox="0 0 18 16"><rect x="1.5" y="4.5" width="13" height="11" fill="#ccc" stroke="#333"/><rect x="3.5" y="1.5" width="13" height="11" fill="#f4f4f4" stroke="#222"/><path d="M5 3.5 h2 M9 3.5 h1.5 M12.5 3.5 h2" stroke="#111"/><rect x="5.5" y="5.5" width="9" height="5" fill="#e6eae6" stroke="#d94ab0"/></svg>
<div class="t f" style="left:1639px;top:497px;width:57px;color:#f4f4f4;font-size:11.5px"><span>100 % 通常</span></div>
<div class="t f" style="left:1639px;top:509px;width:33px;color:#f4f4f4;font-size:11.5px"><span>髪 : 10</span></div>
<svg style="left:1561px;top:536px;" width="15" height="10" viewBox="0 0 15 10"><path d="M1 5 Q7.5 -1 14 5 Q7.5 11 1 5Z" fill="#fff" stroke="#111" stroke-width="1.2"/><circle cx="7.5" cy="5" r="3" fill="#111"/><circle cx="6.5" cy="4" r="1" fill="#fff"/></svg>
<div class="a" style="left:1611px;top:523px;width:292px;height:1px;background:#3e3f43"></div>
<svg style="left:1613px;top:538px;" width="11" height="7" viewBox="0 0 11 7"><path d="M0 0 L11 0 L5.5 6Z" fill="#f0f0f0"/></svg>
<svg style="left:1673px;top:532px;" width="16" height="9" viewBox="0 0 16 9"><path d="M1 1 H6 L7 3 H15 L13 8 H1Z" fill="#f2eaa0" stroke="#222" stroke-width=".8"/><path d="M1 8 L4 4 H15 L13 8Z" fill="#444"/></svg>
<svg style="left:1630px;top:527px;" width="34" height="31" viewBox="0 0 34 31"><rect x="0.5" y="0.5" width="33" height="30" fill="#fff" stroke="#111"/><path d="M1 1 h4v4h-4z M9 1h4v4h-4z M17 1h4v4h-4z M25 1h4v4h-4z M5 5h4v4h-4z M13 5h4v4h-4z M21 5h4v4h-4z M29 5h4v4h-4z M1 9h4v4h-4z M9 9h4v4h-4z M17 9h4v4h-4z M25 9h4v4h-4z M5 13h4v4h-4z M13 13h4v4h-4z M21 13h4v4h-4z M29 13h4v4h-4z M1 17h4v4h-4z M9 17h4v4h-4z M17 17h4v4h-4z M25 17h4v4h-4z M5 21h4v4h-4z M13 21h4v4h-4z M21 21h4v4h-4z M29 21h4v4h-4z M1 25h4v5h-4z M9 25h4v5h-4z M17 25h4v5h-4z M25 25h4v5h-4z" fill="#cbcbcb"/><path d="M11 23 Q9 8 17 6 Q25 8 23 23 L21 15 L18 12 L13 15Z" fill="#f3b3d3" opacity=".8"/><path d="M12 20 Q11 10 17 7 M22 20 Q23 10 17 7 M15 9 L14 18 M19 9 L20 17" fill="none" stroke="#a08090" stroke-width=".6"/></svg>
<div class="t f" style="left:1694px;top:528px;width:57px;color:#f4f4f4;font-size:11.5px"><span>100 % 通常</span></div>
<div class="t f" style="left:1694px;top:543px;width:12px;color:#f4f4f4;font-size:11.5px"><span>10</span></div>
<svg style="left:1561px;top:572px;" width="15" height="10" viewBox="0 0 15 10"><path d="M1 5 Q7.5 -1 14 5 Q7.5 11 1 5Z" fill="#fff" stroke="#111" stroke-width="1.2"/><circle cx="7.5" cy="5" r="3" fill="#111"/><circle cx="6.5" cy="4" r="1" fill="#fff"/></svg>
<div class="a" style="left:1635px;top:559px;width:268px;height:1px;background:#3e3f43"></div>
<svg style="left:1644px;top:563px;" width="34" height="31" viewBox="0 0 34 31"><rect x="0.5" y="0.5" width="33" height="30" fill="#fff" stroke="#111"/><path d="M1 1 h4v4h-4z M9 1h4v4h-4z M17 1h4v4h-4z M25 1h4v4h-4z M5 5h4v4h-4z M13 5h4v4h-4z M21 5h4v4h-4z M29 5h4v4h-4z M1 9h4v4h-4z M9 9h4v4h-4z M17 9h4v4h-4z M25 9h4v4h-4z M5 13h4v4h-4z M13 13h4v4h-4z M21 13h4v4h-4z M29 13h4v4h-4z M1 17h4v4h-4z M9 17h4v4h-4z M17 17h4v4h-4z M25 17h4v4h-4z M5 21h4v4h-4z M13 21h4v4h-4z M21 21h4v4h-4z M29 21h4v4h-4z M1 25h4v5h-4z M9 25h4v5h-4z M17 25h4v5h-4z M25 25h4v5h-4z" fill="#cbcbcb"/><path d="M12 22 Q10 8 17 6 Q24 8 22 22 M15 8 L14 20 M19 8 L20 20" fill="none" stroke="#aaa" stroke-width=".8"/></svg>
<div class="t f" style="left:1683px;top:564px;width:57px;color:#f4f4f4;font-size:11.5px"><span>100 % 通常</span></div>
<div class="t f" style="left:1683px;top:579px;width:52px;color:#f4f4f4;font-size:11.5px"><span>レイヤー 48</span></div>
<svg style="left:1561px;top:608px;" width="15" height="10" viewBox="0 0 15 10"><path d="M1 5 Q7.5 -1 14 5 Q7.5 11 1 5Z" fill="#fff" stroke="#111" stroke-width="1.2"/><circle cx="7.5" cy="5" r="3" fill="#111"/><circle cx="6.5" cy="4" r="1" fill="#fff"/></svg>
<div class="a" style="left:1635px;top:595px;width:268px;height:1px;background:#3e3f43"></div>
<svg style="left:1644px;top:599px;" width="34" height="31" viewBox="0 0 34 31"><rect x="0.5" y="0.5" width="33" height="30" fill="#fff" stroke="#111"/><path d="M1 1 h4v4h-4z M9 1h4v4h-4z M17 1h4v4h-4z M25 1h4v4h-4z M5 5h4v4h-4z M13 5h4v4h-4z M21 5h4v4h-4z M29 5h4v4h-4z M1 9h4v4h-4z M9 9h4v4h-4z M17 9h4v4h-4z M25 9h4v4h-4z M5 13h4v4h-4z M13 13h4v4h-4z M21 13h4v4h-4z M29 13h4v4h-4z M1 17h4v4h-4z M9 17h4v4h-4z M17 17h4v4h-4z M25 17h4v4h-4z M5 21h4v4h-4z M13 21h4v4h-4z M21 21h4v4h-4z M29 21h4v4h-4z M1 25h4v5h-4z M9 25h4v5h-4z M17 25h4v5h-4z M25 25h4v5h-4z" fill="#cbcbcb"/><path d="M11 18 Q10 6 17 5 Q24 6 23 18 L20 12 L14 12Z" fill="#f6c0dc" opacity=".85"/></svg>
<div class="t f" style="left:1683px;top:600px;width:57px;color:#f4f4f4;font-size:11.5px"><span>100 % 通常</span></div>
<div class="t f" style="left:1683px;top:615px;width:52px;color:#f4f4f4;font-size:11.5px"><span>レイヤー 95</span></div>
<div class="a" style="left:1635px;top:631px;width:268px;height:1px;background:#3e3f43"></div>
<svg style="left:1644px;top:635px;" width="34" height="31" viewBox="0 0 34 31"><rect x="0.5" y="0.5" width="33" height="30" fill="#fff" stroke="#111"/><path d="M1 1 h4v4h-4z M9 1h4v4h-4z M17 1h4v4h-4z M25 1h4v4h-4z M5 5h4v4h-4z M13 5h4v4h-4z M21 5h4v4h-4z M29 5h4v4h-4z M1 9h4v4h-4z M9 9h4v4h-4z M17 9h4v4h-4z M25 9h4v4h-4z M5 13h4v4h-4z M13 13h4v4h-4z M21 13h4v4h-4z M29 13h4v4h-4z M1 17h4v4h-4z M9 17h4v4h-4z M17 17h4v4h-4z M25 17h4v4h-4z M5 21h4v4h-4z M13 21h4v4h-4z M21 21h4v4h-4z M29 21h4v4h-4z M1 25h4v5h-4z M9 25h4v5h-4z M17 25h4v5h-4z M25 25h4v5h-4z" fill="#cbcbcb"/><path d="M12 22 Q10 8 17 6 Q24 8 22 22 M15 8 L14 20 M19 8 L20 20 M13 12 L12 18" fill="none" stroke="#444" stroke-width=".8"/></svg>
<div class="t f" style="left:1683px;top:636px;width:51px;color:#f4f4f4;font-size:11.5px"><span>30 % 通常</span></div>
<div class="t f" style="left:1683px;top:651px;width:52px;color:#f4f4f4;font-size:11.5px"><span>レイヤー 21</span></div>
<svg style="left:1560px;top:680px;" width="15" height="10" viewBox="0 0 15 10"><path d="M1 5 Q7.5 -1 14 5 Q7.5 11 1 5Z" fill="#9c9da1" stroke="#68696d" stroke-width="1.1"/><circle cx="7.5" cy="5" r="3" fill="#616266"/></svg>
<div class="a" style="left:1611px;top:667px;width:292px;height:1px;background:#3e3f43"></div>
<svg style="left:1613px;top:682px;" width="11" height="7" viewBox="0 0 11 7"><path d="M0 0 L11 0 L5.5 6Z" fill="#f0f0f0"/></svg>
<svg style="left:1673px;top:676px;" width="16" height="9" viewBox="0 0 16 9"><path d="M1 1 H6 L7 3 H15 L13 8 H1Z" fill="#f2eaa0" stroke="#222" stroke-width=".8"/><path d="M1 8 L4 4 H15 L13 8Z" fill="#444"/></svg>
<svg style="left:1630px;top:671px;" width="34" height="31" viewBox="0 0 34 31"><rect x="0.5" y="0.5" width="33" height="30" fill="#fff" stroke="#111"/><path d="M1 1 h4v4h-4z M9 1h4v4h-4z M17 1h4v4h-4z M25 1h4v4h-4z M5 5h4v4h-4z M13 5h4v4h-4z M21 5h4v4h-4z M29 5h4v4h-4z M1 9h4v4h-4z M9 9h4v4h-4z M17 9h4v4h-4z M25 9h4v4h-4z M5 13h4v4h-4z M13 13h4v4h-4z M21 13h4v4h-4z M29 13h4v4h-4z M1 17h4v4h-4z M9 17h4v4h-4z M17 17h4v4h-4z M25 17h4v4h-4z M5 21h4v4h-4z M13 21h4v4h-4z M21 21h4v4h-4z M29 21h4v4h-4z M1 25h4v5h-4z M9 25h4v5h-4z M17 25h4v5h-4z M25 25h4v5h-4z" fill="#cbcbcb"/><path d="M11 23 Q9 8 17 6 Q25 8 23 23 L21 15 L18 12 L13 15Z" fill="#f3b3d3" opacity=".8"/><path d="M12 20 Q11 10 17 7 M22 20 Q23 10 17 7 M15 9 L14 18 M19 9 L20 17" fill="none" stroke="#a08090" stroke-width=".6"/></svg>
<div class="t f" style="left:1694px;top:672px;width:57px;color:#f4f4f4;font-size:11.5px"><span>100 % 通常</span></div>
<div class="t f" style="left:1694px;top:687px;width:6px;color:#f4f4f4;font-size:11.5px"><span>9</span></div>
<svg style="left:1560px;top:716px;" width="15" height="10" viewBox="0 0 15 10"><path d="M1 5 Q7.5 -1 14 5 Q7.5 11 1 5Z" fill="#9c9da1" stroke="#68696d" stroke-width="1.1"/><circle cx="7.5" cy="5" r="3" fill="#616266"/></svg>
<div class="a" style="left:1635px;top:703px;width:268px;height:1px;background:#3e3f43"></div>
<svg style="left:1644px;top:707px;" width="34" height="31" viewBox="0 0 34 31"><rect x="0.5" y="0.5" width="33" height="30" fill="#fff" stroke="#111"/><path d="M1 1 h4v4h-4z M9 1h4v4h-4z M17 1h4v4h-4z M25 1h4v4h-4z M5 5h4v4h-4z M13 5h4v4h-4z M21 5h4v4h-4z M29 5h4v4h-4z M1 9h4v4h-4z M9 9h4v4h-4z M17 9h4v4h-4z M25 9h4v4h-4z M5 13h4v4h-4z M13 13h4v4h-4z M21 13h4v4h-4z M29 13h4v4h-4z M1 17h4v4h-4z M9 17h4v4h-4z M17 17h4v4h-4z M25 17h4v4h-4z M5 21h4v4h-4z M13 21h4v4h-4z M21 21h4v4h-4z M29 21h4v4h-4z M1 25h4v5h-4z M9 25h4v5h-4z M17 25h4v5h-4z M25 25h4v5h-4z" fill="#cbcbcb"/><path d="M12 22 Q10 8 17 6 Q24 8 22 22 M15 8 L14 20 M19 8 L20 20" fill="none" stroke="#aaa" stroke-width=".8"/></svg>
<div class="t f" style="left:1683px;top:708px;width:57px;color:#f4f4f4;font-size:11.5px"><span>100 % 通常</span></div>
<div class="t f" style="left:1683px;top:723px;width:52px;color:#f4f4f4;font-size:11.5px"><span>レイヤー 50</span></div>
<svg style="left:1560px;top:752px;" width="15" height="10" viewBox="0 0 15 10"><path d="M1 5 Q7.5 -1 14 5 Q7.5 11 1 5Z" fill="#9c9da1" stroke="#68696d" stroke-width="1.1"/><circle cx="7.5" cy="5" r="3" fill="#616266"/></svg>
<div class="a" style="left:1635px;top:739px;width:268px;height:1px;background:#3e3f43"></div>
<svg style="left:1644px;top:743px;" width="34" height="31" viewBox="0 0 34 31"><rect x="0.5" y="0.5" width="33" height="30" fill="#fff" stroke="#111"/><path d="M1 1 h4v4h-4z M9 1h4v4h-4z M17 1h4v4h-4z M25 1h4v4h-4z M5 5h4v4h-4z M13 5h4v4h-4z M21 5h4v4h-4z M29 5h4v4h-4z M1 9h4v4h-4z M9 9h4v4h-4z M17 9h4v4h-4z M25 9h4v4h-4z M5 13h4v4h-4z M13 13h4v4h-4z M21 13h4v4h-4z M29 13h4v4h-4z M1 17h4v4h-4z M9 17h4v4h-4z M17 17h4v4h-4z M25 17h4v4h-4z M5 21h4v4h-4z M13 21h4v4h-4z M21 21h4v4h-4z M29 21h4v4h-4z M1 25h4v5h-4z M9 25h4v5h-4z M17 25h4v5h-4z M25 25h4v5h-4z" fill="#cbcbcb"/><path d="M11 18 Q10 6 17 5 Q24 6 23 18 L20 12 L14 12Z" fill="#f6c0dc" opacity=".85"/></svg>
<div class="t f" style="left:1683px;top:744px;width:57px;color:#f4f4f4;font-size:11.5px"><span>100 % 通常</span></div>
<div class="t f" style="left:1683px;top:759px;width:52px;color:#f4f4f4;font-size:11.5px"><span>レイヤー 94</span></div>
<div class="a" style="left:1635px;top:775px;width:268px;height:1px;background:#3e3f43"></div>
<svg style="left:1644px;top:779px;" width="34" height="31" viewBox="0 0 34 31"><rect x="0.5" y="0.5" width="33" height="30" fill="#fff" stroke="#111"/><path d="M1 1 h4v4h-4z M9 1h4v4h-4z M17 1h4v4h-4z M25 1h4v4h-4z M5 5h4v4h-4z M13 5h4v4h-4z M21 5h4v4h-4z M29 5h4v4h-4z M1 9h4v4h-4z M9 9h4v4h-4z M17 9h4v4h-4z M25 9h4v4h-4z M5 13h4v4h-4z M13 13h4v4h-4z M21 13h4v4h-4z M29 13h4v4h-4z M1 17h4v4h-4z M9 17h4v4h-4z M17 17h4v4h-4z M25 17h4v4h-4z M5 21h4v4h-4z M13 21h4v4h-4z M21 21h4v4h-4z M29 21h4v4h-4z M1 25h4v5h-4z M9 25h4v5h-4z M17 25h4v5h-4z M25 25h4v5h-4z" fill="#cbcbcb"/><path d="M12 22 Q10 8 17 6 Q24 8 22 22 M15 8 L14 20 M19 8 L20 20 M13 12 L12 18" fill="none" stroke="#444" stroke-width=".8"/></svg>
<div class="t f" style="left:1683px;top:780px;width:51px;color:#f4f4f4;font-size:11.5px"><span>37 % 通常</span></div>
<div class="t f" style="left:1683px;top:795px;width:52px;color:#f4f4f4;font-size:11.5px"><span>レイヤー 20</span></div>
<svg style="left:1560px;top:824px;" width="15" height="10" viewBox="0 0 15 10"><path d="M1 5 Q7.5 -1 14 5 Q7.5 11 1 5Z" fill="#9c9da1" stroke="#68696d" stroke-width="1.1"/><circle cx="7.5" cy="5" r="3" fill="#616266"/></svg>
<div class="a" style="left:1611px;top:811px;width:292px;height:1px;background:#3e3f43"></div>
<svg style="left:1613px;top:826px;" width="11" height="7" viewBox="0 0 11 7"><path d="M0 0 L11 0 L5.5 6Z" fill="#f0f0f0"/></svg>
<svg style="left:1673px;top:820px;" width="16" height="9" viewBox="0 0 16 9"><path d="M1 1 H6 L7 3 H15 L13 8 H1Z" fill="#f2eaa0" stroke="#222" stroke-width=".8"/><path d="M1 8 L4 4 H15 L13 8Z" fill="#444"/></svg>
<svg style="left:1630px;top:815px;" width="34" height="31" viewBox="0 0 34 31"><rect x="0.5" y="0.5" width="33" height="30" fill="#fff" stroke="#111"/><path d="M1 1 h4v4h-4z M9 1h4v4h-4z M17 1h4v4h-4z M25 1h4v4h-4z M5 5h4v4h-4z M13 5h4v4h-4z M21 5h4v4h-4z M29 5h4v4h-4z M1 9h4v4h-4z M9 9h4v4h-4z M17 9h4v4h-4z M25 9h4v4h-4z M5 13h4v4h-4z M13 13h4v4h-4z M21 13h4v4h-4z M29 13h4v4h-4z M1 17h4v4h-4z M9 17h4v4h-4z M17 17h4v4h-4z M25 17h4v4h-4z M5 21h4v4h-4z M13 21h4v4h-4z M21 21h4v4h-4z M29 21h4v4h-4z M1 25h4v5h-4z M9 25h4v5h-4z M17 25h4v5h-4z M25 25h4v5h-4z" fill="#cbcbcb"/><path d="M11 23 Q9 8 17 6 Q25 8 23 23 L21 15 L18 12 L13 15Z" fill="#f3b3d3" opacity=".8"/><path d="M12 20 Q11 10 17 7 M22 20 Q23 10 17 7 M15 9 L14 18 M19 9 L20 17" fill="none" stroke="#a08090" stroke-width=".6"/></svg>
<div class="t f" style="left:1694px;top:816px;width:57px;color:#f4f4f4;font-size:11.5px"><span>100 % 通常</span></div>
<div class="t f" style="left:1694px;top:831px;width:6px;color:#f4f4f4;font-size:11.5px"><span>8</span></div>
<svg style="left:1560px;top:860px;" width="15" height="10" viewBox="0 0 15 10"><path d="M1 5 Q7.5 -1 14 5 Q7.5 11 1 5Z" fill="#9c9da1" stroke="#68696d" stroke-width="1.1"/><circle cx="7.5" cy="5" r="3" fill="#616266"/></svg>
<div class="a" style="left:1635px;top:847px;width:268px;height:1px;background:#3e3f43"></div>
<svg style="left:1644px;top:851px;" width="34" height="31" viewBox="0 0 34 31"><rect x="0.5" y="0.5" width="33" height="30" fill="#fff" stroke="#111"/><path d="M1 1 h4v4h-4z M9 1h4v4h-4z M17 1h4v4h-4z M25 1h4v4h-4z M5 5h4v4h-4z M13 5h4v4h-4z M21 5h4v4h-4z M29 5h4v4h-4z M1 9h4v4h-4z M9 9h4v4h-4z M17 9h4v4h-4z M25 9h4v4h-4z M5 13h4v4h-4z M13 13h4v4h-4z M21 13h4v4h-4z M29 13h4v4h-4z M1 17h4v4h-4z M9 17h4v4h-4z M17 17h4v4h-4z M25 17h4v4h-4z M5 21h4v4h-4z M13 21h4v4h-4z M21 21h4v4h-4z M29 21h4v4h-4z M1 25h4v5h-4z M9 25h4v5h-4z M17 25h4v5h-4z M25 25h4v5h-4z" fill="#cbcbcb"/><path d="M12 22 Q10 8 17 6 Q24 8 22 22 M15 8 L14 20 M19 8 L20 20" fill="none" stroke="#aaa" stroke-width=".8"/></svg>
<div class="t f" style="left:1683px;top:852px;width:57px;color:#f4f4f4;font-size:11.5px"><span>100 % 通常</span></div>
<div class="t f" style="left:1683px;top:867px;width:52px;color:#f4f4f4;font-size:11.5px"><span>レイヤー 47</span></div>
<svg style="left:1560px;top:896px;" width="15" height="10" viewBox="0 0 15 10"><path d="M1 5 Q7.5 -1 14 5 Q7.5 11 1 5Z" fill="#9c9da1" stroke="#68696d" stroke-width="1.1"/><circle cx="7.5" cy="5" r="3" fill="#616266"/></svg>
<div class="a" style="left:1635px;top:883px;width:268px;height:1px;background:#3e3f43"></div>
<svg style="left:1644px;top:887px;" width="34" height="31" viewBox="0 0 34 31"><rect x="0.5" y="0.5" width="33" height="30" fill="#fff" stroke="#111"/><path d="M1 1 h4v4h-4z M9 1h4v4h-4z M17 1h4v4h-4z M25 1h4v4h-4z M5 5h4v4h-4z M13 5h4v4h-4z M21 5h4v4h-4z M29 5h4v4h-4z M1 9h4v4h-4z M9 9h4v4h-4z M17 9h4v4h-4z M25 9h4v4h-4z M5 13h4v4h-4z M13 13h4v4h-4z M21 13h4v4h-4z M29 13h4v4h-4z M1 17h4v4h-4z M9 17h4v4h-4z M17 17h4v4h-4z M25 17h4v4h-4z M5 21h4v4h-4z M13 21h4v4h-4z M21 21h4v4h-4z M29 21h4v4h-4z M1 25h4v5h-4z M9 25h4v5h-4z M17 25h4v5h-4z M25 25h4v5h-4z" fill="#cbcbcb"/><path d="M11 18 Q10 6 17 5 Q24 6 23 18 L20 12 L14 12Z" fill="#f6c0dc" opacity=".85"/></svg>
<div class="t f" style="left:1683px;top:888px;width:57px;color:#f4f4f4;font-size:11.5px"><span>100 % 通常</span></div>
<div class="t f" style="left:1683px;top:903px;width:52px;color:#f4f4f4;font-size:11.5px"><span>レイヤー 93</span></div>
<div class="a" style="left:1635px;top:919px;width:268px;height:1px;background:#3e3f43"></div>
<svg style="left:1644px;top:923px;" width="34" height="31" viewBox="0 0 34 31"><rect x="0.5" y="0.5" width="33" height="30" fill="#fff" stroke="#111"/><path d="M1 1 h4v4h-4z M9 1h4v4h-4z M17 1h4v4h-4z M25 1h4v4h-4z M5 5h4v4h-4z M13 5h4v4h-4z M21 5h4v4h-4z M29 5h4v4h-4z M1 9h4v4h-4z M9 9h4v4h-4z M17 9h4v4h-4z M25 9h4v4h-4z M5 13h4v4h-4z M13 13h4v4h-4z M21 13h4v4h-4z M29 13h4v4h-4z M1 17h4v4h-4z M9 17h4v4h-4z M17 17h4v4h-4z M25 17h4v4h-4z M5 21h4v4h-4z M13 21h4v4h-4z M21 21h4v4h-4z M29 21h4v4h-4z M1 25h4v5h-4z M9 25h4v5h-4z M17 25h4v5h-4z M25 25h4v5h-4z" fill="#cbcbcb"/><path d="M12 22 Q10 8 17 6 Q24 8 22 22 M15 8 L14 20 M19 8 L20 20 M13 12 L12 18" fill="none" stroke="#444" stroke-width=".8"/></svg>
<div class="t f" style="left:1683px;top:924px;width:51px;color:#f4f4f4;font-size:11.5px"><span>52 % 通常</span></div>
<div class="t f" style="left:1683px;top:939px;width:52px;color:#f4f4f4;font-size:11.5px"><span>レイヤー 19</span></div>
<svg style="left:1560px;top:968px;" width="15" height="10" viewBox="0 0 15 10"><path d="M1 5 Q7.5 -1 14 5 Q7.5 11 1 5Z" fill="#9c9da1" stroke="#68696d" stroke-width="1.1"/><circle cx="7.5" cy="5" r="3" fill="#616266"/></svg>
<div class="a" style="left:1611px;top:955px;width:292px;height:1px;background:#3e3f43"></div>
<svg style="left:1613px;top:970px;" width="11" height="7" viewBox="0 0 11 7"><path d="M0 0 L11 0 L5.5 6Z" fill="#f0f0f0"/></svg>
<svg style="left:1673px;top:964px;" width="16" height="9" viewBox="0 0 16 9"><path d="M1 1 H6 L7 3 H15 L13 8 H1Z" fill="#f2eaa0" stroke="#222" stroke-width=".8"/><path d="M1 8 L4 4 H15 L13 8Z" fill="#444"/></svg>
<svg style="left:1630px;top:959px;" width="34" height="31" viewBox="0 0 34 31"><rect x="0.5" y="0.5" width="33" height="30" fill="#fff" stroke="#111"/><path d="M1 1 h4v4h-4z M9 1h4v4h-4z M17 1h4v4h-4z M25 1h4v4h-4z M5 5h4v4h-4z M13 5h4v4h-4z M21 5h4v4h-4z M29 5h4v4h-4z M1 9h4v4h-4z M9 9h4v4h-4z M17 9h4v4h-4z M25 9h4v4h-4z M5 13h4v4h-4z M13 13h4v4h-4z M21 13h4v4h-4z M29 13h4v4h-4z M1 17h4v4h-4z M9 17h4v4h-4z M17 17h4v4h-4z M25 17h4v4h-4z M5 21h4v4h-4z M13 21h4v4h-4z M21 21h4v4h-4z M29 21h4v4h-4z M1 25h4v5h-4z M9 25h4v5h-4z M17 25h4v5h-4z M25 25h4v5h-4z" fill="#cbcbcb"/><path d="M11 23 Q9 8 17 6 Q25 8 23 23 L21 15 L18 12 L13 15Z" fill="#f3b3d3" opacity=".8"/><path d="M12 20 Q11 10 17 7 M22 20 Q23 10 17 7 M15 9 L14 18 M19 9 L20 17" fill="none" stroke="#a08090" stroke-width=".6"/></svg>
<div class="t f" style="left:1694px;top:960px;width:57px;color:#f4f4f4;font-size:11.5px"><span>100 % 通常</span></div>
<div class="t f" style="left:1694px;top:975px;width:6px;color:#f4f4f4;font-size:11.5px"><span>7</span></div>
<svg style="left:1560px;top:1004px;" width="15" height="10" viewBox="0 0 15 10"><path d="M1 5 Q7.5 -1 14 5 Q7.5 11 1 5Z" fill="#9c9da1" stroke="#68696d" stroke-width="1.1"/><circle cx="7.5" cy="5" r="3" fill="#616266"/></svg>
<div class="a" style="left:1635px;top:991px;width:268px;height:1px;background:#3e3f43"></div>
<svg style="left:1644px;top:995px;" width="34" height="31" viewBox="0 0 34 31"><rect x="0.5" y="0.5" width="33" height="30" fill="#fff" stroke="#111"/><path d="M1 1 h4v4h-4z M9 1h4v4h-4z M17 1h4v4h-4z M25 1h4v4h-4z M5 5h4v4h-4z M13 5h4v4h-4z M21 5h4v4h-4z M29 5h4v4h-4z M1 9h4v4h-4z M9 9h4v4h-4z M17 9h4v4h-4z M25 9h4v4h-4z M5 13h4v4h-4z M13 13h4v4h-4z M21 13h4v4h-4z M29 13h4v4h-4z M1 17h4v4h-4z M9 17h4v4h-4z M17 17h4v4h-4z M25 17h4v4h-4z M5 21h4v4h-4z M13 21h4v4h-4z M21 21h4v4h-4z M29 21h4v4h-4z M1 25h4v5h-4z M9 25h4v5h-4z M17 25h4v5h-4z M25 25h4v5h-4z" fill="#cbcbcb"/><path d="M12 22 Q10 8 17 6 Q24 8 22 22 M15 8 L14 20 M19 8 L20 20" fill="none" stroke="#aaa" stroke-width=".8"/></svg>
<div class="t f" style="left:1683px;top:996px;width:57px;color:#f4f4f4;font-size:11.5px"><span>100 % 通常</span></div>
<div class="t f" style="left:1683px;top:1011px;width:52px;color:#f4f4f4;font-size:11.5px"><span>レイヤー 46</span></div>
<svg style="left:1560px;top:1040px;" width="15" height="10" viewBox="0 0 15 10"><path d="M1 5 Q7.5 -1 14 5 Q7.5 11 1 5Z" fill="#9c9da1" stroke="#68696d" stroke-width="1.1"/><circle cx="7.5" cy="5" r="3" fill="#616266"/></svg>
<div class="a" style="left:1635px;top:1027px;width:268px;height:1px;background:#3e3f43"></div>
<svg style="left:1644px;top:1031px;" width="34" height="31" viewBox="0 0 34 31"><rect x="0.5" y="0.5" width="33" height="30" fill="#fff" stroke="#111"/><path d="M1 1 h4v4h-4z M9 1h4v4h-4z M17 1h4v4h-4z M25 1h4v4h-4z M5 5h4v4h-4z M13 5h4v4h-4z M21 5h4v4h-4z M29 5h4v4h-4z M1 9h4v4h-4z M9 9h4v4h-4z M17 9h4v4h-4z M25 9h4v4h-4z M5 13h4v4h-4z M13 13h4v4h-4z M21 13h4v4h-4z M29 13h4v4h-4z M1 17h4v4h-4z M9 17h4v4h-4z M17 17h4v4h-4z M25 17h4v4h-4z M5 21h4v4h-4z M13 21h4v4h-4z M21 21h4v4h-4z M29 21h4v4h-4z M1 25h4v5h-4z M9 25h4v5h-4z M17 25h4v5h-4z M25 25h4v5h-4z" fill="#cbcbcb"/><path d="M11 23 Q9 8 17 6 Q25 8 23 23 L21 15 L18 12 L13 15Z" fill="#f3b3d3" opacity=".8"/><path d="M12 20 Q11 10 17 7 M22 20 Q23 10 17 7 M15 9 L14 18 M19 9 L20 17" fill="none" stroke="#a08090" stroke-width=".6"/></svg>
<div class="t f" style="left:1683px;top:1032px;width:57px;color:#f4f4f4;font-size:11.5px"><span>100 % 通常</span></div>
<div class="t f" style="left:1683px;top:1047px;width:52px;color:#f4f4f4;font-size:11.5px"><span>レイヤー ?</span></div>
<div class="a" style="left:1554px;top:1037px;width:366px;height:3px;background:#76777b"></div>
<div class="a" style="left:0px;top:1038px;width:1920px;height:2px;background:linear-gradient(#8a8b8f 50%,#dcdcdc 50%)"></div>
<div class="a" style="left:0px;top:1040px;width:1920px;height:40px;background:linear-gradient(100deg,#141213 0%,#1c1718 30%,#2a1a1c 33%,#161314 36%,#1d1819 55%,#231c1d 70%,#151213 80%,#1a1617 100%)"></div>
<div class="a" style="left:0px;top:1040px;width:48px;height:40px;background:#121011"></div>
<svg style="left:16px;top:1052px;" width="17" height="17" viewBox="0 0 17 17"><path d="M0 2.2 L7 1.2 V7.8 H0Z M8 1 L17 0 V7.8 H8Z M0 8.8 H7 V15.4 L0 14.5Z M8 8.8 H17 V17 L8 15.8Z" fill="#fff"/></svg>
<div class="a" style="left:48px;top:1040px;width:344px;height:40px;background:#333333"></div>
<svg style="left:56px;top:1049px;" width="24" height="24" viewBox="0 0 24 24"><circle cx="12" cy="11" r="9.3" fill="none" stroke="#f4f4f4" stroke-width="2.6"/></svg>
<div class="t f" style="left:86px;top:1053px;width:118px;color:#9c9c9c;font-size:15px"><span>何でも聞いてください</span></div>
<svg style="left:365px;top:1051px;" width="14" height="19" viewBox="0 0 14 19"><rect x="4" y="1" width="6" height="11" rx="3" fill="none" stroke="#aaa" stroke-width="1.3"/><path d="M1.5 8 Q1.5 14 7 14 Q12.5 14 12.5 8 M7 14 V17 M4 17.5 H10" fill="none" stroke="#aaa" stroke-width="1.2"/></svg>
<svg style="left:404px;top:1050px;" width="24" height="20" viewBox="0 0 24 20"><rect x="6" y="3" width="12" height="14" fill="none" stroke="#f2f2f2" stroke-width="1.6"/><path d="M3 5 H2 V15 H3 M21 5 H22 V15 H21" fill="none" stroke="#f2f2f2" stroke-width="1.4"/></svg>
<svg style="left:455px;top:1049px;" width="24" height="23" viewBox="0 0 24 23"><path d="M3 13 Q3 2 12 2 Q21 2 21 11 V13 H8 Q9 18 14 18 Q18 18 21 16 V20 Q17 22 13 22 Q3 22 3 13Z M8 9.5 H16 Q15 6 12 6 Q9 6 8 9.5Z" fill="#1479d8"/></svg>
<svg style="left:502px;top:1050px;" width="24" height="21" viewBox="0 0 24 21"><path d="M1 3 H9 L11 5 H23 V19 H1Z" fill="#e9c54a"/><path d="M1 7 H23 V19 H1Z" fill="#f7d860"/><rect x="7" y="12" width="10" height="7" fill="#2e9ae0"/><rect x="9.5" y="15" width="5" height="4" fill="#f7d860"/></svg>
<svg style="left:551px;top:1048px;" width="24" height="24" viewBox="0 0 24 24"><path d="M2 7 H22 V22 H2Z" fill="#f4f4f4"/><path d="M7 7 Q7 2 12 2 Q17 2 17 7" fill="none" stroke="#f4f4f4" stroke-width="1.6"/><rect x="7" y="10" width="4.5" height="4" fill="#1a1a1a"/><rect x="12.5" y="10" width="4.5" height="4" fill="#1a1a1a"/><rect x="7" y="15" width="4.5" height="4" fill="#1a1a1a"/><rect x="12.5" y="15" width="4.5" height="4" fill="#1a1a1a"/></svg>
<div class="a" style="left:601px;top:1048px;width:24px;height:24px;border-radius:50%;background:conic-gradient(from -60deg,#db4437 0deg 120deg,#f4c20d 120deg 240deg,#0f9d58 240deg 360deg)"></div>
<div class="a" style="left:607px;top:1054px;width:12px;height:12px;border-radius:50%;background:#4285f4;box-shadow:0 0 0 2px #fff"></div>
<div class="a" style="left:650px;top:1049px;width:22px;height:22px;background:linear-gradient(#eee,#bbb)"></div>
<svg style="left:650px;top:1049px;" width="22" height="22" viewBox="0 0 22 22"><path d="M14 6 Q7 5 5 10 Q4 15 10 16 Q16 17 17 12 Q18 8 13 8 Q9 8 9 11 Q9 13 12 13" fill="none" stroke="#777" stroke-width="2.2" stroke-linecap="round"/></svg>
<div class="a" style="left:687px;top:1040px;width:47px;height:40px;background:rgba(255,255,255,.1)"></div>
<div class="a" style="left:699px;top:1049px;width:22px;height:22px;background:linear-gradient(#f4f4f4,#ccc)"></div>
<svg style="left:699px;top:1049px;" width="22" height="22" viewBox="0 0 22 22"><path d="M6 9 Q6 4 12 4 Q18 4 17 9 Q16 13 11 13 Q8 13 9 10 Q10 8 13 9 M10 14 L9 18" fill="none" stroke="#222" stroke-width="2.4" stroke-linecap="round"/></svg>
<div class="a" style="left:592px;top:1077px;width:42px;height:3px;background:#f0b3b8"></div>
<div class="a" style="left:640px;top:1077px;width:42px;height:3px;background:#f0b3b8"></div>
<div class="a" style="left:687px;top:1077px;width:47px;height:3px;background:#f0b3b8"></div>
<svg style="left:1655px;top:1054px;" width="14" height="9" viewBox="0 0 14 9"><path d="M1 8 L7 2 L13 8" fill="none" stroke="#eee" stroke-width="1.4"/></svg>
<svg style="left:1677px;top:1053px;" width="18" height="15" viewBox="0 0 18 15"><rect x="3" y="3" width="13" height="9" fill="none" stroke="#eee" stroke-width="1.3"/><path d="M9.5 12 V14 M6 14.5 H13" stroke="#eee" stroke-width="1.2"/><rect x="1" y="1" width="4" height="4" fill="#1a1617" stroke="#eee"/></svg>
<svg style="left:1701px;top:1052px;" width="18" height="17" viewBox="0 0 18 17"><path d="M1 6 H4 L8 2 V15 L4 11 H1Z" fill="none" stroke="#eee" stroke-width="1.2"/><path d="M10.5 6 Q12 8.5 10.5 11 M13 4 Q15.5 8.5 13 13 M15.5 2 Q19 8.5 15.5 15" fill="none" stroke="#ddd" stroke-width="1.1"/></svg>
<svg style="left:1725px;top:1051px;" width="18" height="18" viewBox="0 0 18 18"><rect x="1" y="2" width="15" height="13" fill="#f2f2f2"/><path d="M3 5 H13 M3 8 H13 M3 11 H9" stroke="#333" stroke-width="1"/><circle cx="13" cy="13" r="4" fill="#1a1617" stroke="#f2f2f2" stroke-width="1.3"/><path d="M11 13 H15" stroke="#f2f2f2" stroke-width="1.2"/></svg>
<svg style="left:1749px;top:1052px;" width="25" height="15" viewBox="0 0 25 15"><rect x="1" y="1" width="23" height="13" fill="none" stroke="#eee" stroke-width="1.3"/><path d="M4 4.5 H21 M4 7.5 H21" stroke="#eee" stroke-width="1.2" stroke-dasharray="1.5 1"/><path d="M7 10.5 H18" stroke="#eee" stroke-width="1.2"/></svg>
<svg style="left:1784px;top:1053px;" width="11" height="16" viewBox="0 0 11 16"><path d="M0.5 15 L4.5 1 H6.5 L10.5 15 H8 L7 11 H4 L3 15Z M4.5 9 H6.5 L5.5 4.5Z" fill="#eee"/></svg>
<div class="a" style="left:1810px;top:1053px;width:15px;height:15px;border-radius:50%;background:#1a6fd8"></div>
<div class="a" style="left:1820px;top:1061px;width:6px;height:6px;border-radius:50%;background:#e33"></div>
<div class="a" style="left:1817px;top:1064px;width:4px;height:4px;border-radius:50%;background:#f4c20d"></div>
<div class="t f" style="left:1862px;top:1046px;width:27px;color:#f2f2f2;font-size:12px"><span>19:55</span></div>
<div class="t f" style="left:1846px;top:1062px;width:58px;color:#f2f2f2;font-size:12px"><span>2016/09/26</span></div>
<div class="a" style="left:1917px;top:1040px;width:1px;height:40px;background:#5a5a5a"></div>
<script>
document.querySelectorAll('.f').forEach(function(e){var w=parseFloat(e.style.width);var s=e.firstChild;var sw=s.getBoundingClientRect().width;if(sw>0){s.style.transform='scaleX('+(w/sw)+')';}});
</script>
</body></html>
